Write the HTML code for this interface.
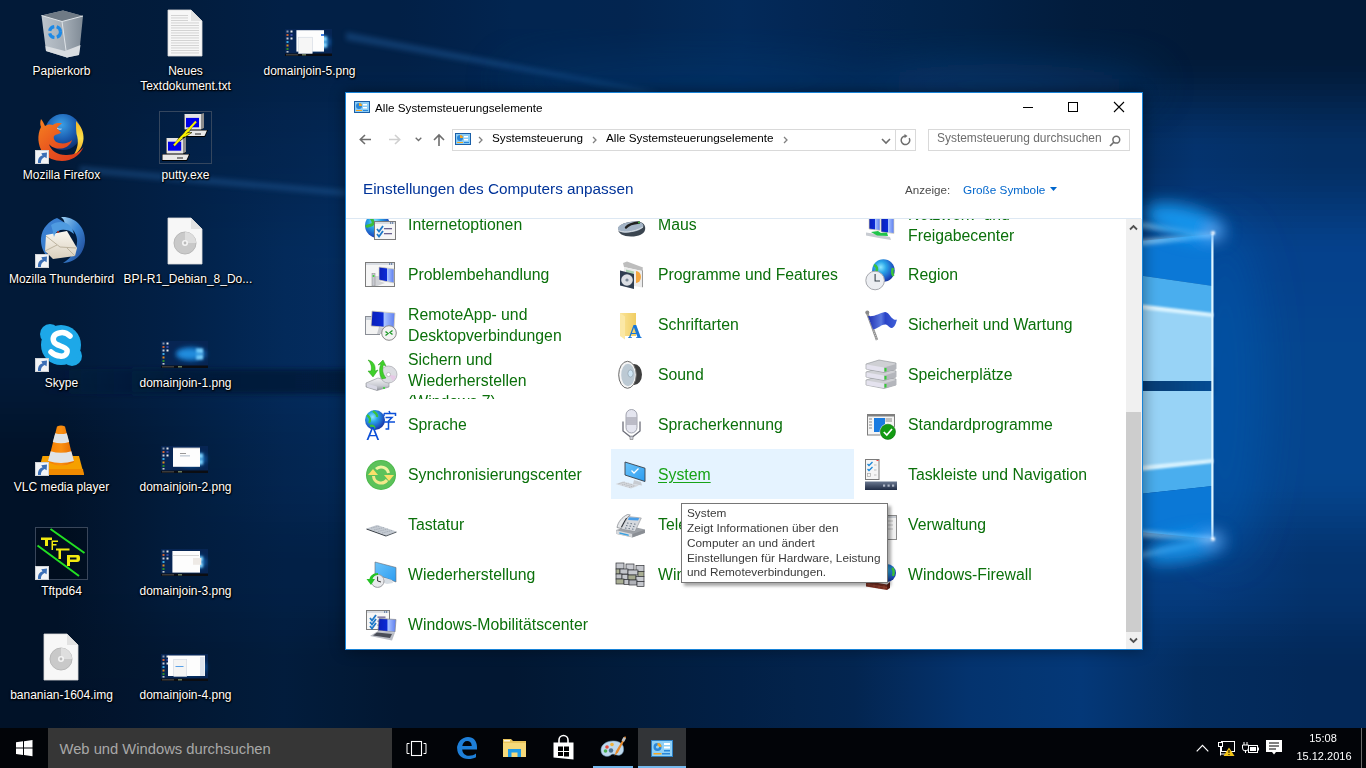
<!DOCTYPE html><html><head><meta charset="utf-8"><style>
*{margin:0;padding:0;box-sizing:border-box}
html,body{width:1366px;height:768px;overflow:hidden}
body{position:relative;font-family:"Liberation Sans",sans-serif;background:#021c3e}
.a{position:absolute}
svg.i{position:absolute;overflow:visible}
.t{position:absolute;white-space:nowrap;line-height:21px}
.dl{position:absolute;width:124px;text-align:center;color:#fff;font-size:12px;line-height:15px;white-space:nowrap;
 text-shadow:0 0 2px #000,0 1px 2px #000,1px 1px 1px rgba(0,0,0,.8)}
.it{position:absolute;white-space:nowrap;color:#0b700b;font-size:15.8px;line-height:21px}

#wall{position:absolute;left:0;top:0;width:1366px;height:728px;overflow:hidden;background:#03224a}
</style></head><body>
<svg width="0" height="0" style="position:absolute">
<defs>
 <radialGradient id="globe" cx=".38" cy=".35" r=".7"><stop offset="0" stop-color="#8ee8ff"/><stop offset=".35" stop-color="#2aa6e8"/><stop offset=".8" stop-color="#1d4fc0"/><stop offset="1" stop-color="#16309a"/></radialGradient>
 <linearGradient id="scr" x1="0" y1="0" x2="1" y2="0"><stop offset="0" stop-color="#0a1fb8"/><stop offset=".5" stop-color="#0b2ad6"/><stop offset=".55" stop-color="#aac4ff"/><stop offset="1" stop-color="#5b7cf0"/></linearGradient>
 <linearGradient id="metal" x1="0" y1="0" x2="0" y2="1"><stop offset="0" stop-color="#f4f4f6"/><stop offset=".6" stop-color="#c9cbd2"/><stop offset="1" stop-color="#8d9099"/></linearGradient>
 <linearGradient id="lblue" x1="0" y1="0" x2="1" y2="1"><stop offset="0" stop-color="#6cc4fa"/><stop offset="1" stop-color="#2c9cf0"/></linearGradient>
 <linearGradient id="fold" x1="0" y1="0" x2="1" y2="0"><stop offset="0" stop-color="#fbe59a"/><stop offset="1" stop-color="#f0cd62"/></linearGradient>
 <linearGradient id="flag" x1="0" y1="0" x2="1" y2="0"><stop offset="0" stop-color="#1f2fb0"/><stop offset=".45" stop-color="#5a78e0"/><stop offset=".6" stop-color="#2a44c8"/><stop offset="1" stop-color="#4060d8"/></linearGradient>
 <linearGradient id="tbar" x1="0" y1="0" x2="0" y2="1"><stop offset="0" stop-color="#6a7890"/><stop offset="1" stop-color="#1f2b44"/></linearGradient>
</defs></svg>

<div id="wall">
<div style="position:absolute;left:0;top:0px;width:1366px;height:6px;background:linear-gradient(90deg,rgb(2,26,56) 0.0px,rgb(2,26,56) 56.9px,rgb(2,27,58) 113.8px,rgb(2,28,60) 170.8px,rgb(2,30,65) 227.7px,rgb(2,32,70) 284.6px,rgb(2,32,70) 341.5px,rgb(2,32,70) 398.4px,rgb(2,34,75) 455.3px,rgb(2,37,80) 512.2px,rgb(2,37,80) 569.2px,rgb(3,37,80) 626.1px,rgb(3,40,85) 683.0px,rgb(3,42,90) 739.9px,rgb(3,39,85) 796.8px,rgb(3,37,80) 853.8px,rgb(2,36,76) 910.7px,rgb(2,34,72) 967.6px,rgb(2,31,66) 1024.5px,rgb(2,28,60) 1081.4px,rgb(2,27,58) 1138.3px,rgb(2,26,56) 1195.2px,rgb(2,26,56) 1252.2px,rgb(2,26,56) 1309.1px,rgb(2,26,56) 1366.0px)"></div>
<div style="position:absolute;left:0;top:6px;width:1366px;height:6px;background:linear-gradient(90deg,rgb(2,26,56) 0.0px,rgb(2,26,56) 56.9px,rgb(2,27,58) 113.8px,rgb(2,28,60) 170.8px,rgb(2,30,65) 227.7px,rgb(2,32,70) 284.6px,rgb(2,32,70) 341.5px,rgb(2,32,70) 398.4px,rgb(2,34,75) 455.3px,rgb(2,37,80) 512.2px,rgb(2,37,80) 569.2px,rgb(3,37,80) 626.1px,rgb(3,40,85) 683.0px,rgb(3,42,90) 739.9px,rgb(3,39,85) 796.8px,rgb(3,37,80) 853.8px,rgb(2,36,76) 910.7px,rgb(2,34,72) 967.6px,rgb(2,31,66) 1024.5px,rgb(2,28,60) 1081.4px,rgb(2,27,58) 1138.3px,rgb(2,26,56) 1195.2px,rgb(2,26,56) 1252.2px,rgb(2,26,56) 1309.1px,rgb(2,26,56) 1366.0px)"></div>
<div style="position:absolute;left:0;top:12px;width:1366px;height:6px;background:linear-gradient(90deg,rgb(2,26,56) 0.0px,rgb(2,26,56) 56.9px,rgb(2,27,58) 113.8px,rgb(2,28,60) 170.8px,rgb(2,30,65) 227.7px,rgb(2,32,70) 284.6px,rgb(2,32,70) 341.5px,rgb(2,32,70) 398.4px,rgb(2,34,75) 455.3px,rgb(2,37,80) 512.2px,rgb(2,37,80) 569.2px,rgb(3,37,80) 626.1px,rgb(3,40,85) 683.0px,rgb(3,42,90) 739.9px,rgb(3,39,85) 796.8px,rgb(3,37,80) 853.8px,rgb(2,36,76) 910.7px,rgb(2,34,72) 967.6px,rgb(2,31,66) 1024.5px,rgb(2,28,60) 1081.4px,rgb(2,27,58) 1138.3px,rgb(2,26,56) 1195.2px,rgb(2,26,56) 1252.2px,rgb(2,26,56) 1309.1px,rgb(2,26,56) 1366.0px)"></div>
<div style="position:absolute;left:0;top:18px;width:1366px;height:6px;background:linear-gradient(90deg,rgb(2,26,56) 0.0px,rgb(2,26,56) 56.9px,rgb(2,27,58) 113.8px,rgb(2,28,60) 170.8px,rgb(2,30,65) 227.7px,rgb(2,32,70) 284.6px,rgb(2,32,70) 341.5px,rgb(2,32,70) 398.4px,rgb(2,34,75) 455.3px,rgb(2,37,80) 512.2px,rgb(2,37,80) 569.2px,rgb(3,37,80) 626.1px,rgb(3,40,85) 683.0px,rgb(3,42,90) 739.9px,rgb(3,39,85) 796.8px,rgb(3,37,80) 853.8px,rgb(2,36,76) 910.7px,rgb(2,34,72) 967.6px,rgb(2,31,66) 1024.5px,rgb(2,28,60) 1081.4px,rgb(2,27,58) 1138.3px,rgb(2,26,56) 1195.2px,rgb(2,26,56) 1252.2px,rgb(2,26,56) 1309.1px,rgb(2,26,56) 1366.0px)"></div>
<div style="position:absolute;left:0;top:24px;width:1366px;height:6px;background:linear-gradient(90deg,rgb(2,26,56) 0.0px,rgb(2,26,56) 56.9px,rgb(2,27,58) 113.8px,rgb(2,28,60) 170.8px,rgb(2,30,65) 227.7px,rgb(2,32,70) 284.6px,rgb(2,32,70) 341.5px,rgb(2,32,70) 398.4px,rgb(2,34,75) 455.3px,rgb(2,37,80) 512.2px,rgb(2,37,80) 569.2px,rgb(3,37,80) 626.1px,rgb(3,40,85) 683.0px,rgb(3,42,90) 739.9px,rgb(3,39,85) 796.8px,rgb(3,37,80) 853.8px,rgb(2,36,76) 910.7px,rgb(2,34,72) 967.6px,rgb(2,31,66) 1024.5px,rgb(2,28,60) 1081.4px,rgb(2,27,58) 1138.3px,rgb(2,26,56) 1195.2px,rgb(2,26,56) 1252.2px,rgb(2,26,56) 1309.1px,rgb(2,26,56) 1366.0px)"></div>
<div style="position:absolute;left:0;top:30px;width:1366px;height:6px;background:linear-gradient(90deg,rgb(2,26,56) 0.0px,rgb(2,26,56) 56.9px,rgb(2,27,58) 113.8px,rgb(2,28,60) 170.8px,rgb(2,30,65) 227.7px,rgb(2,32,70) 284.6px,rgb(2,32,70) 341.5px,rgb(2,32,70) 398.4px,rgb(2,34,75) 455.3px,rgb(2,37,80) 512.2px,rgb(2,37,80) 569.2px,rgb(3,37,80) 626.1px,rgb(3,40,85) 683.0px,rgb(3,42,90) 739.9px,rgb(3,39,85) 796.8px,rgb(3,37,80) 853.8px,rgb(2,36,76) 910.7px,rgb(2,34,72) 967.6px,rgb(2,31,66) 1024.5px,rgb(2,28,60) 1081.4px,rgb(2,27,58) 1138.3px,rgb(2,26,56) 1195.2px,rgb(2,26,56) 1252.2px,rgb(2,26,56) 1309.1px,rgb(2,26,56) 1366.0px)"></div>
<div style="position:absolute;left:0;top:36px;width:1366px;height:6px;background:linear-gradient(90deg,rgb(2,26,56) 0.0px,rgb(2,26,56) 56.9px,rgb(2,27,58) 113.8px,rgb(2,28,60) 170.8px,rgb(2,30,65) 227.7px,rgb(2,32,70) 284.6px,rgb(2,32,70) 341.5px,rgb(2,32,70) 398.4px,rgb(2,34,75) 455.3px,rgb(2,37,80) 512.2px,rgb(2,37,80) 569.2px,rgb(3,37,80) 626.1px,rgb(3,40,85) 683.0px,rgb(3,42,90) 739.9px,rgb(3,39,85) 796.8px,rgb(3,37,80) 853.8px,rgb(2,36,76) 910.7px,rgb(2,34,72) 967.6px,rgb(2,31,66) 1024.5px,rgb(2,28,60) 1081.4px,rgb(2,27,58) 1138.3px,rgb(2,26,56) 1195.2px,rgb(2,26,56) 1252.2px,rgb(2,26,56) 1309.1px,rgb(2,26,56) 1366.0px)"></div>
<div style="position:absolute;left:0;top:42px;width:1366px;height:6px;background:linear-gradient(90deg,rgb(2,26,56) 0.0px,rgb(2,26,56) 56.9px,rgb(2,27,58) 113.8px,rgb(2,28,60) 170.8px,rgb(2,30,65) 227.7px,rgb(2,32,70) 284.6px,rgb(2,32,70) 341.5px,rgb(2,32,70) 398.4px,rgb(2,34,75) 455.3px,rgb(2,37,80) 512.2px,rgb(2,37,80) 569.2px,rgb(3,37,80) 626.1px,rgb(3,40,85) 683.0px,rgb(3,42,90) 739.9px,rgb(3,39,85) 796.8px,rgb(3,37,80) 853.8px,rgb(2,36,76) 910.7px,rgb(2,34,72) 967.6px,rgb(2,31,66) 1024.5px,rgb(2,28,60) 1081.4px,rgb(2,27,58) 1138.3px,rgb(2,26,56) 1195.2px,rgb(2,26,56) 1252.2px,rgb(2,26,56) 1309.1px,rgb(2,26,56) 1366.0px)"></div>
<div style="position:absolute;left:0;top:48px;width:1366px;height:6px;background:linear-gradient(90deg,rgb(2,26,56) 0.0px,rgb(2,26,56) 56.9px,rgb(2,27,58) 113.8px,rgb(2,28,60) 170.8px,rgb(2,30,65) 227.7px,rgb(2,32,70) 284.6px,rgb(2,32,70) 341.5px,rgb(2,32,70) 398.4px,rgb(2,34,75) 455.3px,rgb(2,37,80) 512.2px,rgb(2,37,80) 569.2px,rgb(3,37,80) 626.1px,rgb(3,40,85) 683.0px,rgb(3,42,90) 739.9px,rgb(3,39,85) 796.8px,rgb(3,37,80) 853.8px,rgb(2,36,76) 910.7px,rgb(2,34,72) 967.6px,rgb(2,31,66) 1024.5px,rgb(2,28,60) 1081.4px,rgb(2,27,58) 1138.3px,rgb(2,26,56) 1195.2px,rgb(2,26,56) 1252.2px,rgb(2,26,56) 1309.1px,rgb(2,26,56) 1366.0px)"></div>
<div style="position:absolute;left:0;top:54px;width:1366px;height:6px;background:linear-gradient(90deg,rgb(2,26,56) 0.0px,rgb(2,26,56) 56.9px,rgb(2,27,58) 113.8px,rgb(2,28,60) 170.8px,rgb(2,30,65) 227.7px,rgb(2,32,70) 284.6px,rgb(2,32,70) 341.5px,rgb(2,32,70) 398.4px,rgb(2,35,75) 455.3px,rgb(2,37,80) 512.2px,rgb(3,37,80) 569.2px,rgb(3,37,80) 626.1px,rgb(3,40,85) 683.0px,rgb(3,42,90) 739.9px,rgb(3,40,85) 796.8px,rgb(3,37,80) 853.8px,rgb(3,36,76) 910.7px,rgb(2,34,72) 967.6px,rgb(2,31,66) 1024.5px,rgb(2,28,60) 1081.4px,rgb(2,27,58) 1138.3px,rgb(2,26,56) 1195.2px,rgb(2,26,56) 1252.2px,rgb(2,26,56) 1309.1px,rgb(2,26,56) 1366.0px)"></div>
<div style="position:absolute;left:0;top:60px;width:1366px;height:6px;background:linear-gradient(90deg,rgb(2,26,56) 0.0px,rgb(2,26,56) 56.9px,rgb(2,27,58) 113.8px,rgb(2,28,60) 170.8px,rgb(2,30,65) 227.7px,rgb(2,32,70) 284.6px,rgb(2,32,70) 341.5px,rgb(2,32,71) 398.4px,rgb(2,35,75) 455.3px,rgb(2,37,80) 512.2px,rgb(3,37,80) 569.2px,rgb(3,37,81) 626.1px,rgb(3,40,85) 683.0px,rgb(3,42,90) 739.9px,rgb(3,40,85) 796.8px,rgb(3,37,81) 853.8px,rgb(3,36,77) 910.7px,rgb(2,34,73) 967.6px,rgb(2,31,67) 1024.5px,rgb(2,28,61) 1081.4px,rgb(2,28,59) 1138.3px,rgb(2,27,58) 1195.2px,rgb(2,27,58) 1252.2px,rgb(2,27,57) 1309.1px,rgb(2,27,57) 1366.0px)"></div>
<div style="position:absolute;left:0;top:66px;width:1366px;height:6px;background:linear-gradient(90deg,rgb(2,26,56) 0.0px,rgb(2,26,56) 56.9px,rgb(2,27,58) 113.8px,rgb(2,28,61) 170.8px,rgb(2,30,66) 227.7px,rgb(2,32,71) 284.6px,rgb(2,33,71) 341.5px,rgb(2,33,71) 398.4px,rgb(2,35,76) 455.3px,rgb(2,37,81) 512.2px,rgb(3,38,81) 569.2px,rgb(3,38,81) 626.1px,rgb(3,40,86) 683.0px,rgb(3,42,91) 739.9px,rgb(3,40,86) 796.8px,rgb(3,38,81) 853.8px,rgb(3,36,77) 910.7px,rgb(2,35,73) 967.6px,rgb(2,32,67) 1024.5px,rgb(2,29,61) 1081.4px,rgb(2,28,61) 1138.3px,rgb(2,28,60) 1195.2px,rgb(2,28,59) 1252.2px,rgb(2,27,59) 1309.1px,rgb(2,27,59) 1366.0px)"></div>
<div style="position:absolute;left:0;top:72px;width:1366px;height:6px;background:linear-gradient(90deg,rgb(2,26,56) 0.0px,rgb(2,26,56) 56.9px,rgb(2,27,59) 113.8px,rgb(2,29,61) 170.8px,rgb(2,31,66) 227.7px,rgb(2,33,71) 284.6px,rgb(2,33,72) 341.5px,rgb(2,33,73) 398.4px,rgb(2,35,77) 455.3px,rgb(2,38,81) 512.2px,rgb(3,38,82) 569.2px,rgb(3,38,83) 626.1px,rgb(3,40,87) 683.0px,rgb(3,43,91) 739.9px,rgb(3,40,87) 796.8px,rgb(3,38,83) 853.8px,rgb(3,37,78) 910.7px,rgb(2,35,74) 967.6px,rgb(2,32,68) 1024.5px,rgb(2,29,63) 1081.4px,rgb(2,29,63) 1138.3px,rgb(2,29,63) 1195.2px,rgb(2,29,62) 1252.2px,rgb(2,29,62) 1309.1px,rgb(2,29,62) 1366.0px)"></div>
<div style="position:absolute;left:0;top:78px;width:1366px;height:6px;background:linear-gradient(90deg,rgb(2,26,56) 0.0px,rgb(2,26,56) 56.9px,rgb(2,27,59) 113.8px,rgb(2,29,62) 170.8px,rgb(2,31,67) 227.7px,rgb(2,33,72) 284.6px,rgb(2,33,73) 341.5px,rgb(2,34,74) 398.4px,rgb(2,36,78) 455.3px,rgb(2,38,82) 512.2px,rgb(3,38,83) 569.2px,rgb(3,39,84) 626.1px,rgb(3,41,88) 683.0px,rgb(3,43,92) 739.9px,rgb(3,41,88) 796.8px,rgb(3,39,84) 853.8px,rgb(3,37,80) 910.7px,rgb(2,36,75) 967.6px,rgb(2,33,70) 1024.5px,rgb(2,30,64) 1081.4px,rgb(2,30,65) 1138.3px,rgb(2,31,66) 1195.2px,rgb(2,30,65) 1252.2px,rgb(2,30,64) 1309.1px,rgb(2,30,64) 1366.0px)"></div>
<div style="position:absolute;left:0;top:84px;width:1366px;height:6px;background:linear-gradient(90deg,rgb(2,26,56) 0.0px,rgb(2,26,56) 56.9px,rgb(2,28,59) 113.8px,rgb(2,29,63) 170.8px,rgb(2,31,68) 227.7px,rgb(2,33,73) 284.6px,rgb(2,34,74) 341.5px,rgb(2,35,75) 398.4px,rgb(2,36,79) 455.3px,rgb(2,38,83) 512.2px,rgb(3,39,84) 569.2px,rgb(3,40,85) 626.1px,rgb(3,41,89) 683.0px,rgb(3,43,93) 739.9px,rgb(3,41,89) 796.8px,rgb(3,40,85) 853.8px,rgb(3,38,81) 910.7px,rgb(2,36,77) 967.6px,rgb(2,33,71) 1024.5px,rgb(2,30,65) 1081.4px,rgb(2,31,68) 1138.3px,rgb(3,33,70) 1195.2px,rgb(3,32,69) 1252.2px,rgb(3,32,68) 1309.1px,rgb(3,32,68) 1366.0px)"></div>
<div style="position:absolute;left:0;top:90px;width:1366px;height:6px;background:linear-gradient(90deg,rgb(2,26,56) 0.0px,rgb(2,26,56) 56.9px,rgb(2,28,60) 113.8px,rgb(2,29,63) 170.8px,rgb(2,32,68) 227.7px,rgb(2,34,73) 284.6px,rgb(2,35,75) 341.5px,rgb(2,35,77) 398.4px,rgb(2,37,80) 455.3px,rgb(2,39,83) 512.2px,rgb(3,40,85) 569.2px,rgb(3,40,87) 626.1px,rgb(3,42,90) 683.0px,rgb(3,44,93) 739.9px,rgb(3,42,90) 796.8px,rgb(3,40,87) 853.8px,rgb(3,39,83) 910.7px,rgb(2,37,78) 967.6px,rgb(2,34,73) 1024.5px,rgb(2,31,67) 1081.4px,rgb(3,33,71) 1138.3px,rgb(3,35,75) 1195.2px,rgb(3,34,73) 1252.2px,rgb(3,33,71) 1309.1px,rgb(3,33,71) 1366.0px)"></div>
<div style="position:absolute;left:0;top:96px;width:1366px;height:6px;background:linear-gradient(90deg,rgb(2,26,56) 0.0px,rgb(2,26,56) 56.9px,rgb(2,28,60) 113.8px,rgb(2,30,64) 170.8px,rgb(2,32,69) 227.7px,rgb(2,34,74) 284.6px,rgb(2,35,76) 341.5px,rgb(2,36,79) 398.4px,rgb(2,38,81) 455.3px,rgb(2,39,84) 512.2px,rgb(3,40,86) 569.2px,rgb(3,41,89) 626.1px,rgb(3,43,91) 683.0px,rgb(3,44,94) 739.9px,rgb(3,43,91) 796.8px,rgb(3,41,89) 853.8px,rgb(3,39,84) 910.7px,rgb(2,37,80) 967.6px,rgb(2,35,74) 1024.5px,rgb(2,32,69) 1081.4px,rgb(3,34,74) 1138.3px,rgb(3,37,79) 1195.2px,rgb(3,36,77) 1252.2px,rgb(3,35,75) 1309.1px,rgb(3,35,75) 1366.0px)"></div>
<div style="position:absolute;left:0;top:102px;width:1366px;height:6px;background:linear-gradient(90deg,rgb(2,26,56) 0.0px,rgb(2,26,56) 56.9px,rgb(2,28,61) 113.8px,rgb(2,30,65) 170.8px,rgb(2,32,70) 227.7px,rgb(3,35,75) 284.6px,rgb(3,36,78) 341.5px,rgb(3,37,80) 398.4px,rgb(3,38,83) 455.3px,rgb(3,40,85) 512.2px,rgb(3,41,88) 569.2px,rgb(4,42,90) 626.1px,rgb(4,43,93) 683.0px,rgb(4,45,95) 739.9px,rgb(4,43,93) 796.8px,rgb(4,42,90) 853.8px,rgb(3,40,86) 910.7px,rgb(3,38,81) 967.6px,rgb(3,35,76) 1024.5px,rgb(3,33,70) 1081.4px,rgb(3,36,77) 1138.3px,rgb(3,39,84) 1195.2px,rgb(3,38,81) 1252.2px,rgb(3,37,79) 1309.1px,rgb(3,37,79) 1366.0px)"></div>
<div style="position:absolute;left:0;top:108px;width:1366px;height:6px;background:linear-gradient(90deg,rgb(2,26,56) 0.0px,rgb(2,26,56) 56.9px,rgb(2,28,61) 113.8px,rgb(2,30,66) 170.8px,rgb(2,33,71) 227.7px,rgb(3,35,76) 284.6px,rgb(3,37,79) 341.5px,rgb(3,38,82) 398.4px,rgb(3,39,84) 455.3px,rgb(3,40,86) 512.2px,rgb(3,42,89) 569.2px,rgb(4,43,92) 626.1px,rgb(4,44,94) 683.0px,rgb(4,45,96) 739.9px,rgb(4,44,94) 796.8px,rgb(4,43,92) 853.8px,rgb(3,41,87) 910.7px,rgb(3,39,83) 967.6px,rgb(3,36,77) 1024.5px,rgb(3,33,72) 1081.4px,rgb(3,37,80) 1138.3px,rgb(3,41,88) 1195.2px,rgb(3,40,85) 1252.2px,rgb(3,39,82) 1309.1px,rgb(3,39,82) 1366.0px)"></div>
<div style="position:absolute;left:0;top:114px;width:1366px;height:6px;background:linear-gradient(90deg,rgb(2,26,56) 0.0px,rgb(2,26,56) 56.9px,rgb(2,28,61) 113.8px,rgb(2,31,67) 170.8px,rgb(2,33,72) 227.7px,rgb(3,35,77) 284.6px,rgb(3,37,80) 341.5px,rgb(3,39,84) 398.4px,rgb(3,40,85) 455.3px,rgb(3,40,87) 512.2px,rgb(3,42,90) 569.2px,rgb(4,44,94) 626.1px,rgb(4,45,95) 683.0px,rgb(4,45,97) 739.9px,rgb(4,45,95) 796.8px,rgb(4,44,94) 853.8px,rgb(3,42,89) 910.7px,rgb(3,39,84) 967.6px,rgb(3,37,79) 1024.5px,rgb(3,34,74) 1081.4px,rgb(3,39,83) 1138.3px,rgb(3,43,93) 1195.2px,rgb(3,42,89) 1252.2px,rgb(3,40,86) 1309.1px,rgb(3,40,86) 1366.0px)"></div>
<div style="position:absolute;left:0;top:120px;width:1366px;height:6px;background:linear-gradient(90deg,rgb(2,26,56) 0.0px,rgb(2,26,56) 56.9px,rgb(2,29,62) 113.8px,rgb(2,31,68) 170.8px,rgb(2,33,73) 227.7px,rgb(3,36,78) 284.6px,rgb(3,38,81) 341.5px,rgb(3,40,85) 398.4px,rgb(3,40,86) 455.3px,rgb(3,41,88) 512.2px,rgb(3,43,91) 569.2px,rgb(4,45,95) 626.1px,rgb(4,45,96) 683.0px,rgb(4,46,98) 739.9px,rgb(4,45,96) 796.8px,rgb(4,45,95) 853.8px,rgb(3,42,90) 910.7px,rgb(3,40,86) 967.6px,rgb(3,37,80) 1024.5px,rgb(3,35,75) 1081.4px,rgb(3,40,86) 1138.3px,rgb(4,45,97) 1195.2px,rgb(4,44,93) 1252.2px,rgb(4,42,90) 1309.1px,rgb(4,42,90) 1366.0px)"></div>
<div style="position:absolute;left:0;top:126px;width:1366px;height:6px;background:linear-gradient(90deg,rgb(2,26,56) 0.0px,rgb(2,26,56) 56.9px,rgb(2,29,62) 113.8px,rgb(2,31,68) 170.8px,rgb(2,34,73) 227.7px,rgb(3,36,78) 284.6px,rgb(3,38,82) 341.5px,rgb(3,40,87) 398.4px,rgb(3,41,87) 455.3px,rgb(3,41,88) 512.2px,rgb(3,43,92) 569.2px,rgb(4,45,97) 626.1px,rgb(4,46,97) 683.0px,rgb(4,46,98) 739.9px,rgb(4,46,97) 796.8px,rgb(4,45,97) 853.8px,rgb(3,43,92) 910.7px,rgb(3,41,87) 967.6px,rgb(3,38,82) 1024.5px,rgb(3,35,77) 1081.4px,rgb(3,41,89) 1138.3px,rgb(4,47,101) 1195.2px,rgb(4,45,97) 1252.2px,rgb(4,43,93) 1309.1px,rgb(4,43,93) 1366.0px)"></div>
<div style="position:absolute;left:0;top:132px;width:1366px;height:6px;background:linear-gradient(90deg,rgb(2,26,56) 0.0px,rgb(2,26,56) 56.9px,rgb(2,29,62) 113.8px,rgb(2,32,69) 170.8px,rgb(2,34,74) 227.7px,rgb(3,36,79) 284.6px,rgb(3,39,83) 341.5px,rgb(3,41,88) 398.4px,rgb(3,41,88) 455.3px,rgb(3,41,89) 512.2px,rgb(3,44,93) 569.2px,rgb(4,46,98) 626.1px,rgb(4,46,98) 683.0px,rgb(4,46,99) 739.9px,rgb(4,46,98) 796.8px,rgb(4,46,98) 853.8px,rgb(3,44,93) 910.7px,rgb(3,41,88) 967.6px,rgb(3,39,83) 1024.5px,rgb(3,36,78) 1081.4px,rgb(3,42,91) 1138.3px,rgb(4,48,104) 1195.2px,rgb(4,47,100) 1252.2px,rgb(4,45,95) 1309.1px,rgb(4,45,95) 1366.0px)"></div>
<div style="position:absolute;left:0;top:138px;width:1366px;height:6px;background:linear-gradient(90deg,rgb(2,26,56) 0.0px,rgb(2,26,56) 56.9px,rgb(2,29,63) 113.8px,rgb(2,32,69) 170.8px,rgb(2,34,74) 227.7px,rgb(3,37,79) 284.6px,rgb(3,39,84) 341.5px,rgb(3,41,89) 398.4px,rgb(3,42,89) 455.3px,rgb(3,42,89) 512.2px,rgb(3,44,94) 569.2px,rgb(4,46,99) 626.1px,rgb(4,47,99) 683.0px,rgb(4,47,99) 739.9px,rgb(4,47,99) 796.8px,rgb(4,46,99) 853.8px,rgb(3,44,94) 910.7px,rgb(3,42,89) 967.6px,rgb(3,39,84) 1024.5px,rgb(3,36,79) 1081.4px,rgb(3,43,93) 1138.3px,rgb(4,50,107) 1195.2px,rgb(4,48,102) 1252.2px,rgb(4,46,98) 1309.1px,rgb(4,46,98) 1366.0px)"></div>
<div style="position:absolute;left:0;top:144px;width:1366px;height:6px;background:linear-gradient(90deg,rgb(2,26,56) 0.0px,rgb(2,26,56) 56.9px,rgb(2,29,63) 113.8px,rgb(2,32,70) 170.8px,rgb(2,34,75) 227.7px,rgb(3,37,80) 284.6px,rgb(3,39,85) 341.5px,rgb(3,42,90) 398.4px,rgb(3,42,90) 455.3px,rgb(3,42,90) 512.2px,rgb(3,44,95) 569.2px,rgb(4,47,100) 626.1px,rgb(4,47,100) 683.0px,rgb(4,47,100) 739.9px,rgb(4,47,100) 796.8px,rgb(4,47,100) 853.8px,rgb(3,44,95) 910.7px,rgb(3,42,90) 967.6px,rgb(3,39,85) 1024.5px,rgb(3,37,80) 1081.4px,rgb(3,44,94) 1138.3px,rgb(4,50,109) 1195.2px,rgb(4,49,104) 1252.2px,rgb(4,47,99) 1309.1px,rgb(4,47,99) 1366.0px)"></div>
<div style="position:absolute;left:0;top:150px;width:1366px;height:6px;background:linear-gradient(90deg,rgb(2,26,56) 0.0px,rgb(2,26,56) 56.9px,rgb(2,29,63) 113.8px,rgb(2,32,70) 170.8px,rgb(2,34,75) 227.7px,rgb(3,37,80) 284.6px,rgb(3,39,85) 341.5px,rgb(3,42,90) 398.4px,rgb(3,42,90) 455.3px,rgb(3,42,90) 512.2px,rgb(3,44,95) 569.2px,rgb(4,47,100) 626.1px,rgb(4,47,100) 683.0px,rgb(4,47,100) 739.9px,rgb(4,47,100) 796.8px,rgb(4,47,100) 853.8px,rgb(3,44,95) 910.7px,rgb(3,42,90) 967.6px,rgb(3,39,85) 1024.5px,rgb(3,37,80) 1081.4px,rgb(3,44,95) 1138.3px,rgb(4,51,110) 1195.2px,rgb(4,49,105) 1252.2px,rgb(4,47,100) 1309.1px,rgb(4,47,100) 1366.0px)"></div>
<div style="position:absolute;left:0;top:156px;width:1366px;height:6px;background:linear-gradient(90deg,rgb(2,26,56) 0.0px,rgb(2,26,56) 56.9px,rgb(2,29,63) 113.8px,rgb(2,32,70) 170.8px,rgb(3,35,75) 227.7px,rgb(3,37,80) 284.6px,rgb(3,40,85) 341.5px,rgb(3,42,90) 398.4px,rgb(3,42,90) 455.3px,rgb(3,42,90) 512.2px,rgb(4,45,95) 569.2px,rgb(4,47,100) 626.1px,rgb(4,47,100) 683.0px,rgb(4,47,100) 739.9px,rgb(4,47,100) 796.8px,rgb(4,47,100) 853.8px,rgb(4,45,95) 910.7px,rgb(3,42,90) 967.6px,rgb(3,40,85) 1024.5px,rgb(3,37,80) 1081.4px,rgb(4,44,95) 1138.3px,rgb(4,51,110) 1195.2px,rgb(4,49,105) 1252.2px,rgb(4,47,100) 1309.1px,rgb(4,47,100) 1366.0px)"></div>
<div style="position:absolute;left:0;top:162px;width:1366px;height:6px;background:linear-gradient(90deg,rgb(2,26,56) 0.0px,rgb(2,26,56) 56.9px,rgb(2,29,63) 113.8px,rgb(2,32,70) 170.8px,rgb(2,35,75) 227.7px,rgb(3,37,80) 284.6px,rgb(3,40,85) 341.5px,rgb(3,42,90) 398.4px,rgb(3,42,90) 455.3px,rgb(3,42,90) 512.2px,rgb(4,45,95) 569.2px,rgb(4,47,100) 626.1px,rgb(4,47,100) 683.0px,rgb(4,47,100) 739.9px,rgb(4,47,100) 796.8px,rgb(4,47,100) 853.8px,rgb(4,45,96) 910.7px,rgb(3,42,91) 967.6px,rgb(3,40,86) 1024.5px,rgb(3,38,81) 1081.4px,rgb(4,44,96) 1138.3px,rgb(4,51,111) 1195.2px,rgb(4,49,106) 1252.2px,rgb(4,47,101) 1309.1px,rgb(4,47,101) 1366.0px)"></div>
<div style="position:absolute;left:0;top:168px;width:1366px;height:6px;background:linear-gradient(90deg,rgb(2,26,56) 0.0px,rgb(2,26,56) 56.9px,rgb(2,29,63) 113.8px,rgb(2,32,70) 170.8px,rgb(2,35,75) 227.7px,rgb(3,37,81) 284.6px,rgb(3,40,86) 341.5px,rgb(3,42,91) 398.4px,rgb(3,42,91) 455.3px,rgb(3,43,91) 512.2px,rgb(4,45,96) 569.2px,rgb(4,47,101) 626.1px,rgb(4,47,101) 683.0px,rgb(4,48,101) 739.9px,rgb(4,48,101) 796.8px,rgb(4,48,101) 853.8px,rgb(4,45,97) 910.7px,rgb(3,43,92) 967.6px,rgb(3,41,88) 1024.5px,rgb(3,38,83) 1081.4px,rgb(4,45,97) 1138.3px,rgb(4,52,112) 1195.2px,rgb(4,50,107) 1252.2px,rgb(4,48,102) 1309.1px,rgb(4,48,102) 1366.0px)"></div>
<div style="position:absolute;left:0;top:174px;width:1366px;height:6px;background:linear-gradient(90deg,rgb(2,26,56) 0.0px,rgb(2,26,56) 56.9px,rgb(2,29,63) 113.8px,rgb(2,32,70) 170.8px,rgb(2,35,76) 227.7px,rgb(3,38,81) 284.6px,rgb(3,40,86) 341.5px,rgb(3,43,91) 398.4px,rgb(3,43,92) 455.3px,rgb(3,43,92) 512.2px,rgb(4,45,97) 569.2px,rgb(4,47,101) 626.1px,rgb(4,48,102) 683.0px,rgb(4,48,102) 739.9px,rgb(4,48,102) 796.8px,rgb(4,48,102) 853.8px,rgb(4,46,98) 910.7px,rgb(3,44,94) 967.6px,rgb(3,42,90) 1024.5px,rgb(3,40,85) 1081.4px,rgb(4,46,99) 1138.3px,rgb(4,52,113) 1195.2px,rgb(4,51,109) 1252.2px,rgb(4,49,104) 1309.1px,rgb(4,49,104) 1366.0px)"></div>
<div style="position:absolute;left:0;top:180px;width:1366px;height:6px;background:linear-gradient(90deg,rgb(2,26,56) 0.0px,rgb(2,26,56) 56.9px,rgb(2,29,63) 113.8px,rgb(2,32,70) 170.8px,rgb(2,35,76) 227.7px,rgb(3,38,82) 284.6px,rgb(3,40,87) 341.5px,rgb(3,43,92) 398.4px,rgb(3,43,93) 455.3px,rgb(3,44,93) 512.2px,rgb(4,46,98) 569.2px,rgb(4,48,102) 626.1px,rgb(4,48,103) 683.0px,rgb(4,49,103) 739.9px,rgb(4,49,103) 796.8px,rgb(4,49,103) 853.8px,rgb(4,47,100) 910.7px,rgb(3,45,97) 967.6px,rgb(3,43,93) 1024.5px,rgb(3,41,88) 1081.4px,rgb(4,47,102) 1138.3px,rgb(4,53,115) 1195.2px,rgb(4,52,111) 1252.2px,rgb(4,50,107) 1309.1px,rgb(4,50,107) 1366.0px)"></div>
<div style="position:absolute;left:0;top:186px;width:1366px;height:6px;background:linear-gradient(90deg,rgb(2,26,56) 0.0px,rgb(2,26,56) 56.9px,rgb(2,29,63) 113.8px,rgb(2,32,70) 170.8px,rgb(2,35,76) 227.7px,rgb(3,38,82) 284.6px,rgb(3,41,87) 341.5px,rgb(3,43,92) 398.4px,rgb(3,44,94) 455.3px,rgb(3,44,95) 512.2px,rgb(4,46,99) 569.2px,rgb(4,48,102) 626.1px,rgb(4,49,104) 683.0px,rgb(4,49,105) 739.9px,rgb(4,49,105) 796.8px,rgb(4,49,105) 853.8px,rgb(4,48,102) 910.7px,rgb(3,47,100) 967.6px,rgb(3,45,96) 1024.5px,rgb(3,43,92) 1081.4px,rgb(4,49,105) 1138.3px,rgb(4,54,117) 1195.2px,rgb(4,53,113) 1252.2px,rgb(4,51,110) 1309.1px,rgb(4,51,110) 1366.0px)"></div>
<div style="position:absolute;left:0;top:192px;width:1366px;height:6px;background:linear-gradient(90deg,rgb(2,26,56) 0.0px,rgb(2,26,56) 56.9px,rgb(2,29,63) 113.8px,rgb(2,32,70) 170.8px,rgb(2,35,77) 227.7px,rgb(3,39,83) 284.6px,rgb(3,41,88) 341.5px,rgb(3,44,93) 398.4px,rgb(3,44,95) 455.3px,rgb(3,45,96) 512.2px,rgb(4,47,100) 569.2px,rgb(4,48,103) 626.1px,rgb(4,49,105) 683.0px,rgb(4,50,106) 739.9px,rgb(4,50,106) 796.8px,rgb(4,50,106) 853.8px,rgb(4,49,104) 910.7px,rgb(4,48,103) 967.6px,rgb(4,46,99) 1024.5px,rgb(4,45,96) 1081.4px,rgb(4,50,108) 1138.3px,rgb(4,55,119) 1195.2px,rgb(4,54,116) 1252.2px,rgb(4,53,113) 1309.1px,rgb(4,53,113) 1366.0px)"></div>
<div style="position:absolute;left:0;top:198px;width:1366px;height:6px;background:linear-gradient(90deg,rgb(2,26,56) 0.0px,rgb(2,26,56) 56.9px,rgb(2,29,63) 113.8px,rgb(2,32,70) 170.8px,rgb(2,35,77) 227.7px,rgb(3,39,84) 284.6px,rgb(3,41,89) 341.5px,rgb(3,44,94) 398.4px,rgb(3,45,96) 455.3px,rgb(3,46,98) 512.2px,rgb(4,47,101) 569.2px,rgb(4,49,104) 626.1px,rgb(4,50,106) 683.0px,rgb(4,51,108) 739.9px,rgb(4,51,108) 796.8px,rgb(4,51,108) 853.8px,rgb(4,50,107) 910.7px,rgb(4,50,106) 967.6px,rgb(4,48,103) 1024.5px,rgb(4,47,100) 1081.4px,rgb(4,52,111) 1138.3px,rgb(4,57,122) 1195.2px,rgb(4,55,119) 1252.2px,rgb(4,54,116) 1309.1px,rgb(4,54,116) 1366.0px)"></div>
<div style="position:absolute;left:0;top:204px;width:1366px;height:6px;background:linear-gradient(90deg,rgb(2,26,56) 0.0px,rgb(2,26,56) 56.9px,rgb(2,29,63) 113.8px,rgb(2,32,70) 170.8px,rgb(2,36,77) 227.7px,rgb(3,39,85) 284.6px,rgb(3,42,90) 341.5px,rgb(3,44,95) 398.4px,rgb(3,45,97) 455.3px,rgb(3,46,100) 512.2px,rgb(4,48,102) 569.2px,rgb(4,49,105) 626.1px,rgb(4,50,107) 683.0px,rgb(4,51,110) 739.9px,rgb(4,51,110) 796.8px,rgb(4,51,110) 853.8px,rgb(4,51,110) 910.7px,rgb(4,51,109) 967.6px,rgb(4,50,107) 1024.5px,rgb(4,49,104) 1081.4px,rgb(4,53,114) 1138.3px,rgb(4,58,125) 1195.2px,rgb(4,57,122) 1252.2px,rgb(4,56,119) 1309.1px,rgb(4,56,119) 1366.0px)"></div>
<div style="position:absolute;left:0;top:210px;width:1366px;height:6px;background:linear-gradient(90deg,rgb(2,26,56) 0.0px,rgb(2,26,56) 56.9px,rgb(2,29,63) 113.8px,rgb(2,32,70) 170.8px,rgb(2,36,78) 227.7px,rgb(3,40,86) 284.6px,rgb(3,42,91) 341.5px,rgb(4,45,96) 398.4px,rgb(4,46,99) 455.3px,rgb(4,47,101) 512.2px,rgb(4,48,104) 569.2px,rgb(4,49,106) 626.1px,rgb(4,51,109) 683.0px,rgb(4,52,111) 739.9px,rgb(4,52,111) 796.8px,rgb(4,52,111) 853.8px,rgb(4,53,112) 910.7px,rgb(4,53,113) 967.6px,rgb(4,52,111) 1024.5px,rgb(4,51,109) 1081.4px,rgb(4,55,118) 1138.3px,rgb(5,59,127) 1195.2px,rgb(5,58,125) 1252.2px,rgb(5,57,123) 1309.1px,rgb(5,57,123) 1366.0px)"></div>
<div style="position:absolute;left:0;top:216px;width:1366px;height:6px;background:linear-gradient(90deg,rgb(2,26,56) 0.0px,rgb(2,26,56) 56.9px,rgb(2,29,63) 113.8px,rgb(2,32,70) 170.8px,rgb(2,36,78) 227.7px,rgb(3,40,87) 284.6px,rgb(3,43,92) 341.5px,rgb(4,45,97) 398.4px,rgb(4,47,100) 455.3px,rgb(4,48,103) 512.2px,rgb(4,49,105) 569.2px,rgb(4,50,107) 626.1px,rgb(4,51,110) 683.0px,rgb(4,53,113) 739.9px,rgb(4,53,113) 796.8px,rgb(4,53,113) 853.8px,rgb(4,54,115) 910.7px,rgb(4,54,116) 967.6px,rgb(4,54,115) 1024.5px,rgb(4,53,113) 1081.4px,rgb(4,56,121) 1138.3px,rgb(5,60,130) 1195.2px,rgb(5,60,128) 1252.2px,rgb(5,59,126) 1309.1px,rgb(5,59,126) 1366.0px)"></div>
<div style="position:absolute;left:0;top:222px;width:1366px;height:6px;background:linear-gradient(90deg,rgb(2,26,56) 0.0px,rgb(2,26,56) 56.9px,rgb(2,29,63) 113.8px,rgb(2,32,70) 170.8px,rgb(2,36,79) 227.7px,rgb(3,41,87) 284.6px,rgb(3,43,92) 341.5px,rgb(4,46,97) 398.4px,rgb(4,47,101) 455.3px,rgb(4,49,105) 512.2px,rgb(4,49,106) 569.2px,rgb(4,50,107) 626.1px,rgb(4,52,111) 683.0px,rgb(4,54,115) 739.9px,rgb(4,54,115) 796.8px,rgb(4,54,115) 853.8px,rgb(4,55,117) 910.7px,rgb(4,56,119) 967.6px,rgb(4,55,118) 1024.5px,rgb(4,55,117) 1081.4px,rgb(5,58,124) 1138.3px,rgb(5,61,132) 1195.2px,rgb(5,61,131) 1252.2px,rgb(5,60,129) 1309.1px,rgb(5,60,129) 1366.0px)"></div>
<div style="position:absolute;left:0;top:228px;width:1366px;height:6px;background:linear-gradient(90deg,rgb(2,26,56) 0.0px,rgb(2,26,56) 56.9px,rgb(2,29,63) 113.8px,rgb(2,32,70) 170.8px,rgb(2,37,79) 227.7px,rgb(3,41,88) 284.6px,rgb(3,44,93) 341.5px,rgb(4,46,98) 398.4px,rgb(4,48,102) 455.3px,rgb(4,49,106) 512.2px,rgb(4,50,107) 569.2px,rgb(4,50,108) 626.1px,rgb(4,52,112) 683.0px,rgb(4,54,116) 739.9px,rgb(4,54,116) 796.8px,rgb(4,54,116) 853.8px,rgb(4,56,119) 910.7px,rgb(5,57,122) 967.6px,rgb(5,57,121) 1024.5px,rgb(5,56,121) 1081.4px,rgb(5,59,127) 1138.3px,rgb(5,62,134) 1195.2px,rgb(5,62,133) 1252.2px,rgb(5,62,132) 1309.1px,rgb(5,62,132) 1366.0px)"></div>
<div style="position:absolute;left:0;top:234px;width:1366px;height:6px;background:linear-gradient(90deg,rgb(2,26,56) 0.0px,rgb(2,26,56) 56.9px,rgb(2,29,63) 113.8px,rgb(2,32,70) 170.8px,rgb(2,37,79) 227.7px,rgb(3,41,89) 284.6px,rgb(3,44,94) 341.5px,rgb(4,46,99) 398.4px,rgb(4,48,103) 455.3px,rgb(4,50,107) 512.2px,rgb(4,50,108) 569.2px,rgb(4,50,109) 626.1px,rgb(4,53,113) 683.0px,rgb(4,55,117) 739.9px,rgb(4,55,117) 796.8px,rgb(4,55,117) 853.8px,rgb(4,57,121) 910.7px,rgb(5,59,125) 967.6px,rgb(5,58,124) 1024.5px,rgb(5,58,124) 1081.4px,rgb(5,61,130) 1138.3px,rgb(5,63,136) 1195.2px,rgb(5,63,136) 1252.2px,rgb(5,63,135) 1309.1px,rgb(5,63,135) 1366.0px)"></div>
<div style="position:absolute;left:0;top:240px;width:1366px;height:6px;background:linear-gradient(90deg,rgb(2,26,56) 0.0px,rgb(2,26,56) 56.9px,rgb(2,29,63) 113.8px,rgb(2,32,70) 170.8px,rgb(2,37,80) 227.7px,rgb(3,42,89) 284.6px,rgb(3,44,94) 341.5px,rgb(4,47,99) 398.4px,rgb(4,49,104) 455.3px,rgb(4,50,109) 512.2px,rgb(4,51,109) 569.2px,rgb(4,51,109) 626.1px,rgb(4,53,114) 683.0px,rgb(4,55,119) 739.9px,rgb(4,55,119) 796.8px,rgb(4,55,119) 853.8px,rgb(4,58,123) 910.7px,rgb(5,60,127) 967.6px,rgb(5,59,127) 1024.5px,rgb(5,59,126) 1081.4px,rgb(5,62,132) 1138.3px,rgb(5,64,138) 1195.2px,rgb(5,64,138) 1252.2px,rgb(5,64,137) 1309.1px,rgb(5,64,137) 1366.0px)"></div>
<div style="position:absolute;left:0;top:246px;width:1366px;height:6px;background:linear-gradient(90deg,rgb(2,26,56) 0.0px,rgb(2,26,56) 56.9px,rgb(2,29,63) 113.8px,rgb(2,32,70) 170.8px,rgb(2,37,80) 227.7px,rgb(3,42,90) 284.6px,rgb(3,44,95) 341.5px,rgb(4,47,100) 398.4px,rgb(4,49,105) 455.3px,rgb(4,51,109) 512.2px,rgb(4,51,110) 569.2px,rgb(4,51,110) 626.1px,rgb(4,53,115) 683.0px,rgb(4,56,119) 739.9px,rgb(4,56,119) 796.8px,rgb(4,56,119) 853.8px,rgb(4,58,124) 910.7px,rgb(5,60,129) 967.6px,rgb(5,60,129) 1024.5px,rgb(5,60,128) 1081.4px,rgb(5,62,134) 1138.3px,rgb(5,65,139) 1195.2px,rgb(5,65,139) 1252.2px,rgb(5,64,139) 1309.1px,rgb(5,64,139) 1366.0px)"></div>
<div style="position:absolute;left:0;top:252px;width:1366px;height:6px;background:linear-gradient(90deg,rgb(2,26,56) 0.0px,rgb(2,26,56) 56.9px,rgb(2,29,63) 113.8px,rgb(2,32,70) 170.8px,rgb(2,37,80) 227.7px,rgb(3,42,90) 284.6px,rgb(3,44,95) 341.5px,rgb(4,47,100) 398.4px,rgb(4,49,105) 455.3px,rgb(4,51,110) 512.2px,rgb(4,51,110) 569.2px,rgb(4,51,110) 626.1px,rgb(4,53,115) 683.0px,rgb(4,56,120) 739.9px,rgb(4,56,120) 796.8px,rgb(4,56,120) 853.8px,rgb(4,58,125) 910.7px,rgb(5,61,130) 967.6px,rgb(5,61,130) 1024.5px,rgb(5,61,130) 1081.4px,rgb(5,63,135) 1138.3px,rgb(5,65,140) 1195.2px,rgb(5,65,140) 1252.2px,rgb(5,65,140) 1309.1px,rgb(5,65,140) 1366.0px)"></div>
<div style="position:absolute;left:0;top:258px;width:1366px;height:6px;background:linear-gradient(90deg,rgb(2,26,56) 0.0px,rgb(2,26,56) 56.9px,rgb(2,29,63) 113.8px,rgb(2,32,70) 170.8px,rgb(2,37,80) 227.7px,rgb(3,42,90) 284.6px,rgb(4,45,95) 341.5px,rgb(4,47,100) 398.4px,rgb(4,49,105) 455.3px,rgb(4,51,110) 512.2px,rgb(4,51,110) 569.2px,rgb(4,51,110) 626.1px,rgb(4,54,115) 683.0px,rgb(4,56,120) 739.9px,rgb(4,56,120) 796.8px,rgb(4,56,120) 853.8px,rgb(4,58,125) 910.7px,rgb(5,61,130) 967.6px,rgb(5,61,130) 1024.5px,rgb(5,61,130) 1081.4px,rgb(5,63,135) 1138.3px,rgb(5,65,140) 1195.2px,rgb(5,65,140) 1252.2px,rgb(5,65,140) 1309.1px,rgb(5,65,140) 1366.0px)"></div>
<div style="position:absolute;left:0;top:264px;width:1366px;height:6px;background:linear-gradient(90deg,rgb(2,26,56) 0.0px,rgb(2,26,56) 56.9px,rgb(2,29,63) 113.8px,rgb(2,32,70) 170.8px,rgb(2,37,80) 227.7px,rgb(3,42,90) 284.6px,rgb(4,44,95) 341.5px,rgb(4,47,100) 398.4px,rgb(4,49,105) 455.3px,rgb(4,51,110) 512.2px,rgb(4,51,110) 569.2px,rgb(4,51,110) 626.1px,rgb(4,54,115) 683.0px,rgb(4,56,120) 739.9px,rgb(4,56,120) 796.8px,rgb(4,56,120) 853.8px,rgb(4,58,125) 910.7px,rgb(5,61,130) 967.6px,rgb(5,61,130) 1024.5px,rgb(5,61,130) 1081.4px,rgb(5,63,135) 1138.3px,rgb(5,65,140) 1195.2px,rgb(5,65,140) 1252.2px,rgb(5,65,140) 1309.1px,rgb(5,65,140) 1366.0px)"></div>
<div style="position:absolute;left:0;top:270px;width:1366px;height:6px;background:linear-gradient(90deg,rgb(2,26,56) 0.0px,rgb(2,26,56) 56.9px,rgb(2,29,63) 113.8px,rgb(2,32,70) 170.8px,rgb(2,37,80) 227.7px,rgb(3,42,90) 284.6px,rgb(4,44,95) 341.5px,rgb(4,47,100) 398.4px,rgb(4,49,105) 455.3px,rgb(4,51,110) 512.2px,rgb(4,51,110) 569.2px,rgb(4,51,110) 626.1px,rgb(4,54,115) 683.0px,rgb(4,56,120) 739.9px,rgb(4,56,120) 796.8px,rgb(4,56,120) 853.8px,rgb(4,58,125) 910.7px,rgb(5,61,130) 967.6px,rgb(5,61,130) 1024.5px,rgb(5,61,130) 1081.4px,rgb(5,63,135) 1138.3px,rgb(5,65,140) 1195.2px,rgb(5,65,140) 1252.2px,rgb(5,65,140) 1309.1px,rgb(5,65,140) 1366.0px)"></div>
<div style="position:absolute;left:0;top:276px;width:1366px;height:6px;background:linear-gradient(90deg,rgb(2,26,56) 0.0px,rgb(2,26,56) 56.9px,rgb(2,29,63) 113.8px,rgb(2,32,70) 170.8px,rgb(2,37,80) 227.7px,rgb(3,42,90) 284.6px,rgb(4,44,95) 341.5px,rgb(4,47,100) 398.4px,rgb(4,49,105) 455.3px,rgb(4,51,110) 512.2px,rgb(4,51,110) 569.2px,rgb(4,51,110) 626.1px,rgb(4,54,115) 683.0px,rgb(4,56,120) 739.9px,rgb(4,56,120) 796.8px,rgb(4,56,120) 853.8px,rgb(4,58,125) 910.7px,rgb(5,61,130) 967.6px,rgb(5,61,130) 1024.5px,rgb(5,61,131) 1081.4px,rgb(5,63,136) 1138.3px,rgb(5,65,140) 1195.2px,rgb(5,65,140) 1252.2px,rgb(5,65,140) 1309.1px,rgb(5,65,140) 1366.0px)"></div>
<div style="position:absolute;left:0;top:282px;width:1366px;height:6px;background:linear-gradient(90deg,rgb(2,26,56) 0.0px,rgb(2,26,56) 56.9px,rgb(2,29,63) 113.8px,rgb(2,32,70) 170.8px,rgb(2,37,80) 227.7px,rgb(3,42,90) 284.6px,rgb(4,44,95) 341.5px,rgb(4,47,100) 398.4px,rgb(4,49,105) 455.3px,rgb(4,51,110) 512.2px,rgb(4,51,110) 569.2px,rgb(4,51,110) 626.1px,rgb(4,54,115) 683.0px,rgb(4,56,120) 739.9px,rgb(4,56,120) 796.8px,rgb(4,56,120) 853.8px,rgb(4,58,125) 910.7px,rgb(5,61,130) 967.6px,rgb(5,61,131) 1024.5px,rgb(5,62,131) 1081.4px,rgb(5,64,136) 1138.3px,rgb(5,66,140) 1195.2px,rgb(5,66,140) 1252.2px,rgb(5,66,140) 1309.1px,rgb(5,66,140) 1366.0px)"></div>
<div style="position:absolute;left:0;top:288px;width:1366px;height:6px;background:linear-gradient(90deg,rgb(2,26,56) 0.0px,rgb(2,26,56) 56.9px,rgb(2,29,63) 113.8px,rgb(2,32,70) 170.8px,rgb(2,37,80) 227.7px,rgb(3,42,90) 284.6px,rgb(4,44,95) 341.5px,rgb(4,47,100) 398.4px,rgb(4,49,105) 455.3px,rgb(4,51,110) 512.2px,rgb(4,51,110) 569.2px,rgb(4,51,110) 626.1px,rgb(4,54,115) 683.0px,rgb(4,56,120) 739.9px,rgb(4,56,120) 796.8px,rgb(4,56,120) 853.8px,rgb(4,58,125) 910.7px,rgb(5,61,130) 967.6px,rgb(5,61,131) 1024.5px,rgb(5,62,132) 1081.4px,rgb(5,64,136) 1138.3px,rgb(5,66,140) 1195.2px,rgb(5,66,140) 1252.2px,rgb(5,66,140) 1309.1px,rgb(5,66,140) 1366.0px)"></div>
<div style="position:absolute;left:0;top:294px;width:1366px;height:6px;background:linear-gradient(90deg,rgb(2,26,56) 0.0px,rgb(2,26,56) 56.9px,rgb(2,29,63) 113.8px,rgb(2,32,70) 170.8px,rgb(2,37,80) 227.7px,rgb(3,42,90) 284.6px,rgb(4,44,95) 341.5px,rgb(4,47,100) 398.4px,rgb(4,49,105) 455.3px,rgb(4,51,110) 512.2px,rgb(4,51,110) 569.2px,rgb(4,51,110) 626.1px,rgb(4,54,115) 683.0px,rgb(4,56,120) 739.9px,rgb(4,56,120) 796.8px,rgb(4,56,120) 853.8px,rgb(4,59,125) 910.7px,rgb(5,61,130) 967.6px,rgb(5,62,131) 1024.5px,rgb(5,62,133) 1081.4px,rgb(5,64,137) 1138.3px,rgb(5,66,141) 1195.2px,rgb(5,66,141) 1252.2px,rgb(5,66,141) 1309.1px,rgb(5,66,141) 1366.0px)"></div>
<div style="position:absolute;left:0;top:300px;width:1366px;height:6px;background:linear-gradient(90deg,rgb(2,26,56) 0.0px,rgb(2,26,56) 56.9px,rgb(2,29,63) 113.8px,rgb(2,32,70) 170.8px,rgb(2,37,80) 227.7px,rgb(3,42,90) 284.6px,rgb(4,44,95) 341.5px,rgb(4,47,100) 398.4px,rgb(4,49,105) 455.3px,rgb(4,51,110) 512.2px,rgb(4,51,110) 569.2px,rgb(4,51,110) 626.1px,rgb(4,54,115) 683.0px,rgb(4,56,120) 739.9px,rgb(4,56,120) 796.8px,rgb(4,56,120) 853.8px,rgb(4,58,125) 910.7px,rgb(5,61,130) 967.6px,rgb(5,62,132) 1024.5px,rgb(5,62,134) 1081.4px,rgb(5,64,137) 1138.3px,rgb(5,66,141) 1195.2px,rgb(5,66,141) 1252.2px,rgb(5,66,141) 1309.1px,rgb(5,66,141) 1366.0px)"></div>
<div style="position:absolute;left:0;top:306px;width:1366px;height:6px;background:linear-gradient(90deg,rgb(2,26,56) 0.0px,rgb(2,26,56) 56.9px,rgb(2,29,63) 113.8px,rgb(2,32,70) 170.8px,rgb(2,37,80) 227.7px,rgb(3,42,90) 284.6px,rgb(4,44,95) 341.5px,rgb(4,47,100) 398.4px,rgb(4,49,105) 455.3px,rgb(4,51,110) 512.2px,rgb(4,51,110) 569.2px,rgb(4,51,110) 626.1px,rgb(4,54,115) 683.0px,rgb(4,56,120) 739.9px,rgb(4,56,120) 796.8px,rgb(4,56,120) 853.8px,rgb(4,58,125) 910.7px,rgb(5,61,130) 967.6px,rgb(5,62,132) 1024.5px,rgb(5,63,135) 1081.4px,rgb(5,65,138) 1138.3px,rgb(5,67,141) 1195.2px,rgb(5,67,141) 1252.2px,rgb(5,67,141) 1309.1px,rgb(5,67,141) 1366.0px)"></div>
<div style="position:absolute;left:0;top:312px;width:1366px;height:6px;background:linear-gradient(90deg,rgb(2,26,56) 0.0px,rgb(2,26,56) 56.9px,rgb(2,29,63) 113.8px,rgb(2,32,70) 170.8px,rgb(2,37,80) 227.7px,rgb(3,42,90) 284.6px,rgb(4,44,95) 341.5px,rgb(4,47,100) 398.4px,rgb(4,49,105) 455.3px,rgb(4,51,110) 512.2px,rgb(4,51,110) 569.2px,rgb(4,51,110) 626.1px,rgb(4,54,115) 683.0px,rgb(4,56,120) 739.9px,rgb(4,56,120) 796.8px,rgb(4,56,120) 853.8px,rgb(4,58,125) 910.7px,rgb(5,61,130) 967.6px,rgb(5,62,133) 1024.5px,rgb(5,63,135) 1081.4px,rgb(5,65,138) 1138.3px,rgb(5,67,141) 1195.2px,rgb(5,67,141) 1252.2px,rgb(5,67,141) 1309.1px,rgb(5,67,141) 1366.0px)"></div>
<div style="position:absolute;left:0;top:318px;width:1366px;height:6px;background:linear-gradient(90deg,rgb(2,26,56) 0.0px,rgb(2,26,56) 56.9px,rgb(2,29,63) 113.8px,rgb(2,32,70) 170.8px,rgb(2,37,80) 227.7px,rgb(3,42,90) 284.6px,rgb(4,44,95) 341.5px,rgb(4,47,100) 398.4px,rgb(4,49,105) 455.3px,rgb(4,51,110) 512.2px,rgb(4,51,110) 569.2px,rgb(4,51,110) 626.1px,rgb(4,54,115) 683.0px,rgb(4,56,120) 739.9px,rgb(4,56,120) 796.8px,rgb(4,56,120) 853.8px,rgb(4,58,125) 910.7px,rgb(5,61,130) 967.6px,rgb(5,62,133) 1024.5px,rgb(5,64,136) 1081.4px,rgb(5,66,139) 1138.3px,rgb(5,68,141) 1195.2px,rgb(5,68,141) 1252.2px,rgb(5,68,141) 1309.1px,rgb(5,68,141) 1366.0px)"></div>
<div style="position:absolute;left:0;top:324px;width:1366px;height:6px;background:linear-gradient(90deg,rgb(2,26,56) 0.0px,rgb(2,26,56) 56.9px,rgb(2,29,63) 113.8px,rgb(2,32,70) 170.8px,rgb(2,37,80) 227.7px,rgb(3,42,90) 284.6px,rgb(4,44,95) 341.5px,rgb(4,47,100) 398.4px,rgb(4,49,105) 455.3px,rgb(4,51,110) 512.2px,rgb(4,51,110) 569.2px,rgb(4,51,110) 626.1px,rgb(4,54,115) 683.0px,rgb(4,56,120) 739.9px,rgb(4,56,120) 796.8px,rgb(4,56,120) 853.8px,rgb(4,58,125) 910.7px,rgb(5,61,130) 967.6px,rgb(5,62,134) 1024.5px,rgb(5,64,137) 1081.4px,rgb(5,66,139) 1138.3px,rgb(5,68,141) 1195.2px,rgb(5,68,141) 1252.2px,rgb(5,68,141) 1309.1px,rgb(5,68,141) 1366.0px)"></div>
<div style="position:absolute;left:0;top:330px;width:1366px;height:6px;background:linear-gradient(90deg,rgb(2,26,56) 0.0px,rgb(2,26,56) 56.9px,rgb(2,29,63) 113.8px,rgb(2,32,70) 170.8px,rgb(2,37,80) 227.7px,rgb(3,42,90) 284.6px,rgb(4,44,95) 341.5px,rgb(4,47,100) 398.4px,rgb(4,49,105) 455.3px,rgb(4,51,110) 512.2px,rgb(4,51,110) 569.2px,rgb(4,51,110) 626.1px,rgb(4,54,115) 683.0px,rgb(4,56,120) 739.9px,rgb(4,56,120) 796.8px,rgb(4,56,120) 853.8px,rgb(4,58,125) 910.7px,rgb(5,61,130) 967.6px,rgb(5,63,134) 1024.5px,rgb(5,64,138) 1081.4px,rgb(5,66,140) 1138.3px,rgb(5,68,142) 1195.2px,rgb(5,68,142) 1252.2px,rgb(5,68,142) 1309.1px,rgb(5,68,142) 1366.0px)"></div>
<div style="position:absolute;left:0;top:336px;width:1366px;height:6px;background:linear-gradient(90deg,rgb(2,26,56) 0.0px,rgb(2,26,56) 56.9px,rgb(2,29,63) 113.8px,rgb(2,32,70) 170.8px,rgb(2,37,80) 227.7px,rgb(3,42,90) 284.6px,rgb(4,44,95) 341.5px,rgb(4,47,100) 398.4px,rgb(4,49,105) 455.3px,rgb(4,51,110) 512.2px,rgb(4,51,110) 569.2px,rgb(4,51,110) 626.1px,rgb(4,54,115) 683.0px,rgb(4,56,120) 739.9px,rgb(4,56,120) 796.8px,rgb(4,56,120) 853.8px,rgb(4,58,125) 910.7px,rgb(5,61,130) 967.6px,rgb(5,63,134) 1024.5px,rgb(5,64,139) 1081.4px,rgb(5,66,140) 1138.3px,rgb(5,68,142) 1195.2px,rgb(5,68,142) 1252.2px,rgb(5,68,142) 1309.1px,rgb(5,68,142) 1366.0px)"></div>
<div style="position:absolute;left:0;top:342px;width:1366px;height:6px;background:linear-gradient(90deg,rgb(2,26,56) 0.0px,rgb(2,26,56) 56.9px,rgb(2,29,63) 113.8px,rgb(2,32,70) 170.8px,rgb(2,37,80) 227.7px,rgb(3,42,90) 284.6px,rgb(4,44,95) 341.5px,rgb(4,47,100) 398.4px,rgb(4,49,105) 455.3px,rgb(4,51,110) 512.2px,rgb(4,51,110) 569.2px,rgb(4,51,110) 626.1px,rgb(4,54,115) 683.0px,rgb(4,56,120) 739.9px,rgb(4,56,120) 796.8px,rgb(4,56,120) 853.8px,rgb(4,58,125) 910.7px,rgb(5,61,130) 967.6px,rgb(5,63,135) 1024.5px,rgb(5,65,139) 1081.4px,rgb(5,67,140) 1138.3px,rgb(5,69,142) 1195.2px,rgb(5,69,142) 1252.2px,rgb(5,69,142) 1309.1px,rgb(5,69,142) 1366.0px)"></div>
<div style="position:absolute;left:0;top:348px;width:1366px;height:6px;background:linear-gradient(90deg,rgb(2,26,56) 0.0px,rgb(2,26,56) 56.9px,rgb(2,29,63) 113.8px,rgb(2,32,70) 170.8px,rgb(2,37,80) 227.7px,rgb(3,42,90) 284.6px,rgb(4,44,95) 341.5px,rgb(4,47,100) 398.4px,rgb(4,49,105) 455.3px,rgb(4,51,110) 512.2px,rgb(4,51,110) 569.2px,rgb(4,51,110) 626.1px,rgb(4,54,115) 683.0px,rgb(4,56,120) 739.9px,rgb(4,56,120) 796.8px,rgb(4,56,120) 853.8px,rgb(4,58,125) 910.7px,rgb(5,61,130) 967.6px,rgb(5,63,135) 1024.5px,rgb(5,65,140) 1081.4px,rgb(5,67,141) 1138.3px,rgb(5,69,142) 1195.2px,rgb(5,69,142) 1252.2px,rgb(5,69,142) 1309.1px,rgb(5,69,142) 1366.0px)"></div>
<div style="position:absolute;left:0;top:354px;width:1366px;height:6px;background:linear-gradient(90deg,rgb(2,26,56) 0.0px,rgb(2,26,56) 56.9px,rgb(2,29,63) 113.8px,rgb(2,32,70) 170.8px,rgb(2,37,80) 227.7px,rgb(3,42,90) 284.6px,rgb(4,44,95) 341.5px,rgb(4,47,100) 398.4px,rgb(4,49,105) 455.3px,rgb(4,51,110) 512.2px,rgb(4,51,110) 569.2px,rgb(4,51,110) 626.1px,rgb(4,54,115) 683.0px,rgb(4,56,120) 739.9px,rgb(4,56,120) 796.8px,rgb(4,56,120) 853.8px,rgb(4,58,125) 910.7px,rgb(5,61,130) 967.6px,rgb(5,63,135) 1024.5px,rgb(5,65,140) 1081.4px,rgb(5,67,141) 1138.3px,rgb(5,69,142) 1195.2px,rgb(5,69,142) 1252.2px,rgb(5,69,142) 1309.1px,rgb(5,69,142) 1366.0px)"></div>
<div style="position:absolute;left:0;top:360px;width:1366px;height:6px;background:linear-gradient(90deg,rgb(2,26,56) 0.0px,rgb(2,26,56) 56.9px,rgb(2,29,63) 113.8px,rgb(2,32,70) 170.8px,rgb(2,37,80) 227.7px,rgb(3,42,90) 284.6px,rgb(4,44,95) 341.5px,rgb(4,47,100) 398.4px,rgb(4,49,105) 455.3px,rgb(4,51,110) 512.2px,rgb(4,51,110) 569.2px,rgb(4,51,110) 626.1px,rgb(4,54,115) 683.0px,rgb(4,56,120) 739.9px,rgb(4,56,120) 796.8px,rgb(4,56,120) 853.8px,rgb(4,58,125) 910.7px,rgb(5,61,130) 967.6px,rgb(5,63,135) 1024.5px,rgb(5,65,140) 1081.4px,rgb(5,67,141) 1138.3px,rgb(5,69,142) 1195.2px,rgb(5,69,142) 1252.2px,rgb(5,69,142) 1309.1px,rgb(5,69,142) 1366.0px)"></div>
<div style="position:absolute;left:0;top:366px;width:1366px;height:6px;background:linear-gradient(90deg,rgb(2,26,56) 0.0px,rgb(2,26,56) 56.9px,rgb(2,29,63) 113.8px,rgb(2,32,70) 170.8px,rgb(2,37,80) 227.7px,rgb(3,42,90) 284.6px,rgb(3,44,95) 341.5px,rgb(4,47,100) 398.4px,rgb(4,49,105) 455.3px,rgb(4,51,110) 512.2px,rgb(4,51,110) 569.2px,rgb(4,51,110) 626.1px,rgb(4,54,115) 683.0px,rgb(4,56,120) 739.9px,rgb(4,56,120) 796.8px,rgb(4,56,120) 853.8px,rgb(4,58,125) 910.7px,rgb(5,61,130) 967.6px,rgb(5,63,135) 1024.5px,rgb(5,65,140) 1081.4px,rgb(5,67,141) 1138.3px,rgb(5,69,142) 1195.2px,rgb(5,69,142) 1252.2px,rgb(5,69,142) 1309.1px,rgb(5,69,142) 1366.0px)"></div>
<div style="position:absolute;left:0;top:372px;width:1366px;height:6px;background:linear-gradient(90deg,rgb(2,26,56) 0.0px,rgb(2,26,56) 56.9px,rgb(2,29,63) 113.8px,rgb(2,32,70) 170.8px,rgb(3,37,80) 227.7px,rgb(3,42,90) 284.6px,rgb(3,44,95) 341.5px,rgb(4,47,100) 398.4px,rgb(4,49,105) 455.3px,rgb(4,51,110) 512.2px,rgb(4,51,110) 569.2px,rgb(4,51,110) 626.1px,rgb(4,54,115) 683.0px,rgb(4,56,120) 739.9px,rgb(4,56,120) 796.8px,rgb(4,56,120) 853.8px,rgb(4,58,125) 910.7px,rgb(5,61,130) 967.6px,rgb(5,63,135) 1024.5px,rgb(5,65,140) 1081.4px,rgb(5,67,141) 1138.3px,rgb(5,69,142) 1195.2px,rgb(5,69,142) 1252.2px,rgb(5,69,142) 1309.1px,rgb(5,69,142) 1366.0px)"></div>
<div style="position:absolute;left:0;top:378px;width:1366px;height:6px;background:linear-gradient(90deg,rgb(2,25,55) 0.0px,rgb(2,25,55) 56.9px,rgb(2,29,62) 113.8px,rgb(2,32,69) 170.8px,rgb(2,37,79) 227.7px,rgb(3,42,89) 284.6px,rgb(3,44,94) 341.5px,rgb(4,47,99) 398.4px,rgb(4,49,104) 455.3px,rgb(4,51,109) 512.2px,rgb(4,51,110) 569.2px,rgb(4,51,110) 626.1px,rgb(4,54,115) 683.0px,rgb(4,56,120) 739.9px,rgb(4,56,120) 796.8px,rgb(4,56,120) 853.8px,rgb(4,58,125) 910.7px,rgb(5,61,130) 967.6px,rgb(5,63,135) 1024.5px,rgb(5,65,140) 1081.4px,rgb(5,67,141) 1138.3px,rgb(5,69,142) 1195.2px,rgb(5,69,142) 1252.2px,rgb(5,69,142) 1309.1px,rgb(5,69,142) 1366.0px)"></div>
<div style="position:absolute;left:0;top:384px;width:1366px;height:6px;background:linear-gradient(90deg,rgb(2,25,54) 0.0px,rgb(2,25,54) 56.9px,rgb(2,28,61) 113.8px,rgb(2,31,69) 170.8px,rgb(2,36,79) 227.7px,rgb(3,41,89) 284.6px,rgb(3,44,94) 341.5px,rgb(4,46,99) 398.4px,rgb(4,48,104) 455.3px,rgb(4,50,109) 512.2px,rgb(4,51,109) 569.2px,rgb(4,51,110) 626.1px,rgb(4,54,115) 683.0px,rgb(4,56,120) 739.9px,rgb(4,56,120) 796.8px,rgb(4,56,120) 853.8px,rgb(4,58,125) 910.7px,rgb(5,61,130) 967.6px,rgb(5,63,135) 1024.5px,rgb(5,65,140) 1081.4px,rgb(5,67,141) 1138.3px,rgb(5,69,142) 1195.2px,rgb(5,69,142) 1252.2px,rgb(5,69,142) 1309.1px,rgb(5,69,142) 1366.0px)"></div>
<div style="position:absolute;left:0;top:390px;width:1366px;height:6px;background:linear-gradient(90deg,rgb(2,24,53) 0.0px,rgb(2,24,53) 56.9px,rgb(2,28,61) 113.8px,rgb(2,31,68) 170.8px,rgb(2,36,78) 227.7px,rgb(3,41,88) 284.6px,rgb(3,44,93) 341.5px,rgb(4,46,98) 398.4px,rgb(4,48,103) 455.3px,rgb(4,50,108) 512.2px,rgb(4,51,109) 569.2px,rgb(4,51,110) 626.1px,rgb(4,53,115) 683.0px,rgb(4,56,120) 739.9px,rgb(4,56,120) 796.8px,rgb(4,56,120) 853.8px,rgb(4,58,125) 910.7px,rgb(5,61,130) 967.6px,rgb(5,63,135) 1024.5px,rgb(5,65,140) 1081.4px,rgb(5,67,141) 1138.3px,rgb(5,69,142) 1195.2px,rgb(5,69,142) 1252.2px,rgb(5,69,142) 1309.1px,rgb(5,69,142) 1366.0px)"></div>
<div style="position:absolute;left:0;top:396px;width:1366px;height:6px;background:linear-gradient(90deg,rgb(2,24,52) 0.0px,rgb(2,24,52) 56.9px,rgb(2,27,60) 113.8px,rgb(2,31,67) 170.8px,rgb(2,36,77) 227.7px,rgb(3,41,87) 284.6px,rgb(3,43,92) 341.5px,rgb(4,46,97) 398.4px,rgb(4,48,102) 455.3px,rgb(4,50,107) 512.2px,rgb(4,50,109) 569.2px,rgb(4,51,110) 626.1px,rgb(4,54,115) 683.0px,rgb(4,56,120) 739.9px,rgb(4,56,120) 796.8px,rgb(4,56,120) 853.8px,rgb(4,58,125) 910.7px,rgb(5,61,130) 967.6px,rgb(5,63,135) 1024.5px,rgb(5,65,140) 1081.4px,rgb(5,67,141) 1138.3px,rgb(5,69,142) 1195.2px,rgb(5,69,142) 1252.2px,rgb(5,69,142) 1309.1px,rgb(5,69,142) 1366.0px)"></div>
<div style="position:absolute;left:0;top:402px;width:1366px;height:6px;background:linear-gradient(90deg,rgb(2,23,51) 0.0px,rgb(2,23,51) 56.9px,rgb(2,27,59) 113.8px,rgb(2,31,67) 170.8px,rgb(2,35,77) 227.7px,rgb(3,40,87) 284.6px,rgb(3,43,92) 341.5px,rgb(4,45,97) 398.4px,rgb(4,47,102) 455.3px,rgb(4,50,107) 512.2px,rgb(4,50,108) 569.2px,rgb(4,51,110) 626.1px,rgb(4,54,115) 683.0px,rgb(4,56,120) 739.9px,rgb(4,56,120) 796.8px,rgb(4,56,120) 853.8px,rgb(4,58,125) 910.7px,rgb(5,61,130) 967.6px,rgb(5,63,135) 1024.5px,rgb(5,65,140) 1081.4px,rgb(5,67,141) 1138.3px,rgb(5,69,142) 1195.2px,rgb(5,69,142) 1252.2px,rgb(5,69,142) 1309.1px,rgb(5,69,142) 1366.0px)"></div>
<div style="position:absolute;left:0;top:408px;width:1366px;height:6px;background:linear-gradient(90deg,rgb(2,23,49) 0.0px,rgb(2,23,49) 56.9px,rgb(2,26,57) 113.8px,rgb(2,30,66) 170.8px,rgb(2,35,76) 227.7px,rgb(3,40,86) 284.6px,rgb(3,42,91) 341.5px,rgb(4,45,96) 398.4px,rgb(4,47,101) 455.3px,rgb(4,49,106) 512.2px,rgb(4,50,108) 569.2px,rgb(4,51,110) 626.1px,rgb(4,54,115) 683.0px,rgb(4,56,120) 739.9px,rgb(4,56,120) 796.8px,rgb(4,56,120) 853.8px,rgb(4,58,125) 910.7px,rgb(5,61,130) 967.6px,rgb(5,63,135) 1024.5px,rgb(5,65,140) 1081.4px,rgb(5,67,141) 1138.3px,rgb(5,69,142) 1195.2px,rgb(5,69,142) 1252.2px,rgb(5,69,142) 1309.1px,rgb(5,69,142) 1366.0px)"></div>
<div style="position:absolute;left:0;top:414px;width:1366px;height:6px;background:linear-gradient(90deg,rgb(1,22,48) 0.0px,rgb(1,22,48) 56.9px,rgb(2,26,56) 113.8px,rgb(2,30,65) 170.8px,rgb(2,35,75) 227.7px,rgb(3,39,85) 284.6px,rgb(3,42,90) 341.5px,rgb(3,44,95) 398.4px,rgb(4,47,100) 455.3px,rgb(4,49,105) 512.2px,rgb(4,50,107) 569.2px,rgb(4,51,110) 626.1px,rgb(4,54,115) 683.0px,rgb(4,56,120) 739.9px,rgb(4,56,120) 796.8px,rgb(4,56,120) 853.8px,rgb(4,58,125) 910.7px,rgb(5,61,130) 967.6px,rgb(5,63,135) 1024.5px,rgb(5,65,140) 1081.4px,rgb(5,67,141) 1138.3px,rgb(5,69,142) 1195.2px,rgb(5,69,142) 1252.2px,rgb(5,69,142) 1309.1px,rgb(5,69,142) 1366.0px)"></div>
<div style="position:absolute;left:0;top:420px;width:1366px;height:6px;background:linear-gradient(90deg,rgb(1,21,46) 0.0px,rgb(1,21,46) 56.9px,rgb(2,25,55) 113.8px,rgb(2,30,64) 170.8px,rgb(2,34,74) 227.7px,rgb(3,39,84) 284.6px,rgb(3,41,89) 341.5px,rgb(3,44,94) 398.4px,rgb(4,46,99) 455.3px,rgb(4,49,104) 512.2px,rgb(4,50,107) 569.2px,rgb(4,51,110) 626.1px,rgb(4,54,115) 683.0px,rgb(4,56,120) 739.9px,rgb(4,56,120) 796.8px,rgb(4,56,120) 853.8px,rgb(4,58,125) 910.7px,rgb(5,61,130) 967.6px,rgb(5,63,135) 1024.5px,rgb(5,65,140) 1081.4px,rgb(5,67,141) 1138.3px,rgb(5,69,142) 1195.2px,rgb(5,69,142) 1252.2px,rgb(5,69,142) 1309.1px,rgb(5,69,142) 1366.0px)"></div>
<div style="position:absolute;left:0;top:426px;width:1366px;height:6px;background:linear-gradient(90deg,rgb(1,21,45) 0.0px,rgb(1,21,45) 56.9px,rgb(2,25,54) 113.8px,rgb(2,29,63) 170.8px,rgb(2,34,73) 227.7px,rgb(3,39,83) 284.6px,rgb(3,41,88) 341.5px,rgb(3,44,93) 398.4px,rgb(4,46,98) 455.3px,rgb(4,48,103) 512.2px,rgb(4,50,107) 569.2px,rgb(4,51,110) 626.1px,rgb(4,54,115) 683.0px,rgb(4,56,120) 739.9px,rgb(4,56,120) 796.8px,rgb(4,56,120) 853.8px,rgb(4,58,125) 910.7px,rgb(5,61,130) 967.6px,rgb(5,63,135) 1024.5px,rgb(5,65,140) 1081.4px,rgb(5,67,141) 1138.3px,rgb(5,69,142) 1195.2px,rgb(5,69,142) 1252.2px,rgb(5,69,142) 1309.1px,rgb(5,69,142) 1366.0px)"></div>
<div style="position:absolute;left:0;top:432px;width:1366px;height:6px;background:linear-gradient(90deg,rgb(1,20,44) 0.0px,rgb(1,20,44) 56.9px,rgb(2,24,53) 113.8px,rgb(2,29,62) 170.8px,rgb(2,34,72) 227.7px,rgb(3,38,82) 284.6px,rgb(3,41,87) 341.5px,rgb(3,43,92) 398.4px,rgb(4,46,97) 455.3px,rgb(4,48,102) 512.2px,rgb(4,49,106) 569.2px,rgb(4,51,110) 626.1px,rgb(4,54,115) 683.0px,rgb(4,56,120) 739.9px,rgb(4,56,120) 796.8px,rgb(4,56,120) 853.8px,rgb(4,58,125) 910.7px,rgb(5,61,130) 967.6px,rgb(5,63,135) 1024.5px,rgb(5,65,140) 1081.4px,rgb(5,67,141) 1138.3px,rgb(5,69,142) 1195.2px,rgb(5,69,142) 1252.2px,rgb(5,69,142) 1309.1px,rgb(5,69,142) 1366.0px)"></div>
<div style="position:absolute;left:0;top:438px;width:1366px;height:6px;background:linear-gradient(90deg,rgb(1,19,43) 0.0px,rgb(1,19,43) 56.9px,rgb(2,24,52) 113.8px,rgb(2,29,62) 170.8px,rgb(2,33,72) 227.7px,rgb(3,38,82) 284.6px,rgb(3,40,87) 341.5px,rgb(3,43,92) 398.4px,rgb(4,45,97) 455.3px,rgb(4,48,102) 512.2px,rgb(4,49,106) 569.2px,rgb(4,51,110) 626.1px,rgb(4,54,115) 683.0px,rgb(4,56,120) 739.9px,rgb(4,56,120) 796.8px,rgb(4,56,120) 853.8px,rgb(4,58,125) 910.7px,rgb(5,61,130) 967.6px,rgb(5,63,135) 1024.5px,rgb(5,65,140) 1081.4px,rgb(5,67,141) 1138.3px,rgb(5,69,142) 1195.2px,rgb(5,69,142) 1252.2px,rgb(5,69,142) 1309.1px,rgb(5,69,142) 1366.0px)"></div>
<div style="position:absolute;left:0;top:444px;width:1366px;height:6px;background:linear-gradient(90deg,rgb(1,19,42) 0.0px,rgb(1,19,42) 56.9px,rgb(2,24,51) 113.8px,rgb(2,28,61) 170.8px,rgb(2,33,71) 227.7px,rgb(3,38,81) 284.6px,rgb(3,40,86) 341.5px,rgb(3,43,91) 398.4px,rgb(4,45,96) 455.3px,rgb(4,47,101) 512.2px,rgb(4,49,106) 569.2px,rgb(4,51,110) 626.1px,rgb(4,54,115) 683.0px,rgb(4,56,120) 739.9px,rgb(4,56,120) 796.8px,rgb(4,56,120) 853.8px,rgb(4,58,125) 910.7px,rgb(5,61,130) 967.6px,rgb(5,63,135) 1024.5px,rgb(5,65,140) 1081.4px,rgb(5,67,141) 1138.3px,rgb(5,69,142) 1195.2px,rgb(5,69,142) 1252.2px,rgb(5,69,142) 1309.1px,rgb(5,69,142) 1366.0px)"></div>
<div style="position:absolute;left:0;top:450px;width:1366px;height:6px;background:linear-gradient(90deg,rgb(1,18,41) 0.0px,rgb(1,18,41) 56.9px,rgb(2,23,51) 113.8px,rgb(2,28,61) 170.8px,rgb(2,33,71) 227.7px,rgb(3,37,81) 284.6px,rgb(3,40,86) 341.5px,rgb(3,42,91) 398.4px,rgb(4,45,96) 455.3px,rgb(4,47,101) 512.2px,rgb(4,49,105) 569.2px,rgb(4,51,110) 626.1px,rgb(4,54,115) 683.0px,rgb(4,56,120) 739.9px,rgb(4,56,120) 796.8px,rgb(4,56,120) 853.8px,rgb(4,58,125) 910.7px,rgb(5,61,130) 967.6px,rgb(5,63,135) 1024.5px,rgb(5,65,140) 1081.4px,rgb(5,67,141) 1138.3px,rgb(5,69,142) 1195.2px,rgb(5,69,142) 1252.2px,rgb(5,69,142) 1309.1px,rgb(5,69,142) 1366.0px)"></div>
<div style="position:absolute;left:0;top:456px;width:1366px;height:6px;background:linear-gradient(90deg,rgb(1,18,40) 0.0px,rgb(1,18,40) 56.9px,rgb(2,23,50) 113.8px,rgb(2,28,60) 170.8px,rgb(2,33,70) 227.7px,rgb(3,37,80) 284.6px,rgb(3,40,85) 341.5px,rgb(3,42,90) 398.4px,rgb(4,45,95) 455.3px,rgb(4,47,100) 512.2px,rgb(4,49,105) 569.2px,rgb(4,51,110) 626.1px,rgb(4,54,115) 683.0px,rgb(4,56,120) 739.9px,rgb(4,56,120) 796.8px,rgb(4,56,120) 853.8px,rgb(4,58,125) 910.7px,rgb(5,61,130) 967.6px,rgb(5,63,135) 1024.5px,rgb(5,65,140) 1081.4px,rgb(5,67,141) 1138.3px,rgb(5,69,142) 1195.2px,rgb(5,69,142) 1252.2px,rgb(5,69,142) 1309.1px,rgb(5,69,142) 1366.0px)"></div>
<div style="position:absolute;left:0;top:462px;width:1366px;height:6px;background:linear-gradient(90deg,rgb(1,18,40) 0.0px,rgb(1,18,40) 56.9px,rgb(2,23,50) 113.8px,rgb(2,28,60) 170.8px,rgb(2,33,70) 227.7px,rgb(3,37,80) 284.6px,rgb(3,40,85) 341.5px,rgb(3,42,90) 398.4px,rgb(4,45,95) 455.3px,rgb(4,47,100) 512.2px,rgb(4,49,105) 569.2px,rgb(4,51,110) 626.1px,rgb(4,54,115) 683.0px,rgb(4,56,120) 739.9px,rgb(4,56,120) 796.8px,rgb(4,56,120) 853.8px,rgb(4,58,125) 910.7px,rgb(5,61,130) 967.6px,rgb(5,63,135) 1024.5px,rgb(5,65,140) 1081.4px,rgb(5,67,141) 1138.3px,rgb(5,69,142) 1195.2px,rgb(5,69,142) 1252.2px,rgb(5,69,142) 1309.1px,rgb(5,69,142) 1366.0px)"></div>
<div style="position:absolute;left:0;top:468px;width:1366px;height:6px;background:linear-gradient(90deg,rgb(1,18,40) 0.0px,rgb(1,18,40) 56.9px,rgb(2,23,50) 113.8px,rgb(2,28,60) 170.8px,rgb(2,32,70) 227.7px,rgb(3,37,80) 284.6px,rgb(3,39,85) 341.5px,rgb(3,42,90) 398.4px,rgb(3,44,95) 455.3px,rgb(4,47,100) 512.2px,rgb(4,49,105) 569.2px,rgb(4,51,110) 626.1px,rgb(4,53,115) 683.0px,rgb(4,56,120) 739.9px,rgb(4,56,120) 796.8px,rgb(4,56,120) 853.8px,rgb(4,58,125) 910.7px,rgb(5,61,130) 967.6px,rgb(5,63,135) 1024.5px,rgb(5,65,140) 1081.4px,rgb(5,67,141) 1138.3px,rgb(5,69,142) 1195.2px,rgb(5,69,142) 1252.2px,rgb(5,69,142) 1309.1px,rgb(5,69,142) 1366.0px)"></div>
<div style="position:absolute;left:0;top:474px;width:1366px;height:6px;background:linear-gradient(90deg,rgb(1,18,40) 0.0px,rgb(1,18,40) 56.9px,rgb(2,23,50) 113.8px,rgb(2,28,60) 170.8px,rgb(2,32,70) 227.7px,rgb(3,37,80) 284.6px,rgb(3,39,85) 341.5px,rgb(3,42,90) 398.4px,rgb(3,44,95) 455.3px,rgb(4,47,100) 512.2px,rgb(4,49,105) 569.2px,rgb(4,51,110) 626.1px,rgb(4,53,115) 683.0px,rgb(4,56,120) 739.9px,rgb(4,56,120) 796.8px,rgb(4,56,120) 853.8px,rgb(4,58,125) 910.7px,rgb(5,61,130) 967.6px,rgb(5,63,135) 1024.5px,rgb(5,65,140) 1081.4px,rgb(5,67,141) 1138.3px,rgb(5,69,142) 1195.2px,rgb(5,69,142) 1252.2px,rgb(5,69,141) 1309.1px,rgb(5,69,141) 1366.0px)"></div>
<div style="position:absolute;left:0;top:480px;width:1366px;height:6px;background:linear-gradient(90deg,rgb(1,18,40) 0.0px,rgb(1,18,40) 56.9px,rgb(2,23,50) 113.8px,rgb(2,28,60) 170.8px,rgb(2,32,70) 227.7px,rgb(3,37,79) 284.6px,rgb(3,39,84) 341.5px,rgb(3,41,89) 398.4px,rgb(3,44,94) 455.3px,rgb(4,46,99) 512.2px,rgb(4,48,104) 569.2px,rgb(4,50,109) 626.1px,rgb(4,53,114) 683.0px,rgb(4,55,119) 739.9px,rgb(4,56,119) 796.8px,rgb(4,56,119) 853.8px,rgb(4,58,124) 910.7px,rgb(5,61,129) 967.6px,rgb(5,63,134) 1024.5px,rgb(5,65,139) 1081.4px,rgb(5,67,140) 1138.3px,rgb(5,69,141) 1195.2px,rgb(5,68,141) 1252.2px,rgb(5,68,140) 1309.1px,rgb(5,68,140) 1366.0px)"></div>
<div style="position:absolute;left:0;top:486px;width:1366px;height:6px;background:linear-gradient(90deg,rgb(1,18,40) 0.0px,rgb(1,18,40) 56.9px,rgb(2,23,50) 113.8px,rgb(2,28,60) 170.8px,rgb(2,32,69) 227.7px,rgb(3,36,79) 284.6px,rgb(3,39,83) 341.5px,rgb(3,41,88) 398.4px,rgb(3,43,93) 455.3px,rgb(4,46,98) 512.2px,rgb(4,48,103) 569.2px,rgb(4,50,108) 626.1px,rgb(4,53,113) 683.0px,rgb(4,55,118) 739.9px,rgb(4,55,118) 796.8px,rgb(4,55,119) 853.8px,rgb(4,58,124) 910.7px,rgb(5,60,129) 967.6px,rgb(5,63,134) 1024.5px,rgb(5,65,139) 1081.4px,rgb(5,66,140) 1138.3px,rgb(5,68,141) 1195.2px,rgb(5,68,140) 1252.2px,rgb(5,67,139) 1309.1px,rgb(5,67,139) 1366.0px)"></div>
<div style="position:absolute;left:0;top:492px;width:1366px;height:6px;background:linear-gradient(90deg,rgb(1,18,40) 0.0px,rgb(1,18,40) 56.9px,rgb(2,23,50) 113.8px,rgb(2,28,60) 170.8px,rgb(2,32,69) 227.7px,rgb(3,36,78) 284.6px,rgb(3,38,82) 341.5px,rgb(3,40,87) 398.4px,rgb(3,43,92) 455.3px,rgb(4,45,97) 512.2px,rgb(4,47,102) 569.2px,rgb(4,49,107) 626.1px,rgb(4,52,112) 683.0px,rgb(4,54,117) 739.9px,rgb(4,55,117) 796.8px,rgb(4,55,118) 853.8px,rgb(4,58,123) 910.7px,rgb(5,60,128) 967.6px,rgb(5,62,133) 1024.5px,rgb(5,64,138) 1081.4px,rgb(5,66,139) 1138.3px,rgb(5,68,140) 1195.2px,rgb(5,67,138) 1252.2px,rgb(5,66,137) 1309.1px,rgb(5,66,137) 1366.0px)"></div>
<div style="position:absolute;left:0;top:498px;width:1366px;height:6px;background:linear-gradient(90deg,rgb(1,18,40) 0.0px,rgb(1,18,40) 56.9px,rgb(2,23,50) 113.8px,rgb(2,28,60) 170.8px,rgb(2,32,69) 227.7px,rgb(3,36,78) 284.6px,rgb(3,38,81) 341.5px,rgb(3,40,85) 398.4px,rgb(3,42,90) 455.3px,rgb(4,45,95) 512.2px,rgb(4,47,100) 569.2px,rgb(4,49,105) 626.1px,rgb(4,51,110) 683.0px,rgb(4,54,115) 739.9px,rgb(4,54,116) 796.8px,rgb(4,55,118) 853.8px,rgb(4,57,123) 910.7px,rgb(5,60,128) 967.6px,rgb(5,62,133) 1024.5px,rgb(5,64,138) 1081.4px,rgb(5,66,138) 1138.3px,rgb(5,67,139) 1195.2px,rgb(5,66,137) 1252.2px,rgb(5,65,134) 1309.1px,rgb(5,65,134) 1366.0px)"></div>
<div style="position:absolute;left:0;top:504px;width:1366px;height:6px;background:linear-gradient(90deg,rgb(1,18,40) 0.0px,rgb(1,18,40) 56.9px,rgb(2,23,50) 113.8px,rgb(2,28,60) 170.8px,rgb(2,32,68) 227.7px,rgb(3,35,77) 284.6px,rgb(3,37,80) 341.5px,rgb(3,39,84) 398.4px,rgb(3,41,89) 455.3px,rgb(4,44,94) 512.2px,rgb(4,46,99) 569.2px,rgb(4,48,104) 626.1px,rgb(4,51,109) 683.0px,rgb(4,53,114) 739.9px,rgb(4,54,115) 796.8px,rgb(4,54,117) 853.8px,rgb(4,57,122) 910.7px,rgb(5,59,127) 967.6px,rgb(5,62,132) 1024.5px,rgb(5,64,137) 1081.4px,rgb(5,65,138) 1138.3px,rgb(5,66,138) 1195.2px,rgb(5,65,135) 1252.2px,rgb(5,63,132) 1309.1px,rgb(5,63,132) 1366.0px)"></div>
<div style="position:absolute;left:0;top:510px;width:1366px;height:6px;background:linear-gradient(90deg,rgb(1,18,40) 0.0px,rgb(1,18,40) 56.9px,rgb(2,23,50) 113.8px,rgb(2,28,60) 170.8px,rgb(2,32,68) 227.7px,rgb(3,35,76) 284.6px,rgb(3,37,79) 341.5px,rgb(3,38,82) 398.4px,rgb(3,41,87) 455.3px,rgb(4,43,92) 512.2px,rgb(4,45,97) 569.2px,rgb(4,47,102) 626.1px,rgb(4,50,107) 683.0px,rgb(4,52,112) 739.9px,rgb(4,53,114) 796.8px,rgb(4,54,116) 853.8px,rgb(4,57,121) 910.7px,rgb(5,59,126) 967.6px,rgb(5,61,131) 1024.5px,rgb(5,63,136) 1081.4px,rgb(5,65,137) 1138.3px,rgb(5,66,137) 1195.2px,rgb(5,64,133) 1252.2px,rgb(5,62,129) 1309.1px,rgb(5,62,129) 1366.0px)"></div>
<div style="position:absolute;left:0;top:516px;width:1366px;height:6px;background:linear-gradient(90deg,rgb(1,18,40) 0.0px,rgb(1,18,40) 56.9px,rgb(2,23,50) 113.8px,rgb(2,28,60) 170.8px,rgb(2,31,68) 227.7px,rgb(3,35,75) 284.6px,rgb(3,36,78) 341.5px,rgb(3,37,80) 398.4px,rgb(3,40,85) 455.3px,rgb(4,42,90) 512.2px,rgb(4,44,95) 569.2px,rgb(4,47,100) 626.1px,rgb(4,49,105) 683.0px,rgb(4,52,110) 739.9px,rgb(4,53,113) 796.8px,rgb(4,54,115) 853.8px,rgb(4,56,120) 910.7px,rgb(5,59,125) 967.6px,rgb(5,61,130) 1024.5px,rgb(5,63,135) 1081.4px,rgb(5,64,136) 1138.3px,rgb(5,65,136) 1195.2px,rgb(5,63,131) 1252.2px,rgb(5,60,126) 1309.1px,rgb(5,60,126) 1366.0px)"></div>
<div style="position:absolute;left:0;top:522px;width:1366px;height:6px;background:linear-gradient(90deg,rgb(1,18,40) 0.0px,rgb(1,18,40) 56.9px,rgb(2,23,50) 113.8px,rgb(2,28,60) 170.8px,rgb(2,31,67) 227.7px,rgb(2,34,74) 284.6px,rgb(2,35,76) 341.5px,rgb(2,36,79) 398.4px,rgb(3,39,84) 455.3px,rgb(3,41,89) 512.2px,rgb(3,44,94) 569.2px,rgb(3,46,99) 626.1px,rgb(4,48,104) 683.0px,rgb(4,51,109) 739.9px,rgb(4,52,111) 796.8px,rgb(4,53,114) 853.8px,rgb(4,56,119) 910.7px,rgb(4,58,124) 967.6px,rgb(5,60,129) 1024.5px,rgb(5,63,134) 1081.4px,rgb(5,64,135) 1138.3px,rgb(5,64,135) 1195.2px,rgb(5,62,129) 1252.2px,rgb(4,59,124) 1309.1px,rgb(4,59,124) 1366.0px)"></div>
<div style="position:absolute;left:0;top:528px;width:1366px;height:6px;background:linear-gradient(90deg,rgb(1,18,40) 0.0px,rgb(1,18,40) 56.9px,rgb(2,23,50) 113.8px,rgb(2,28,60) 170.8px,rgb(2,31,67) 227.7px,rgb(2,34,73) 284.6px,rgb(2,35,75) 341.5px,rgb(2,35,77) 398.4px,rgb(3,38,82) 455.3px,rgb(3,40,87) 512.2px,rgb(3,43,92) 569.2px,rgb(3,45,97) 626.1px,rgb(4,48,102) 683.0px,rgb(4,50,107) 739.9px,rgb(4,51,110) 796.8px,rgb(4,53,113) 853.8px,rgb(4,55,118) 910.7px,rgb(4,58,123) 967.6px,rgb(5,60,128) 1024.5px,rgb(5,62,133) 1081.4px,rgb(5,63,134) 1138.3px,rgb(5,64,134) 1195.2px,rgb(5,60,128) 1252.2px,rgb(4,57,121) 1309.1px,rgb(4,57,121) 1366.0px)"></div>
<div style="position:absolute;left:0;top:534px;width:1366px;height:6px;background:linear-gradient(90deg,rgb(1,18,40) 0.0px,rgb(1,18,40) 56.9px,rgb(2,23,50) 113.8px,rgb(2,28,60) 170.8px,rgb(2,31,66) 227.7px,rgb(2,33,73) 284.6px,rgb(2,34,74) 341.5px,rgb(2,35,75) 398.4px,rgb(3,37,80) 455.3px,rgb(3,40,85) 512.2px,rgb(3,42,90) 569.2px,rgb(3,44,95) 626.1px,rgb(4,47,100) 683.0px,rgb(4,49,105) 739.9px,rgb(4,51,109) 796.8px,rgb(4,52,113) 853.8px,rgb(4,55,118) 910.7px,rgb(4,57,123) 967.6px,rgb(5,60,128) 1024.5px,rgb(5,62,133) 1081.4px,rgb(5,63,133) 1138.3px,rgb(5,63,133) 1195.2px,rgb(5,59,126) 1252.2px,rgb(4,56,118) 1309.1px,rgb(4,56,118) 1366.0px)"></div>
<div style="position:absolute;left:0;top:540px;width:1366px;height:6px;background:linear-gradient(90deg,rgb(1,18,40) 0.0px,rgb(1,18,40) 56.9px,rgb(2,23,50) 113.8px,rgb(2,28,60) 170.8px,rgb(2,30,66) 227.7px,rgb(2,33,72) 284.6px,rgb(2,33,73) 341.5px,rgb(2,34,74) 398.4px,rgb(3,36,79) 455.3px,rgb(3,39,84) 512.2px,rgb(3,41,89) 569.2px,rgb(3,44,94) 626.1px,rgb(4,46,99) 683.0px,rgb(4,49,104) 739.9px,rgb(4,50,108) 796.8px,rgb(4,52,112) 853.8px,rgb(4,54,117) 910.7px,rgb(4,57,122) 967.6px,rgb(5,59,127) 1024.5px,rgb(5,62,132) 1081.4px,rgb(5,62,132) 1138.3px,rgb(5,63,132) 1195.2px,rgb(5,58,124) 1252.2px,rgb(4,54,116) 1309.1px,rgb(4,54,116) 1366.0px)"></div>
<div style="position:absolute;left:0;top:546px;width:1366px;height:6px;background:linear-gradient(90deg,rgb(1,18,40) 0.0px,rgb(1,18,40) 56.9px,rgb(2,23,50) 113.8px,rgb(2,28,60) 170.8px,rgb(2,30,66) 227.7px,rgb(2,33,71) 284.6px,rgb(2,33,72) 341.5px,rgb(2,33,73) 398.4px,rgb(3,36,78) 455.3px,rgb(3,38,83) 512.2px,rgb(3,41,88) 569.2px,rgb(3,43,93) 626.1px,rgb(4,46,98) 683.0px,rgb(4,48,103) 739.9px,rgb(4,50,107) 796.8px,rgb(4,52,111) 853.8px,rgb(4,54,116) 910.7px,rgb(4,57,121) 967.6px,rgb(5,59,126) 1024.5px,rgb(5,62,131) 1081.4px,rgb(5,62,131) 1138.3px,rgb(5,62,132) 1195.2px,rgb(5,58,123) 1252.2px,rgb(4,53,114) 1309.1px,rgb(4,53,114) 1366.0px)"></div>
<div style="position:absolute;left:0;top:552px;width:1366px;height:6px;background:linear-gradient(90deg,rgb(1,18,40) 0.0px,rgb(1,18,40) 56.9px,rgb(2,23,50) 113.8px,rgb(2,28,60) 170.8px,rgb(2,30,65) 227.7px,rgb(2,32,71) 284.6px,rgb(2,33,71) 341.5px,rgb(2,33,71) 398.4px,rgb(3,35,76) 455.3px,rgb(3,38,81) 512.2px,rgb(3,40,86) 569.2px,rgb(3,43,91) 626.1px,rgb(4,45,96) 683.0px,rgb(4,48,101) 739.9px,rgb(4,49,106) 796.8px,rgb(4,51,111) 853.8px,rgb(4,54,116) 910.7px,rgb(4,56,121) 967.6px,rgb(5,59,126) 1024.5px,rgb(5,61,131) 1081.4px,rgb(5,61,131) 1138.3px,rgb(5,62,131) 1195.2px,rgb(5,57,122) 1252.2px,rgb(4,52,112) 1309.1px,rgb(4,52,112) 1366.0px)"></div>
<div style="position:absolute;left:0;top:558px;width:1366px;height:6px;background:linear-gradient(90deg,rgb(1,18,40) 0.0px,rgb(1,18,40) 56.9px,rgb(2,23,50) 113.8px,rgb(2,28,60) 170.8px,rgb(2,30,65) 227.7px,rgb(2,32,70) 284.6px,rgb(2,32,70) 341.5px,rgb(2,32,71) 398.4px,rgb(3,35,76) 455.3px,rgb(3,37,81) 512.2px,rgb(3,40,86) 569.2px,rgb(3,42,91) 626.1px,rgb(4,45,96) 683.0px,rgb(4,47,101) 739.9px,rgb(4,49,105) 796.8px,rgb(4,51,110) 853.8px,rgb(4,54,115) 910.7px,rgb(4,56,120) 967.6px,rgb(5,59,125) 1024.5px,rgb(5,61,130) 1081.4px,rgb(5,61,130) 1138.3px,rgb(5,61,130) 1195.2px,rgb(5,56,121) 1252.2px,rgb(4,52,111) 1309.1px,rgb(4,52,111) 1366.0px)"></div>
<div style="position:absolute;left:0;top:564px;width:1366px;height:6px;background:linear-gradient(90deg,rgb(1,18,40) 0.0px,rgb(1,18,40) 56.9px,rgb(2,23,50) 113.8px,rgb(2,28,60) 170.8px,rgb(2,30,65) 227.7px,rgb(2,32,70) 284.6px,rgb(2,32,70) 341.5px,rgb(2,32,70) 398.4px,rgb(3,35,75) 455.3px,rgb(3,37,80) 512.2px,rgb(3,40,85) 569.2px,rgb(3,42,90) 626.1px,rgb(4,45,95) 683.0px,rgb(4,47,100) 739.9px,rgb(4,49,105) 796.8px,rgb(4,51,110) 853.8px,rgb(4,54,115) 910.7px,rgb(4,56,120) 967.6px,rgb(5,59,125) 1024.5px,rgb(5,61,130) 1081.4px,rgb(5,61,130) 1138.3px,rgb(5,61,130) 1195.2px,rgb(5,56,120) 1252.2px,rgb(4,51,110) 1309.1px,rgb(4,51,110) 1366.0px)"></div>
<div style="position:absolute;left:0;top:570px;width:1366px;height:6px;background:linear-gradient(90deg,rgb(1,18,40) 0.0px,rgb(1,18,40) 56.9px,rgb(2,23,50) 113.8px,rgb(2,28,60) 170.8px,rgb(2,30,65) 227.7px,rgb(2,32,70) 284.6px,rgb(2,32,70) 341.5px,rgb(2,32,70) 398.4px,rgb(2,34,75) 455.3px,rgb(3,37,80) 512.2px,rgb(3,39,85) 569.2px,rgb(3,42,90) 626.1px,rgb(3,44,95) 683.0px,rgb(4,47,100) 739.9px,rgb(4,49,105) 796.8px,rgb(4,51,110) 853.8px,rgb(4,53,115) 910.7px,rgb(4,56,120) 967.6px,rgb(4,58,125) 1024.5px,rgb(5,61,130) 1081.4px,rgb(5,61,130) 1138.3px,rgb(5,61,130) 1195.2px,rgb(4,56,120) 1252.2px,rgb(4,51,110) 1309.1px,rgb(4,51,110) 1366.0px)"></div>
<div style="position:absolute;left:0;top:576px;width:1366px;height:6px;background:linear-gradient(90deg,rgb(1,18,40) 0.0px,rgb(1,18,40) 56.9px,rgb(2,23,50) 113.8px,rgb(2,28,60) 170.8px,rgb(2,30,65) 227.7px,rgb(2,32,70) 284.6px,rgb(2,32,70) 341.5px,rgb(2,32,70) 398.4px,rgb(2,34,75) 455.3px,rgb(3,37,80) 512.2px,rgb(3,39,85) 569.2px,rgb(3,42,90) 626.1px,rgb(3,44,95) 683.0px,rgb(4,47,100) 739.9px,rgb(4,49,105) 796.8px,rgb(4,51,110) 853.8px,rgb(4,53,115) 910.7px,rgb(4,56,120) 967.6px,rgb(4,58,125) 1024.5px,rgb(5,61,130) 1081.4px,rgb(5,61,130) 1138.3px,rgb(5,61,130) 1195.2px,rgb(4,56,120) 1252.2px,rgb(4,51,110) 1309.1px,rgb(4,51,110) 1366.0px)"></div>
<div style="position:absolute;left:0;top:582px;width:1366px;height:6px;background:linear-gradient(90deg,rgb(1,18,40) 0.0px,rgb(1,18,40) 56.9px,rgb(2,23,50) 113.8px,rgb(2,28,60) 170.8px,rgb(2,30,65) 227.7px,rgb(2,32,70) 284.6px,rgb(2,32,69) 341.5px,rgb(2,32,69) 398.4px,rgb(2,34,74) 455.3px,rgb(3,36,79) 512.2px,rgb(3,39,84) 569.2px,rgb(3,41,89) 626.1px,rgb(3,44,94) 683.0px,rgb(4,46,99) 739.9px,rgb(4,48,104) 796.8px,rgb(4,50,109) 853.8px,rgb(4,53,114) 910.7px,rgb(4,56,120) 967.6px,rgb(4,58,125) 1024.5px,rgb(5,61,130) 1081.4px,rgb(5,61,129) 1138.3px,rgb(5,60,128) 1195.2px,rgb(4,55,119) 1252.2px,rgb(4,51,109) 1309.1px,rgb(4,51,109) 1366.0px)"></div>
<div style="position:absolute;left:0;top:588px;width:1366px;height:6px;background:linear-gradient(90deg,rgb(1,18,40) 0.0px,rgb(1,18,40) 56.9px,rgb(2,23,50) 113.8px,rgb(2,28,59) 170.8px,rgb(2,30,64) 227.7px,rgb(2,32,69) 284.6px,rgb(2,31,69) 341.5px,rgb(2,31,68) 398.4px,rgb(2,33,73) 455.3px,rgb(3,36,77) 512.2px,rgb(3,38,82) 569.2px,rgb(3,41,87) 626.1px,rgb(3,43,92) 683.0px,rgb(4,46,97) 739.9px,rgb(4,48,102) 796.8px,rgb(4,50,107) 853.8px,rgb(4,53,113) 910.7px,rgb(4,56,119) 967.6px,rgb(4,58,124) 1024.5px,rgb(5,61,129) 1081.4px,rgb(5,60,128) 1138.3px,rgb(5,60,127) 1195.2px,rgb(4,55,117) 1252.2px,rgb(4,50,108) 1309.1px,rgb(4,50,108) 1366.0px)"></div>
<div style="position:absolute;left:0;top:594px;width:1366px;height:6px;background:linear-gradient(90deg,rgb(1,18,40) 0.0px,rgb(1,18,40) 56.9px,rgb(1,23,49) 113.8px,rgb(2,27,59) 170.8px,rgb(2,29,64) 227.7px,rgb(2,31,69) 284.6px,rgb(2,31,68) 341.5px,rgb(2,31,67) 398.4px,rgb(2,33,71) 455.3px,rgb(3,35,76) 512.2px,rgb(3,37,81) 569.2px,rgb(3,40,86) 626.1px,rgb(3,42,91) 683.0px,rgb(4,45,96) 739.9px,rgb(4,47,101) 796.8px,rgb(4,49,106) 853.8px,rgb(4,52,112) 910.7px,rgb(4,55,119) 967.6px,rgb(4,58,124) 1024.5px,rgb(5,60,129) 1081.4px,rgb(5,59,127) 1138.3px,rgb(5,59,125) 1195.2px,rgb(4,54,116) 1252.2px,rgb(4,49,107) 1309.1px,rgb(4,49,107) 1366.0px)"></div>
<div style="position:absolute;left:0;top:600px;width:1366px;height:6px;background:linear-gradient(90deg,rgb(1,18,40) 0.0px,rgb(1,18,40) 56.9px,rgb(2,22,49) 113.8px,rgb(2,27,58) 170.8px,rgb(2,29,63) 227.7px,rgb(2,31,68) 284.6px,rgb(2,31,67) 341.5px,rgb(2,30,66) 398.4px,rgb(2,32,70) 455.3px,rgb(3,34,74) 512.2px,rgb(3,37,79) 569.2px,rgb(3,39,84) 626.1px,rgb(3,41,89) 683.0px,rgb(4,44,94) 739.9px,rgb(4,46,99) 796.8px,rgb(4,48,104) 853.8px,rgb(4,51,111) 910.7px,rgb(4,55,118) 967.6px,rgb(4,57,123) 1024.5px,rgb(5,60,128) 1081.4px,rgb(5,59,125) 1138.3px,rgb(5,57,122) 1195.2px,rgb(4,53,114) 1252.2px,rgb(4,49,105) 1309.1px,rgb(4,49,105) 1366.0px)"></div>
<div style="position:absolute;left:0;top:606px;width:1366px;height:6px;background:linear-gradient(90deg,rgb(1,18,40) 0.0px,rgb(1,18,40) 56.9px,rgb(2,22,49) 113.8px,rgb(2,27,57) 170.8px,rgb(2,29,62) 227.7px,rgb(2,31,67) 284.6px,rgb(2,30,66) 341.5px,rgb(2,29,64) 398.4px,rgb(2,31,68) 455.3px,rgb(3,33,71) 512.2px,rgb(3,35,76) 569.2px,rgb(3,38,81) 626.1px,rgb(3,40,86) 683.0px,rgb(3,43,91) 739.9px,rgb(4,45,96) 796.8px,rgb(4,47,101) 853.8px,rgb(4,51,109) 910.7px,rgb(4,55,117) 967.6px,rgb(4,57,122) 1024.5px,rgb(5,60,127) 1081.4px,rgb(5,58,123) 1138.3px,rgb(4,56,120) 1195.2px,rgb(4,52,112) 1252.2px,rgb(4,48,104) 1309.1px,rgb(4,48,104) 1366.0px)"></div>
<div style="position:absolute;left:0;top:612px;width:1366px;height:6px;background:linear-gradient(90deg,rgb(1,18,40) 0.0px,rgb(1,18,40) 56.9px,rgb(2,22,48) 113.8px,rgb(2,26,56) 170.8px,rgb(2,28,61) 227.7px,rgb(2,31,66) 284.6px,rgb(2,30,64) 341.5px,rgb(2,29,63) 398.4px,rgb(2,30,66) 455.3px,rgb(3,32,69) 512.2px,rgb(3,34,74) 569.2px,rgb(3,37,79) 626.1px,rgb(3,39,84) 683.0px,rgb(3,41,89) 739.9px,rgb(3,44,94) 796.8px,rgb(4,46,99) 853.8px,rgb(4,50,108) 910.7px,rgb(4,54,116) 967.6px,rgb(4,57,121) 1024.5px,rgb(5,59,126) 1081.4px,rgb(4,57,121) 1138.3px,rgb(4,55,117) 1195.2px,rgb(4,51,109) 1252.2px,rgb(4,47,102) 1309.1px,rgb(4,47,102) 1366.0px)"></div>
<div style="position:absolute;left:0;top:618px;width:1366px;height:6px;background:linear-gradient(90deg,rgb(1,18,40) 0.0px,rgb(1,18,40) 56.9px,rgb(2,22,48) 113.8px,rgb(2,26,55) 170.8px,rgb(2,28,60) 227.7px,rgb(2,30,65) 284.6px,rgb(2,29,63) 341.5px,rgb(2,28,61) 398.4px,rgb(2,29,64) 455.3px,rgb(3,31,66) 512.2px,rgb(3,33,71) 569.2px,rgb(3,36,76) 626.1px,rgb(3,38,81) 683.0px,rgb(3,40,86) 739.9px,rgb(3,42,91) 796.8px,rgb(4,45,96) 853.8px,rgb(4,49,106) 910.7px,rgb(4,54,115) 967.6px,rgb(4,56,120) 1024.5px,rgb(5,59,125) 1081.4px,rgb(4,56,119) 1138.3px,rgb(4,53,114) 1195.2px,rgb(4,50,107) 1252.2px,rgb(4,46,100) 1309.1px,rgb(4,46,100) 1366.0px)"></div>
<div style="position:absolute;left:0;top:624px;width:1366px;height:6px;background:linear-gradient(90deg,rgb(1,18,40) 0.0px,rgb(1,18,40) 56.9px,rgb(2,22,47) 113.8px,rgb(2,25,55) 170.8px,rgb(2,28,60) 227.7px,rgb(2,30,65) 284.6px,rgb(2,28,62) 341.5px,rgb(2,27,59) 398.4px,rgb(2,28,61) 455.3px,rgb(2,29,64) 512.2px,rgb(2,32,69) 569.2px,rgb(2,34,74) 626.1px,rgb(3,37,79) 683.0px,rgb(3,39,84) 739.9px,rgb(3,41,89) 796.8px,rgb(3,43,94) 853.8px,rgb(4,48,104) 910.7px,rgb(4,53,115) 967.6px,rgb(4,56,120) 1024.5px,rgb(4,58,125) 1081.4px,rgb(4,55,118) 1138.3px,rgb(4,52,110) 1195.2px,rgb(4,48,104) 1252.2px,rgb(3,45,98) 1309.1px,rgb(3,45,98) 1366.0px)"></div>
<div style="position:absolute;left:0;top:630px;width:1366px;height:6px;background:linear-gradient(90deg,rgb(1,18,40) 0.0px,rgb(1,18,40) 56.9px,rgb(2,21,47) 113.8px,rgb(2,25,54) 170.8px,rgb(2,27,59) 227.7px,rgb(2,29,64) 284.6px,rgb(2,28,61) 341.5px,rgb(2,26,57) 398.4px,rgb(2,27,59) 455.3px,rgb(2,28,61) 512.2px,rgb(2,31,66) 569.2px,rgb(2,33,71) 626.1px,rgb(3,35,76) 683.0px,rgb(3,38,81) 739.9px,rgb(3,40,86) 796.8px,rgb(3,42,91) 853.8px,rgb(4,48,102) 910.7px,rgb(4,53,114) 967.6px,rgb(4,55,119) 1024.5px,rgb(4,58,124) 1081.4px,rgb(4,54,116) 1138.3px,rgb(4,50,107) 1195.2px,rgb(4,47,102) 1252.2px,rgb(3,44,96) 1309.1px,rgb(3,44,96) 1366.0px)"></div>
<div style="position:absolute;left:0;top:636px;width:1366px;height:6px;background:linear-gradient(90deg,rgb(1,18,40) 0.0px,rgb(1,18,40) 56.9px,rgb(2,21,46) 113.8px,rgb(2,24,53) 170.8px,rgb(2,27,58) 227.7px,rgb(2,29,63) 284.6px,rgb(2,27,59) 341.5px,rgb(2,26,56) 398.4px,rgb(2,26,57) 455.3px,rgb(2,27,59) 512.2px,rgb(2,30,64) 569.2px,rgb(2,32,69) 626.1px,rgb(2,34,74) 683.0px,rgb(3,36,79) 739.9px,rgb(3,39,84) 796.8px,rgb(3,41,89) 853.8px,rgb(4,47,101) 910.7px,rgb(4,52,113) 967.6px,rgb(4,55,118) 1024.5px,rgb(4,57,123) 1081.4px,rgb(4,53,114) 1138.3px,rgb(4,49,104) 1195.2px,rgb(3,46,99) 1252.2px,rgb(3,43,94) 1309.1px,rgb(3,43,94) 1366.0px)"></div>
<div style="position:absolute;left:0;top:642px;width:1366px;height:6px;background:linear-gradient(90deg,rgb(1,18,40) 0.0px,rgb(1,18,40) 56.9px,rgb(2,21,46) 113.8px,rgb(2,24,52) 170.8px,rgb(2,26,57) 227.7px,rgb(2,29,62) 284.6px,rgb(2,27,58) 341.5px,rgb(2,25,54) 398.4px,rgb(2,25,55) 455.3px,rgb(2,26,56) 512.2px,rgb(2,28,61) 569.2px,rgb(2,31,66) 626.1px,rgb(2,33,71) 683.0px,rgb(2,35,76) 739.9px,rgb(3,38,81) 796.8px,rgb(3,40,86) 853.8px,rgb(4,46,99) 910.7px,rgb(4,52,112) 967.6px,rgb(4,55,117) 1024.5px,rgb(4,57,122) 1081.4px,rgb(4,52,112) 1138.3px,rgb(3,48,102) 1195.2px,rgb(3,45,97) 1252.2px,rgb(3,42,93) 1309.1px,rgb(3,42,93) 1366.0px)"></div>
<div style="position:absolute;left:0;top:648px;width:1366px;height:6px;background:linear-gradient(90deg,rgb(1,18,40) 0.0px,rgb(1,18,40) 56.9px,rgb(2,21,46) 113.8px,rgb(2,24,51) 170.8px,rgb(2,26,56) 227.7px,rgb(2,29,61) 284.6px,rgb(2,26,57) 341.5px,rgb(2,24,53) 398.4px,rgb(2,25,54) 455.3px,rgb(2,25,54) 512.2px,rgb(2,28,59) 569.2px,rgb(2,30,64) 626.1px,rgb(2,32,69) 683.0px,rgb(2,34,74) 739.9px,rgb(3,37,79) 796.8px,rgb(3,39,84) 853.8px,rgb(4,45,98) 910.7px,rgb(4,52,111) 967.6px,rgb(4,54,116) 1024.5px,rgb(4,57,121) 1081.4px,rgb(4,52,110) 1138.3px,rgb(3,46,99) 1195.2px,rgb(3,44,95) 1252.2px,rgb(3,42,91) 1309.1px,rgb(3,42,91) 1366.0px)"></div>
<div style="position:absolute;left:0;top:654px;width:1366px;height:6px;background:linear-gradient(90deg,rgb(1,18,40) 0.0px,rgb(1,18,40) 56.9px,rgb(2,21,45) 113.8px,rgb(2,23,51) 170.8px,rgb(2,26,56) 227.7px,rgb(2,28,61) 284.6px,rgb(2,26,56) 341.5px,rgb(2,24,52) 398.4px,rgb(2,24,52) 455.3px,rgb(2,24,53) 512.2px,rgb(2,27,58) 569.2px,rgb(2,29,63) 626.1px,rgb(2,31,68) 683.0px,rgb(2,33,73) 739.9px,rgb(3,36,78) 796.8px,rgb(3,38,83) 853.8px,rgb(4,45,97) 910.7px,rgb(4,51,111) 967.6px,rgb(4,54,116) 1024.5px,rgb(4,56,121) 1081.4px,rgb(4,51,109) 1138.3px,rgb(3,45,97) 1195.2px,rgb(3,43,94) 1252.2px,rgb(3,41,90) 1309.1px,rgb(3,41,90) 1366.0px)"></div>
<div style="position:absolute;left:0;top:660px;width:1366px;height:6px;background:linear-gradient(90deg,rgb(1,18,40) 0.0px,rgb(1,18,40) 56.9px,rgb(2,21,45) 113.8px,rgb(2,23,50) 170.8px,rgb(2,26,55) 227.7px,rgb(2,28,60) 284.6px,rgb(2,26,56) 341.5px,rgb(2,23,51) 398.4px,rgb(2,23,51) 455.3px,rgb(2,24,51) 512.2px,rgb(2,26,56) 569.2px,rgb(2,29,61) 626.1px,rgb(2,31,66) 683.0px,rgb(2,33,71) 739.9px,rgb(3,35,76) 796.8px,rgb(3,38,81) 853.8px,rgb(4,44,96) 910.7px,rgb(4,51,110) 967.6px,rgb(4,54,115) 1024.5px,rgb(4,56,120) 1081.4px,rgb(4,50,108) 1138.3px,rgb(3,45,96) 1195.2px,rgb(3,43,92) 1252.2px,rgb(3,40,89) 1309.1px,rgb(3,40,89) 1366.0px)"></div>
<div style="position:absolute;left:0;top:666px;width:1366px;height:6px;background:linear-gradient(90deg,rgb(1,18,40) 0.0px,rgb(1,18,40) 56.9px,rgb(2,21,45) 113.8px,rgb(2,23,50) 170.8px,rgb(2,26,55) 227.7px,rgb(2,28,60) 284.6px,rgb(2,26,55) 341.5px,rgb(2,23,50) 398.4px,rgb(2,23,50) 455.3px,rgb(2,23,50) 512.2px,rgb(2,26,55) 569.2px,rgb(2,28,60) 626.1px,rgb(2,30,65) 683.0px,rgb(2,32,70) 739.9px,rgb(3,35,75) 796.8px,rgb(3,37,80) 853.8px,rgb(4,44,95) 910.7px,rgb(4,51,110) 967.6px,rgb(4,54,115) 1024.5px,rgb(4,56,120) 1081.4px,rgb(4,50,107) 1138.3px,rgb(3,44,94) 1195.2px,rgb(3,42,91) 1252.2px,rgb(3,40,88) 1309.1px,rgb(3,40,88) 1366.0px)"></div>
<div style="position:absolute;left:0;top:672px;width:1366px;height:6px;background:linear-gradient(90deg,rgb(1,18,40) 0.0px,rgb(1,18,40) 56.9px,rgb(2,21,45) 113.8px,rgb(2,23,50) 170.8px,rgb(2,26,55) 227.7px,rgb(2,28,60) 284.6px,rgb(2,26,55) 341.5px,rgb(2,23,50) 398.4px,rgb(2,23,50) 455.3px,rgb(2,23,50) 512.2px,rgb(2,26,55) 569.2px,rgb(2,28,60) 626.1px,rgb(2,30,65) 683.0px,rgb(2,32,70) 739.9px,rgb(3,35,75) 796.8px,rgb(3,37,80) 853.8px,rgb(4,44,95) 910.7px,rgb(4,51,110) 967.6px,rgb(4,54,115) 1024.5px,rgb(4,56,120) 1081.4px,rgb(4,50,107) 1138.3px,rgb(3,44,94) 1195.2px,rgb(3,42,91) 1252.2px,rgb(3,40,88) 1309.1px,rgb(3,40,88) 1366.0px)"></div>
<div style="position:absolute;left:0;top:678px;width:1366px;height:6px;background:linear-gradient(90deg,rgb(1,18,40) 0.0px,rgb(1,18,40) 56.9px,rgb(2,20,45) 113.8px,rgb(2,23,50) 170.8px,rgb(2,26,55) 227.7px,rgb(2,28,60) 284.6px,rgb(2,26,55) 341.5px,rgb(2,23,50) 398.4px,rgb(2,23,50) 455.3px,rgb(2,23,50) 512.2px,rgb(2,26,55) 569.2px,rgb(2,28,60) 626.1px,rgb(2,30,65) 683.0px,rgb(2,32,70) 739.9px,rgb(3,35,75) 796.8px,rgb(3,37,80) 853.8px,rgb(4,44,95) 910.7px,rgb(4,51,110) 967.6px,rgb(4,54,115) 1024.5px,rgb(4,56,120) 1081.4px,rgb(4,50,107) 1138.3px,rgb(3,44,94) 1195.2px,rgb(3,42,91) 1252.2px,rgb(3,40,88) 1309.1px,rgb(3,40,88) 1366.0px)"></div>
<div style="position:absolute;left:0;top:684px;width:1366px;height:6px;background:linear-gradient(90deg,rgb(1,18,40) 0.0px,rgb(1,18,40) 56.9px,rgb(2,20,45) 113.8px,rgb(2,23,50) 170.8px,rgb(2,26,55) 227.7px,rgb(2,28,60) 284.6px,rgb(2,26,55) 341.5px,rgb(2,23,50) 398.4px,rgb(2,23,50) 455.3px,rgb(2,23,50) 512.2px,rgb(2,26,55) 569.2px,rgb(2,28,60) 626.1px,rgb(2,30,65) 683.0px,rgb(2,32,70) 739.9px,rgb(3,35,75) 796.8px,rgb(3,37,80) 853.8px,rgb(4,44,95) 910.7px,rgb(4,51,110) 967.6px,rgb(4,54,115) 1024.5px,rgb(4,56,120) 1081.4px,rgb(4,50,107) 1138.3px,rgb(3,44,94) 1195.2px,rgb(3,42,91) 1252.2px,rgb(3,40,88) 1309.1px,rgb(3,40,88) 1366.0px)"></div>
<div style="position:absolute;left:0;top:690px;width:1366px;height:6px;background:linear-gradient(90deg,rgb(1,18,40) 0.0px,rgb(1,18,40) 56.9px,rgb(2,20,45) 113.8px,rgb(2,23,50) 170.8px,rgb(2,26,55) 227.7px,rgb(2,28,60) 284.6px,rgb(2,26,55) 341.5px,rgb(2,23,50) 398.4px,rgb(2,23,50) 455.3px,rgb(2,23,50) 512.2px,rgb(2,26,55) 569.2px,rgb(2,28,60) 626.1px,rgb(2,30,65) 683.0px,rgb(2,32,70) 739.9px,rgb(3,35,75) 796.8px,rgb(3,37,80) 853.8px,rgb(4,44,95) 910.7px,rgb(4,51,110) 967.6px,rgb(4,54,115) 1024.5px,rgb(4,56,120) 1081.4px,rgb(4,50,107) 1138.3px,rgb(3,44,94) 1195.2px,rgb(3,42,91) 1252.2px,rgb(3,40,88) 1309.1px,rgb(3,40,88) 1366.0px)"></div>
<div style="position:absolute;left:0;top:696px;width:1366px;height:6px;background:linear-gradient(90deg,rgb(1,18,40) 0.0px,rgb(1,18,40) 56.9px,rgb(2,20,45) 113.8px,rgb(2,23,50) 170.8px,rgb(2,26,55) 227.7px,rgb(2,28,60) 284.6px,rgb(2,26,55) 341.5px,rgb(2,23,50) 398.4px,rgb(2,23,50) 455.3px,rgb(2,23,50) 512.2px,rgb(2,26,55) 569.2px,rgb(2,28,60) 626.1px,rgb(2,30,65) 683.0px,rgb(2,32,70) 739.9px,rgb(3,35,75) 796.8px,rgb(3,37,80) 853.8px,rgb(4,44,95) 910.7px,rgb(4,51,110) 967.6px,rgb(4,54,115) 1024.5px,rgb(4,56,120) 1081.4px,rgb(4,50,107) 1138.3px,rgb(3,44,94) 1195.2px,rgb(3,42,91) 1252.2px,rgb(3,40,88) 1309.1px,rgb(3,40,88) 1366.0px)"></div>
<div style="position:absolute;left:0;top:702px;width:1366px;height:6px;background:linear-gradient(90deg,rgb(1,18,40) 0.0px,rgb(1,18,40) 56.9px,rgb(2,20,45) 113.8px,rgb(2,23,50) 170.8px,rgb(2,26,55) 227.7px,rgb(2,28,60) 284.6px,rgb(2,26,55) 341.5px,rgb(2,23,50) 398.4px,rgb(2,23,50) 455.3px,rgb(2,23,50) 512.2px,rgb(2,26,55) 569.2px,rgb(2,28,60) 626.1px,rgb(2,30,65) 683.0px,rgb(2,32,70) 739.9px,rgb(3,35,75) 796.8px,rgb(3,37,80) 853.8px,rgb(4,44,95) 910.7px,rgb(4,51,110) 967.6px,rgb(4,54,115) 1024.5px,rgb(4,56,120) 1081.4px,rgb(4,50,107) 1138.3px,rgb(3,44,94) 1195.2px,rgb(3,42,91) 1252.2px,rgb(3,40,88) 1309.1px,rgb(3,40,88) 1366.0px)"></div>
<div style="position:absolute;left:0;top:708px;width:1366px;height:6px;background:linear-gradient(90deg,rgb(1,18,40) 0.0px,rgb(1,18,40) 56.9px,rgb(2,20,45) 113.8px,rgb(2,23,50) 170.8px,rgb(2,26,55) 227.7px,rgb(2,28,60) 284.6px,rgb(2,26,55) 341.5px,rgb(2,23,50) 398.4px,rgb(2,23,50) 455.3px,rgb(2,23,50) 512.2px,rgb(2,26,55) 569.2px,rgb(2,28,60) 626.1px,rgb(2,30,65) 683.0px,rgb(2,32,70) 739.9px,rgb(3,35,75) 796.8px,rgb(3,37,80) 853.8px,rgb(4,44,95) 910.7px,rgb(4,51,110) 967.6px,rgb(4,54,115) 1024.5px,rgb(4,56,120) 1081.4px,rgb(4,50,107) 1138.3px,rgb(3,44,94) 1195.2px,rgb(3,42,91) 1252.2px,rgb(3,40,88) 1309.1px,rgb(3,40,88) 1366.0px)"></div>
<div style="position:absolute;left:0;top:714px;width:1366px;height:6px;background:linear-gradient(90deg,rgb(1,18,40) 0.0px,rgb(1,18,40) 56.9px,rgb(2,20,45) 113.8px,rgb(2,23,50) 170.8px,rgb(2,26,55) 227.7px,rgb(2,28,60) 284.6px,rgb(2,26,55) 341.5px,rgb(2,23,50) 398.4px,rgb(2,23,50) 455.3px,rgb(2,23,50) 512.2px,rgb(2,26,55) 569.2px,rgb(2,28,60) 626.1px,rgb(2,30,65) 683.0px,rgb(2,32,70) 739.9px,rgb(3,35,75) 796.8px,rgb(3,37,80) 853.8px,rgb(4,44,95) 910.7px,rgb(4,51,110) 967.6px,rgb(4,54,115) 1024.5px,rgb(4,56,120) 1081.4px,rgb(4,50,107) 1138.3px,rgb(3,44,94) 1195.2px,rgb(3,42,91) 1252.2px,rgb(3,40,88) 1309.1px,rgb(3,40,88) 1366.0px)"></div>
<div style="position:absolute;left:0;top:720px;width:1366px;height:6px;background:linear-gradient(90deg,rgb(1,18,40) 0.0px,rgb(1,18,40) 56.9px,rgb(2,20,45) 113.8px,rgb(2,23,50) 170.8px,rgb(2,26,55) 227.7px,rgb(2,28,60) 284.6px,rgb(2,26,55) 341.5px,rgb(2,23,50) 398.4px,rgb(2,23,50) 455.3px,rgb(2,23,50) 512.2px,rgb(2,26,55) 569.2px,rgb(2,28,60) 626.1px,rgb(2,30,65) 683.0px,rgb(2,32,70) 739.9px,rgb(3,35,75) 796.8px,rgb(3,37,80) 853.8px,rgb(4,44,95) 910.7px,rgb(4,51,110) 967.6px,rgb(4,54,115) 1024.5px,rgb(4,56,120) 1081.4px,rgb(4,50,107) 1138.3px,rgb(3,44,94) 1195.2px,rgb(3,42,91) 1252.2px,rgb(3,40,88) 1309.1px,rgb(3,40,88) 1366.0px)"></div>
<div style="position:absolute;left:0;top:726px;width:1366px;height:6px;background:linear-gradient(90deg,rgb(1,18,40) 0.0px,rgb(1,18,40) 56.9px,rgb(2,20,45) 113.8px,rgb(2,23,50) 170.8px,rgb(2,26,55) 227.7px,rgb(2,28,60) 284.6px,rgb(2,26,55) 341.5px,rgb(2,23,50) 398.4px,rgb(2,23,50) 455.3px,rgb(2,23,50) 512.2px,rgb(2,26,55) 569.2px,rgb(2,28,60) 626.1px,rgb(2,30,65) 683.0px,rgb(2,32,70) 739.9px,rgb(3,35,75) 796.8px,rgb(3,37,80) 853.8px,rgb(4,44,95) 910.7px,rgb(4,51,110) 967.6px,rgb(4,54,115) 1024.5px,rgb(4,56,120) 1081.4px,rgb(4,50,107) 1138.3px,rgb(3,44,94) 1195.2px,rgb(3,42,91) 1252.2px,rgb(3,40,88) 1309.1px,rgb(3,40,88) 1366.0px)"></div>
<svg width="1366" height="728" style="position:absolute;left:0;top:0">
<defs>
 <filter id="bl8" x="-50%" y="-50%" width="200%" height="200%"><feGaussianBlur stdDeviation="8"/></filter>
 <filter id="bl20" x="-50%" y="-50%" width="200%" height="200%"><feGaussianBlur stdDeviation="22"/></filter>
 <filter id="blg" x="-10%" y="-10%" width="120%" height="120%"><feGaussianBlur stdDeviation="45"/></filter>
 <filter id="bl1" x="-50%" y="-50%" width="200%" height="200%"><feGaussianBlur stdDeviation="1"/></filter>
 <filter id="bl3" x="-50%" y="-50%" width="200%" height="200%"><feGaussianBlur stdDeviation="2.5"/></filter>
 <radialGradient id="big" cx="1213" cy="400" r="1000" gradientTransform="translate(1213 400) scale(1 .75) translate(-1213 -400)" gradientUnits="userSpaceOnUse">
  <stop offset="0" stop-color="#083e7a"/><stop offset=".25" stop-color="#063672"/><stop offset=".55" stop-color="#042c62"/><stop offset=".85" stop-color="#021f48"/><stop offset="1" stop-color="#011832"/>
 </radialGradient>
 <linearGradient id="topdark" x1="0" y1="0" x2="0" y2="1">
  <stop offset="0" stop-color="#011530" stop-opacity=".85"/><stop offset=".22" stop-color="#011530" stop-opacity=".35"/><stop offset=".45" stop-color="#011530" stop-opacity="0"/>
  <stop offset=".8" stop-color="#011530" stop-opacity="0"/><stop offset="1" stop-color="#010f24" stop-opacity=".7"/>
 </linearGradient>
 <linearGradient id="leftdark" x1="0" y1="0" x2="1" y2="0">
  <stop offset="0" stop-color="#011530" stop-opacity=".6"/><stop offset=".2" stop-color="#011530" stop-opacity=".2"/><stop offset=".4" stop-color="#011530" stop-opacity="0"/>
 </linearGradient>
 <radialGradient id="glow" cx="1213" cy="390" r="160" gradientUnits="userSpaceOnUse">
  <stop offset="0" stop-color="#1e8ae0" stop-opacity=".3"/><stop offset="1" stop-color="#1e8ae0" stop-opacity="0"/>
 </radialGradient>
 <radialGradient id="cg" cx=".5" cy=".5" r=".5">
  <stop offset="0" stop-color="#fff" stop-opacity="1"/><stop offset=".08" stop-color="#bfe8ff" stop-opacity=".9"/><stop offset=".35" stop-color="#2aa0f0" stop-opacity=".35"/><stop offset="1" stop-color="#1a8ae0" stop-opacity="0"/>
 </radialGradient>
 <linearGradient id="pane1" x1="0" y1="233" x2="0" y2="382" gradientUnits="userSpaceOnUse">
  <stop offset="0" stop-color="#0a78d6"/><stop offset=".28" stop-color="#168ae0"/><stop offset=".29" stop-color="#4eaaea"/>
  <stop offset=".5" stop-color="#5db6ee"/><stop offset=".51" stop-color="#d6f2ff"/><stop offset=".54" stop-color="#8ccff5"/><stop offset="1" stop-color="#8dd0f5"/>
 </linearGradient>
 <linearGradient id="pane2" x1="0" y1="391" x2="0" y2="540" gradientUnits="userSpaceOnUse">
  <stop offset="0" stop-color="#8dd0f5"/><stop offset=".47" stop-color="#86ccf4"/><stop offset=".49" stop-color="#d6f2ff"/><stop offset=".51" stop-color="#5db6ee"/>
  <stop offset=".72" stop-color="#4aa8ea"/><stop offset=".73" stop-color="#168ae0"/><stop offset="1" stop-color="#0a78d6"/>
 </linearGradient>
</defs>
<g filter="url(#bl3)" opacity=".35">
 <polygon points="80,166 346,190 346,196 80,173" fill="#2a6cb0"/>
</g>
<g filter="url(#bl3)" opacity=".35">
 <polygon points="346,32 660,92 640,92 346,40" fill="#2a70b8"/>
</g>
<g filter="url(#bl20)" opacity=".45">
 <ellipse cx="1000" cy="85" rx="160" ry="22" fill="#0a4a8c"/>
 <ellipse cx="700" cy="80" rx="200" ry="25" fill="#06386f"/>
</g>
<!-- dark horizontal band (floor shadow) -->
<defs><linearGradient id="bandg" x1="0" x2="1"><stop offset="0" stop-color="#011a38" stop-opacity="0"/><stop offset=".12" stop-color="#011a38" stop-opacity=".85"/><stop offset="1" stop-color="#011a38" stop-opacity=".7"/></linearGradient></defs>
<rect x="40" y="369" width="1173" height="25" fill="url(#bandg)" filter="url(#bl3)"/>
<rect x="1130" y="381" width="83" height="10" fill="#073e76"/>
<g filter="url(#bl20)">
 <ellipse cx="1225" cy="390" rx="40" ry="170" fill="#0a5ab0" opacity=".55"/>
</g>
<polygon points="1130,242 1213,234 1213,286 1130,274" fill="#0b78d6"/>
<polygon points="1130,274 1213,286 1213,315 1130,304" fill="#4aaeee"/>
<polygon points="1130,304 1213,315 1213,381 1130,381" fill="#98d3f6"/>
<polygon points="1130,303 1213,313 1213,317 1130,308" fill="#d8f3ff" filter="url(#bl1)"/>
<polygon points="1130,391 1213,391 1213,461 1130,469" fill="#98d3f6"/>
<polygon points="1130,469 1213,461 1213,486 1130,495" fill="#4aaeee"/>
<polygon points="1130,495 1213,486 1213,539 1130,531" fill="#0b78d6"/>
<polygon points="1130,467 1213,459 1213,463 1130,472" fill="#d8f3ff" filter="url(#bl1)"/>
<rect x="1211.3" y="234" width="2.2" height="305" fill="#e0f6ff"/>
<g filter="url(#bl3)">
 <polygon points="1130,221 1213,233 1213,236 1130,226" fill="#bfe8ff" opacity=".7"/>
 <polygon points="1130,241 1213,233 1213,236 1130,246" fill="#bfe8ff" opacity=".8"/>
 <polygon points="1130,530 1213,537 1213,541 1130,536" fill="#bfe8ff" opacity=".7"/>
 <polygon points="1130,555 1213,539 1213,542 1130,560" fill="#bfe8ff" opacity=".5"/>
</g>
<g filter="url(#bl8)">
 <ellipse cx="1185" cy="222" rx="42" ry="16" fill="#1aa4ff" opacity=".85" transform="rotate(15 1185 222)"/>
 <ellipse cx="1185" cy="548" rx="42" ry="14" fill="#1aa4ff" opacity=".75" transform="rotate(-12 1185 548)"/>
 <circle cx="1213" cy="233" r="3" fill="#fff"/>
 <circle cx="1213" cy="539" r="3" fill="#fff"/>
</g>
<g filter="url(#bl1)">
 <circle cx="1213" cy="233" r="2" fill="#fff"/>
 <circle cx="1213" cy="539" r="2" fill="#fff"/>
</g>
</svg>
</div>

<svg class="i" style="left:39px;top:10px" width="48" height="48"><defs><linearGradient id="rb" x1="0" x2="1"><stop offset="0" stop-color="#bcc4cc"/><stop offset=".55" stop-color="#a4adb6"/><stop offset="1" stop-color="#7f8a95"/></linearGradient></defs><path d="M2.5 5.5L24 0.5L44 6L40 45L28 47.5L7 41Z" fill="url(#rb)"/><path d="M2.5 5.5L24 .5L44 6L23 11.5Z" fill="#6f7a85"/><path d="M2.5 5.5L23 11.5L44 6M23 11.5L28 47.5" stroke="#dfe4e8" stroke-width="1" fill="none"/><path d="M6.5 36L26 41L41.5 35L40 45L28 47.5L7 41Z" fill="#d9dde1"/><circle cx="16" cy="22" r="5.5" fill="none" stroke="#1e8ae6" stroke-width="3.2" stroke-dasharray="6.5 2.5"/></svg>
<div class="dl" style="left:-0.5px;top:64px">Papierkorb</div>
<svg class="i" style="left:36px;top:112px" width="50" height="50"><defs><radialGradient id="ffb" cx=".45" cy=".3" r=".75"><stop offset="0" stop-color="#3aa0e6"/><stop offset=".55" stop-color="#1b5cb0"/><stop offset="1" stop-color="#0c2a66"/></radialGradient><linearGradient id="ffo" x1="0" y1="0" x2="1" y2="1"><stop offset="0" stop-color="#f58220"/><stop offset=".55" stop-color="#e8501e"/><stop offset="1" stop-color="#d9381c"/></linearGradient><linearGradient id="ffy" x1="0" y1="0" x2="0" y2="1"><stop offset="0" stop-color="#f6b622"/><stop offset=".5" stop-color="#fbe04a"/><stop offset="1" stop-color="#f29a1c"/></linearGradient></defs><circle cx="27" cy="20" r="18" fill="url(#ffb)"/><path d="M40 9C45 14 48 20 47.5 27C47 34 43 40 37 44C42 37 43 29 40.5 22C40 17 40 13 40 9Z" fill="url(#ffy)"/><path d="M5 7C4 10 4 13 5 15C1 23 1.5 33 7 41C13 48 24 50.5 33 48C40 46 45 41 47.5 35C44 40 38 43 31 43C22 43.5 15 39 13 32C15 35 20 37 25 36.5C31 36 35 32 36 28C33 31 28 32 23 31C19 30 17 27 18 24C20 22 23 22 25 21C24 19 22 18 21 16C22 14 24 13 26 11.5C23 10.5 19 11 17 13C14 12 11 12.5 9 14C8 11.5 6.5 9 5 7Z" fill="url(#ffo)"/><path d="M21 16C22 17 24 17.5 25.5 17" stroke="#fff" stroke-width="1" fill="none" opacity=".8"/></svg>
<svg class="i" style="left:35px;top:150px" width="14" height="14"><rect x=".5" y=".5" width="13" height="13" fill="#f2f4f6" stroke="#d0d3d7"/><path d="M3 13C2.8 8.5 4.5 6.3 7.5 5.6L6.3 3.2L12 2.5L11.6 8.3L9.6 6.9C7.3 7.8 5.8 9.8 5.9 13Z" fill="#3b6fb6"/></svg>
<div class="dl" style="left:-0.5px;top:168px">Mozilla Firefox</div>
<svg class="i" style="left:37px;top:215px" width="50" height="50"><defs><linearGradient id="tbb" x1="0" y1="0" x2="1" y2="1"><stop offset="0" stop-color="#9ed0f2"/><stop offset=".45" stop-color="#3b86d4"/><stop offset="1" stop-color="#1a3d8a"/></linearGradient><linearGradient id="tbe" x1="0" y1="0" x2="0" y2="1"><stop offset="0" stop-color="#faf7f0"/><stop offset="1" stop-color="#d9cfbd"/></linearGradient></defs><path d="M24 2C37 1 48 11 48 25C48 38 38 48 26 48C36 42 41 33 40 24C39 16 33 11 26 12C29 8 27 4 24 2Z" fill="url(#tbb)"/><path d="M20 3C12 6 5 13 4 23C3.5 30 6 37 10 41C9 33 11 25 17 19C21 15 27 13 33 14C31 10 26 6 20 3Z" fill="#3a7fd0"/><path d="M9 20L30 16L40 33L38 41L16 44L8 36Z" fill="url(#tbe)"/><path d="M9 21L23 32L39 33M8 36L20 30M38 41L30 33" stroke="#b8ae98" stroke-width=".9" fill="none"/><path d="M14 10C18 7 24 6 29 8C33 10 36 14 37 19C33 15 28 14 23 15C20 16 18 18 17 22C16 17 15 13 14 10Z" fill="#4f9be0"/><circle cx="21" cy="17" r="1" fill="#c0392b"/></svg>
<svg class="i" style="left:35px;top:254px" width="14" height="14"><rect x=".5" y=".5" width="13" height="13" fill="#f2f4f6" stroke="#d0d3d7"/><path d="M3 13C2.8 8.5 4.5 6.3 7.5 5.6L6.3 3.2L12 2.5L11.6 8.3L9.6 6.9C7.3 7.8 5.8 9.8 5.9 13Z" fill="#3b6fb6"/></svg>
<div class="dl" style="left:-0.5px;top:272px">Mozilla Thunderbird</div>
<svg class="i" style="left:37px;top:321px" width="48" height="48"><circle cx="13" cy="13" r="10" fill="#1da8e8"/><circle cx="35" cy="35" r="10" fill="#1da8e8"/><circle cx="24" cy="24" r="20" fill="#1da8e8"/><path d="M33 15C30 12 26 11 22 12C17 13 15 17 17 21C19 25 28 25 30 29C31 33 27 36 23 35C19 35 16 33 14 31" stroke="#fff" stroke-width="5.5" fill="none" stroke-linecap="round"/></svg>
<svg class="i" style="left:35px;top:358px" width="14" height="14"><rect x=".5" y=".5" width="13" height="13" fill="#f2f4f6" stroke="#d0d3d7"/><path d="M3 13C2.8 8.5 4.5 6.3 7.5 5.6L6.3 3.2L12 2.5L11.6 8.3L9.6 6.9C7.3 7.8 5.8 9.8 5.9 13Z" fill="#3b6fb6"/></svg>
<div class="dl" style="left:-0.5px;top:376px">Skype</div>
<svg class="i" style="left:37px;top:425px" width="48" height="48"><defs><linearGradient id="vo" x1="0" x2="1"><stop offset="0" stop-color="#f27d00"/><stop offset=".5" stop-color="#fb8f10"/><stop offset="1" stop-color="#e06800"/></linearGradient></defs><path d="M5.5 31H42L47 50H0.5Z" fill="#f6a000"/><path d="M2 44H46L47 50H0.5Z" fill="#f08a00"/><path d="M20 1.5Q24 -.5 28 1.5L37 37Q24 44 11 37Z" fill="url(#vo)"/><path d="M18.2 8.2Q24 10 29.8 8.2L32.2 17Q24 19.5 15.8 17Z" fill="#dfe3e6"/><path d="M13.7 26.2Q24 29.5 34.3 26.2L37 36Q24 40 11 36Z" fill="#dfe3e6"/></svg>
<svg class="i" style="left:35px;top:462px" width="14" height="14"><rect x=".5" y=".5" width="13" height="13" fill="#f2f4f6" stroke="#d0d3d7"/><path d="M3 13C2.8 8.5 4.5 6.3 7.5 5.6L6.3 3.2L12 2.5L11.6 8.3L9.6 6.9C7.3 7.8 5.8 9.8 5.9 13Z" fill="#3b6fb6"/></svg>
<div class="dl" style="left:-0.5px;top:480px">VLC media player</div>
<svg class="i" style="left:35px;top:527px" width="53" height="53"><rect x=".5" y=".5" width="52" height="52" fill="rgba(0,0,0,.25)" stroke="#39465a"/><path d="M15.5 2L49.5 26M2.5 18.5L44 49" stroke="#22e022" stroke-width="2"/><path d="M6 10.5H17V13H13V19H10V13H6Z" fill="#f2ea10"/><path d="M16.5 13.5H23V15H18V17H21.5V18.5H18V23H16.5Z" fill="#f2ea10"/><path d="M21 21.5H34.5V23.5H26V32H23.5V23.5H21Z" fill="#f2ea10"/><path d="M32 28H43Q45 28 45 31V32Q45 35 42 35H35V39H32ZM35 30.5V32.5H41.5V30.5Z" fill="#f2ea10"/></svg>
<svg class="i" style="left:35px;top:566px" width="14" height="14"><rect x=".5" y=".5" width="13" height="13" fill="#f2f4f6" stroke="#d0d3d7"/><path d="M3 13C2.8 8.5 4.5 6.3 7.5 5.6L6.3 3.2L12 2.5L11.6 8.3L9.6 6.9C7.3 7.8 5.8 9.8 5.9 13Z" fill="#3b6fb6"/></svg>
<div class="dl" style="left:-0.5px;top:584px">Tftpd64</div>
<svg class="i" style="left:37px;top:633px" width="48" height="48"><path d="M7 1H30L41 12V47H7Z" fill="#f7f7f7" stroke="#dcdcdc" stroke-width=".8"/><path d="M30 1V12H41Z" fill="#e2e2e2"/><circle cx="24" cy="26" r="11" fill="#c9c9c9"/><circle cx="24" cy="26" r="11" fill="none" stroke="#b8b8b8"/><path d="M24 15A11 11 0 0 1 35 26H24Z" fill="#dedede"/><circle cx="24" cy="26" r="3" fill="#f4f4f4"/><circle cx="24" cy="26" r="1.4" fill="#bbb"/></svg>
<div class="dl" style="left:-0.5px;top:688px">bananian-1604.img</div>
<svg class="i" style="left:161px;top:9px" width="48" height="48"><path d="M7 1H30L41 12V47H7Z" fill="#f7f7f7" stroke="#dcdcdc" stroke-width=".8"/><path d="M30 1V12H41Z" fill="#e2e2e2"/><rect x="10" y="6.0" width="17" height=".9" fill="#cfcfcf"/><rect x="10" y="8.5" width="17" height=".9" fill="#cfcfcf"/><rect x="10" y="11.0" width="17" height=".9" fill="#cfcfcf"/><rect x="10" y="13.5" width="28" height=".9" fill="#cfcfcf"/><rect x="10" y="16.0" width="28" height=".9" fill="#cfcfcf"/><rect x="10" y="18.5" width="28" height=".9" fill="#cfcfcf"/><rect x="10" y="21.0" width="28" height=".9" fill="#cfcfcf"/><rect x="10" y="23.5" width="28" height=".9" fill="#cfcfcf"/><rect x="10" y="26.0" width="28" height=".9" fill="#cfcfcf"/><rect x="10" y="28.5" width="28" height=".9" fill="#cfcfcf"/><rect x="10" y="31.0" width="28" height=".9" fill="#cfcfcf"/><rect x="10" y="33.5" width="28" height=".9" fill="#cfcfcf"/><rect x="10" y="36.0" width="28" height=".9" fill="#cfcfcf"/><rect x="10" y="38.5" width="28" height=".9" fill="#cfcfcf"/><rect x="10" y="41.0" width="28" height=".9" fill="#cfcfcf"/><rect x="10" y="43.5" width="28" height=".9" fill="#cfcfcf"/></svg>
<div class="dl" style="left:123.5px;top:64px">Neues<br>Textdokument.txt</div>
<svg class="i" style="left:159px;top:111px" width="53" height="53"><rect x=".5" y=".5" width="52" height="52" fill="none" stroke="#34465e"/><path d="M25 4H42L45 2.6V17L42 19H25Z" fill="#000"/><rect x="25.5" y="3" width="16.5" height="15.5" fill="#e4e4e4"/><path d="M42 3L45 2V17L42 18.5Z" fill="#8c8c8c"/><rect x="27" y="6.9" width="13" height="9.4" fill="#0000e8"/><path d="M27 19H49L46 26H27Z" fill="#000"/><path d="M28 19.5H48L45.5 25H28Z" fill="#e8e8e8"/><rect x="36" y="22.5" width="6" height="1" fill="#222"/><path d="M7 27.5H24L27 26V42L24 43H7Z" fill="#000"/><rect x="7.5" y="27" width="16.5" height="15.5" fill="#e4e4e4"/><path d="M24 27L27 26V41L24 42.5Z" fill="#8c8c8c"/><rect x="9" y="30.7" width="13.2" height="9" fill="#0000e8"/><path d="M3 43H31L28 50H3Z" fill="#000"/><path d="M3.5 43.5H30L27.5 49H3.5Z" fill="#e8e8e8"/><rect x="18" y="46.5" width="6" height="1" fill="#222"/><path d="M37 10L25 21.5L33 21.5L18.5 31L21 25L14.5 35L26 26L20 26L30 21Z" fill="#f8f000" stroke="#000" stroke-width=".5"/><path d="M37 10.5L15 34.5" stroke="#f8f000" stroke-width="2"/></svg>
<div class="dl" style="left:123.5px;top:168px">putty.exe</div>
<svg class="i" style="left:161px;top:217px" width="48" height="48"><path d="M7 1H30L41 12V47H7Z" fill="#f7f7f7" stroke="#dcdcdc" stroke-width=".8"/><path d="M30 1V12H41Z" fill="#e2e2e2"/><circle cx="24" cy="26" r="11" fill="#c9c9c9"/><circle cx="24" cy="26" r="11" fill="none" stroke="#b8b8b8"/><path d="M24 15A11 11 0 0 1 35 26H24Z" fill="#dedede"/><circle cx="24" cy="26" r="3" fill="#f4f4f4"/><circle cx="24" cy="26" r="1.4" fill="#bbb"/></svg>
<div class="dl" style="left:123.5px;top:272px">BPI-R1_Debian_8_Do...</div>
<svg class="i" style="left:161px;top:341px" width="47" height="27"><rect width="47" height="27" fill="#072553"/><ellipse cx="30" cy="13" rx="15" ry="7" fill="#1580d8" opacity=".8" filter="url(#bl3)"/><rect x="35" y="7.5" width="7" height="5" fill="#7fd0fa" filter="url(#bl1)"/><rect x="35" y="13.5" width="7" height="5" fill="#7fd0fa" filter="url(#bl1)"/><rect x="1.5" y="1.5" width="2" height="2" fill="#8a9ab0"/><rect x="1.5" y="5" width="2" height="2" fill="#d06030"/><rect x="1.5" y="8.5" width="2" height="2" fill="#c8ccd8"/><rect x="1.5" y="12" width="2" height="2" fill="#38a8e0"/><rect x="1.5" y="15.5" width="2" height="2" fill="#e08a20"/><rect x="1.5" y="19" width="2" height="2" fill="#2a8a2a"/><rect x="1.5" y="22" width="2" height="1.6" fill="#c0c4c8"/><rect x="5.5" y="1.5" width="2" height="2" fill="#e8e8e8"/><rect x="5.5" y="5" width="2" height="2" fill="#3a4aa0"/><rect x="5.5" y="8.5" width="2" height="2" fill="#e8e8e8"/><rect x="0" y="24.5" width="47" height="2.5" fill="#0b0d12"/><rect x="1" y="25" width="12" height="1.5" fill="#3a3a3a"/><rect x="17" y="25" width="4" height="1.5" fill="#6a7a5a"/><ellipse cx="28" cy="13" rx="12" ry="4" fill="#2aa0f0" opacity=".7" filter="url(#bl3)"/></svg>
<div class="dl" style="left:123.5px;top:376px">domainjoin-1.png</div>
<svg class="i" style="left:161px;top:446px" width="47" height="27"><rect width="47" height="27" fill="#072553"/><ellipse cx="30" cy="13" rx="15" ry="7" fill="#1580d8" opacity=".8" filter="url(#bl3)"/><rect x="35" y="7.5" width="7" height="5" fill="#7fd0fa" filter="url(#bl1)"/><rect x="35" y="13.5" width="7" height="5" fill="#7fd0fa" filter="url(#bl1)"/><rect x="1.5" y="1.5" width="2" height="2" fill="#8a9ab0"/><rect x="1.5" y="5" width="2" height="2" fill="#d06030"/><rect x="1.5" y="8.5" width="2" height="2" fill="#c8ccd8"/><rect x="1.5" y="12" width="2" height="2" fill="#38a8e0"/><rect x="1.5" y="15.5" width="2" height="2" fill="#e08a20"/><rect x="1.5" y="19" width="2" height="2" fill="#2a8a2a"/><rect x="1.5" y="22" width="2" height="1.6" fill="#c0c4c8"/><rect x="5.5" y="1.5" width="2" height="2" fill="#e8e8e8"/><rect x="5.5" y="5" width="2" height="2" fill="#3a4aa0"/><rect x="5.5" y="8.5" width="2" height="2" fill="#e8e8e8"/><rect x="0" y="24.5" width="47" height="2.5" fill="#0b0d12"/><rect x="1" y="25" width="12" height="1.5" fill="#3a3a3a"/><rect x="17" y="25" width="4" height="1.5" fill="#6a7a5a"/><rect x="12" y="1.8" width="27" height="19" fill="#fdfdfd"/><rect x="12" y="1.8" width="27" height="1.2" fill="#e6e6e6"/><rect x="19" y="7" width="6" height="1" fill="#999"/><rect x="19" y="9.5" width="10" height=".8" fill="#9ab"/></svg>
<div class="dl" style="left:123.5px;top:480px">domainjoin-2.png</div>
<svg class="i" style="left:161px;top:549px" width="47" height="27"><rect width="47" height="27" fill="#072553"/><ellipse cx="30" cy="13" rx="15" ry="7" fill="#1580d8" opacity=".8" filter="url(#bl3)"/><rect x="35" y="7.5" width="7" height="5" fill="#7fd0fa" filter="url(#bl1)"/><rect x="35" y="13.5" width="7" height="5" fill="#7fd0fa" filter="url(#bl1)"/><rect x="1.5" y="1.5" width="2" height="2" fill="#8a9ab0"/><rect x="1.5" y="5" width="2" height="2" fill="#d06030"/><rect x="1.5" y="8.5" width="2" height="2" fill="#c8ccd8"/><rect x="1.5" y="12" width="2" height="2" fill="#38a8e0"/><rect x="1.5" y="15.5" width="2" height="2" fill="#e08a20"/><rect x="1.5" y="19" width="2" height="2" fill="#2a8a2a"/><rect x="1.5" y="22" width="2" height="1.6" fill="#c0c4c8"/><rect x="5.5" y="1.5" width="2" height="2" fill="#e8e8e8"/><rect x="5.5" y="5" width="2" height="2" fill="#3a4aa0"/><rect x="5.5" y="8.5" width="2" height="2" fill="#e8e8e8"/><rect x="0" y="24.5" width="47" height="2.5" fill="#0b0d12"/><rect x="1" y="25" width="12" height="1.5" fill="#3a3a3a"/><rect x="17" y="25" width="4" height="1.5" fill="#6a7a5a"/><rect x="11.4" y="2" width="27.6" height="21.6" fill="#fdfdfd"/><rect x="12" y="6" width="26" height=".8" fill="#ccc"/><rect x="32" y="9" width="8.3" height="6.8" fill="#eeeae6"/></svg>
<div class="dl" style="left:123.5px;top:584px">domainjoin-3.png</div>
<svg class="i" style="left:161px;top:654px" width="47" height="27"><rect width="47" height="27" fill="#072553"/><ellipse cx="30" cy="13" rx="15" ry="7" fill="#1580d8" opacity=".8" filter="url(#bl3)"/><rect x="35" y="7.5" width="7" height="5" fill="#7fd0fa" filter="url(#bl1)"/><rect x="35" y="13.5" width="7" height="5" fill="#7fd0fa" filter="url(#bl1)"/><rect x="1.5" y="1.5" width="2" height="2" fill="#8a9ab0"/><rect x="1.5" y="5" width="2" height="2" fill="#d06030"/><rect x="1.5" y="8.5" width="2" height="2" fill="#c8ccd8"/><rect x="1.5" y="12" width="2" height="2" fill="#38a8e0"/><rect x="1.5" y="15.5" width="2" height="2" fill="#e08a20"/><rect x="1.5" y="19" width="2" height="2" fill="#2a8a2a"/><rect x="1.5" y="22" width="2" height="1.6" fill="#c0c4c8"/><rect x="5.5" y="1.5" width="2" height="2" fill="#e8e8e8"/><rect x="5.5" y="5" width="2" height="2" fill="#3a4aa0"/><rect x="5.5" y="8.5" width="2" height="2" fill="#e8e8e8"/><rect x="0" y="24.5" width="47" height="2.5" fill="#0b0d12"/><rect x="1" y="25" width="12" height="1.5" fill="#3a3a3a"/><rect x="17" y="25" width="4" height="1.5" fill="#6a7a5a"/><rect x="7" y="1.5" width="37" height="20.5" fill="#fdfdfd"/><rect x="39" y="3" width="4.5" height="19" fill="#dde4ee"/><rect x="12.75" y="5.5" width="13" height="17" fill="#f4f4f4" stroke="#c8d0dc" stroke-width=".5"/><rect x="14.5" y="12" width="8" height="1" fill="#58a0e8"/></svg>
<div class="dl" style="left:123.5px;top:688px">domainjoin-4.png</div>
<svg class="i" style="left:285px;top:29px" width="47" height="27"><rect width="47" height="27" fill="#072553"/><ellipse cx="30" cy="13" rx="15" ry="7" fill="#1580d8" opacity=".8" filter="url(#bl3)"/><rect x="35" y="7.5" width="7" height="5" fill="#7fd0fa" filter="url(#bl1)"/><rect x="35" y="13.5" width="7" height="5" fill="#7fd0fa" filter="url(#bl1)"/><rect x="1.5" y="1.5" width="2" height="2" fill="#8a9ab0"/><rect x="1.5" y="5" width="2" height="2" fill="#d06030"/><rect x="1.5" y="8.5" width="2" height="2" fill="#c8ccd8"/><rect x="1.5" y="12" width="2" height="2" fill="#38a8e0"/><rect x="1.5" y="15.5" width="2" height="2" fill="#e08a20"/><rect x="1.5" y="19" width="2" height="2" fill="#2a8a2a"/><rect x="1.5" y="22" width="2" height="1.6" fill="#c0c4c8"/><rect x="5.5" y="1.5" width="2" height="2" fill="#e8e8e8"/><rect x="5.5" y="5" width="2" height="2" fill="#3a4aa0"/><rect x="5.5" y="8.5" width="2" height="2" fill="#e8e8e8"/><rect x="0" y="24.5" width="47" height="2.5" fill="#0b0d12"/><rect x="1" y="25" width="12" height="1.5" fill="#3a3a3a"/><rect x="17" y="25" width="4" height="1.5" fill="#6a7a5a"/><rect x="11.4" y="1.2" width="27.6" height="21.4" fill="#fdfdfd"/><rect x="13.5" y="8.2" width="13.8" height="16.4" fill="#f6f6f6" stroke="#c8d0dc" stroke-width=".5"/><rect x="36" y="5" width="3" height="2" fill="#3a7ae0"/></svg>
<div class="dl" style="left:247.5px;top:64px">domainjoin-5.png</div>
<div class="a" style="left:345px;top:92px;width:798px;height:558px;background:#fff;border:1px solid #1883d7;box-shadow:0 0 14px rgba(0,0,0,.45)"></div>
<svg class="i" style="left:354px;top:101px" width="16" height="12"><rect x=".5" y=".5" width="15" height="11" fill="#8ccdf5" stroke="#1a5fa8"/><circle cx="5" cy="5" r="3" fill="#2a86d8"/><path d="M5 5V2A3 3 0 0 1 8 5Z" fill="#f5a623"/><rect x="9" y="3" width="4" height="1.5" fill="#fff"/><rect x="9" y="6" width="4" height="1.5" fill="#fff"/><rect x="2" y="9" width="6" height="1" fill="#f5a623"/><rect x="9" y="9" width="5" height="1" fill="#2a86d8"/></svg>
<div class="t" style="left:375px;top:97px;font-size:11.7px;color:#000">Alle Systemsteuerungselemente</div>
<div class="a" style="left:1023px;top:107px;width:10px;height:1px;background:#000"></div>
<div class="a" style="left:1068px;top:102px;width:10px;height:10px;border:1px solid #000"></div>
<svg class="i" style="left:1114px;top:102px" width="10" height="10"><path d="M0 0L10 10M10 0L0 10" stroke="#000" stroke-width="1.1"/></svg>

<svg class="i" style="left:359px;top:134px" width="12" height="11"><path d="M6 1L1.3 5.5L6 10M1.5 5.5H12" stroke="#6d6d6d" stroke-width="1.6" fill="none"/></svg>
<svg class="i" style="left:389px;top:134px" width="12" height="11"><path d="M6 1L10.7 5.5L6 10M10.5 5.5H0" stroke="#cfcfcf" stroke-width="1.6" fill="none"/></svg>
<svg class="i" style="left:415px;top:137px" width="7" height="5"><path d="M0.7 0.7L3.5 3.5L6.3 0.7" stroke="#6d6d6d" stroke-width="1.3" fill="none"/></svg>
<svg class="i" style="left:433px;top:134px" width="12" height="12"><path d="M1 6L6 1L11 6M6 1.5V12" stroke="#6d6d6d" stroke-width="1.6" fill="none"/></svg>

<div class="a" style="left:452px;top:129px;width:464px;height:22px;border:1px solid #d9d9d9"></div>
<div class="a" style="left:895px;top:130px;width:1px;height:20px;background:#d9d9d9"></div>
<svg class="i" style="left:455px;top:133px" width="16" height="12"><rect x=".5" y=".5" width="15" height="11" fill="#8ccdf5" stroke="#1a5fa8"/><circle cx="5" cy="5" r="3" fill="#2a86d8"/><path d="M5 5V2A3 3 0 0 1 8 5Z" fill="#f5a623"/><rect x="9" y="3" width="4" height="1.5" fill="#fff"/><rect x="9" y="6" width="4" height="1.5" fill="#fff"/><rect x="2" y="9" width="6" height="1" fill="#f5a623"/><rect x="9" y="9" width="5" height="1" fill="#2a86d8"/></svg>
<svg class="i" style="left:478px;top:136px" width="6" height="8"><path d="M1 1L4 4L1 7" stroke="#808080" stroke-width="1.3" fill="none"/></svg>
<div class="t" style="left:492px;top:127px;font-size:11.7px;color:#000">Systemsteuerung</div>
<svg class="i" style="left:592px;top:136px" width="6" height="8"><path d="M1 1L4 4L1 7" stroke="#808080" stroke-width="1.3" fill="none"/></svg>
<div class="t" style="left:606px;top:127px;font-size:11.7px;color:#000">Alle Systemsteuerungselemente</div>
<svg class="i" style="left:783px;top:136px" width="6" height="8"><path d="M1 1L4 4L1 7" stroke="#808080" stroke-width="1.3" fill="none"/></svg>
<svg class="i" style="left:881px;top:138px" width="10" height="7"><path d="M1 1L5 5L9 1" stroke="#6d6d6d" stroke-width="1.6" fill="none"/></svg>
<svg class="i" style="left:900px;top:134px" width="12" height="12"><path d="M9.2 4.2A4.3 4.3 0 1 1 5.5 2" stroke="#6d6d6d" stroke-width="1.5" fill="none"/><path d="M4.5 0L7.5 2L4.5 4.2Z" fill="#6d6d6d"/></svg>
<div class="a" style="left:928px;top:129px;width:202px;height:22px;border:1px solid #d9d9d9"></div>
<div class="t" style="left:937px;top:127.5px;font-size:11.95px;color:#6d6d6d">Systemsteuerung durchsuchen</div>
<svg class="i" style="left:1109px;top:135px" width="12" height="12"><circle cx="7.3" cy="4.7" r="3.4" stroke="#6d6d6d" stroke-width="1.5" fill="none"/><path d="M5 7L1 11" stroke="#6d6d6d" stroke-width="1.7"/></svg>
<div class="t" style="left:363px;top:178px;font-size:15.3px;color:#003399">Einstellungen des Computers anpassen</div>
<div class="t" style="left:905px;top:179px;font-size:11.6px;color:#4a4a4a">Anzeige:</div>
<div class="t" style="left:963px;top:179px;font-size:11.75px;color:#0066cc">Große Symbole</div>
<svg class="i" style="left:1050px;top:187px" width="7" height="4"><path d="M0 0H7L3.5 4Z" fill="#0066cc"/></svg>
<div class="a" style="left:346px;top:218px;width:795px;height:1px;background:#dde8f3"></div>
<div class="a" style="left:1126px;top:219px;width:16px;height:430px;background:#f0f0f0"></div>
<div class="a" style="left:1126px;top:412px;width:15px;height:220px;background:#cdcdcd"></div>
<svg class="i" style="left:1129px;top:224px" width="9" height="7"><path d="M1 5.5L4.5 2L8 5.5" stroke="#505050" stroke-width="1.8" fill="none"/></svg>
<svg class="i" style="left:1129px;top:637px" width="9" height="7"><path d="M1 1.5L4.5 5L8 1.5" stroke="#505050" stroke-width="1.8" fill="none"/></svg>
<div class="a" style="left:346px;top:219px;width:780px;height:430px;overflow:hidden">
<div class="a" style="left:265px;top:230px;width:243px;height:50px;background:#e5f3ff"></div>
<svg class="i" style="left:19px;top:-10px" width="32" height="32" viewBox="0 0 32 32"><circle cx="12.5" cy="16.5" r="12.5" fill="url(#globe)"/><path d="M5 8C7 10 9 12 8 15C6 17 3 16 1 18" stroke="#3bbd3b" stroke-width="3" fill="none"/><path d="M9 19C12 18 14 20 13 24C12 27 10 28 9 26Z" fill="#2fb33a"/><rect x="9.5" y="12.5" width="21" height="18" fill="#f6f6f6" stroke="#7b7b7b"/><rect x="10" y="13" width="20" height="2" fill="#d8dce2"/><rect x="25" y="13.3" width="1.2" height="1.4" fill="#4a6a9a"/><rect x="27" y="13.3" width="1.2" height="1.4" fill="#4a6a9a"/><path d="M12 20L14 22.5L18 17" stroke="#1e78c8" stroke-width="1.8" fill="none"/><path d="M12 25L14 27.5L18 22" stroke="#1e78c8" stroke-width="1.8" fill="none"/><rect x="19" y="19" width="8" height="1.3" fill="#6a6290"/><rect x="19" y="24" width="8" height="1.3" fill="#6a6290"/></svg>
<div class="it" style="left:62px;top:-5px;">Internetoptionen</div>
<svg class="i" style="left:269px;top:-10px" width="32" height="32" viewBox="0 0 32 32"><path d="M3 20C3 15 14 12 22 12.5C28 13 31 16 30 21C29 25 24 27.5 16 27.5C8 27.5 3 24.5 3 20Z" fill="#3b4550"/><path d="M3 19C4 15 13 12.5 21 12.5C27 13 29.5 15.5 28 18.5C25 22 14 24.5 8 23.5C4.5 23 2.5 21 3 19Z" fill="#a4b4c6"/><path d="M3 21C6 24 18 24 28 18" stroke="#d8dde2" stroke-width="1" fill="none"/><path d="M11 18.5C13 16 19 14 24 13.5" stroke="#222" stroke-width="2.4" fill="none" stroke-linecap="round"/><circle cx="24" cy="13.4" r=".9" fill="#41d041"/></svg>
<div class="it" style="left:312px;top:-5px;">Maus</div>
<svg class="i" style="left:519px;top:-10px" width="32" height="32" viewBox="0 0 32 32"><path d="M4 6L15 7.5L15 21.5L4 20Z" fill="url(#scr)" stroke="#e0d8b8" stroke-width=".7"/><path d="M16 8L29 9.5L29 24.5L16 23Z" fill="url(#scr)" stroke="#e0d8b8" stroke-width=".7"/><path d="M1 23.5L11 25L25 28L26 31L14 29L1 26.5Z" fill="#c8ccd2"/><path d="M6 23L13 22L16 24L22 23.5L23 27L12 26.5Z" fill="#21c44a"/></svg>
<div class="it" style="left:562px;top:-15px;">Netzwerk- und<br>Freigabecenter</div>
<svg class="i" style="left:19px;top:40px" width="32" height="32" viewBox="0 0 32 32"><rect x="0.5" y="3.5" width="29" height="24" fill="#f6f6f6" stroke="#7b7b7b"/><rect x="1" y="4" width="28" height="2" fill="#d8dce2"/><rect x="24" y="4.3" width="1.2" height="1.4" fill="#4a6a9a"/><rect x="26" y="4.3" width="1.2" height="1.4" fill="#4a6a9a"/><path d="M14 8L29 10V24L14 21Z" fill="url(#scr)" stroke="#d6d0b8" stroke-width=".7"/><path d="M10 17H14V22L20 24L12 27H10Z" fill="#d0d2d6"/><rect x="7" y="14.5" width="3" height="12.5" fill="#c6c8cf" stroke="#888" stroke-width=".5"/><circle cx="8.5" cy="17" r="1" fill="#35d535"/></svg>
<div class="it" style="left:62px;top:45px;">Problembehandlung</div>
<svg class="i" style="left:269px;top:40px" width="32" height="32" viewBox="0 0 32 32"><path d="M8 4L12 2.5L28 8.5L27 12L9 8Z" fill="#bdbdbd"/><path d="M9 8L27 12L27 28.5L9 25Z" fill="#ececec"/><path d="M27 12L28 10V28L27 28.5Z" fill="#9a9a9a"/><path d="M11 10.5L19 12.5L18 20L11 17Z" fill="#a8cfb0"/><path d="M21 12A5 6 0 0 1 21 24Z" fill="#f3a640"/><path d="M5 11.5L19 15L19 30L5 26.5Z" fill="#2f3d50"/><circle cx="12" cy="21" r="5.8" fill="#dcdfe4"/><circle cx="12" cy="21" r="1.6" fill="#7c8a98"/></svg>
<div class="it" style="left:312px;top:45px;">Programme und Features</div>
<svg class="i" style="left:519px;top:40px" width="32" height="32" viewBox="0 0 32 32"><circle cx="18.4" cy="11.6" r="11.3" fill="url(#globe)"/><path d="M9 6C12 7 13 10 11 13M28 9C27 12 27 15 28.5 17" stroke="#3bc23b" stroke-width="2.6" fill="none"/><circle cx="10.1" cy="21.5" r="9.3" fill="#eceef2" stroke="#a6a8ae" stroke-width="1"/><path d="M10.1 15V22H15" stroke="#36404a" stroke-width="1.1" fill="none"/></svg>
<div class="it" style="left:562px;top:45px;">Region</div>
<svg class="i" style="left:19px;top:90px" width="32" height="32" viewBox="0 0 32 32"><rect x=".5" y="7.5" width="14" height="18" fill="#f3f3f3" stroke="#8a8e96"/><rect x="1" y="8" width="13" height="3" fill="#cdd3db"/><path d="M7 2L30 4L29 19L6 17Z" fill="url(#scr)" stroke="#ddd6b8" stroke-width=".8"/><path d="M14 18L20 19L22 25L12 25Z" fill="#c9cbd0"/><circle cx="24" cy="24" r="7.3" fill="#f2f2f2" stroke="#8a8a8a" stroke-width="1"/><path d="M20.5 22.5L23 24.5L20.5 26.5M27.5 21.5L25 23.5L27.5 25.5" stroke="#1f9a2a" stroke-width="1.4" fill="none"/></svg>
<div class="it" style="left:62px;top:85px;">RemoteApp- und<br>Desktopverbindungen</div>
<svg class="i" style="left:269px;top:90px" width="32" height="32" viewBox="0 0 32 32"><path d="M5 4H21V27H5Z" fill="url(#fold)"/><path d="M5 4L10 7.5V30.5L5 27Z" fill="#fbe8a6"/><text x="13" y="29" font-family="Liberation Serif" font-size="19" font-weight="bold" fill="#1775d8">A</text></svg>
<div class="it" style="left:312px;top:95px;">Schriftarten</div>
<svg class="i" style="left:519px;top:90px" width="32" height="32" viewBox="0 0 32 32"><path d="M2 3.5L12 31" stroke="#8e8e8e" stroke-width="2.4"/><path d="M2 3.5L12 31" stroke="#e0e0e0" stroke-width=".8" stroke-dasharray="1 1"/><circle cx="2.3" cy="3.6" r="2" fill="#8a8a8a"/><path d="M3 7C10 8 14 4 20 3C23 3 25 7 27 9C29 11 31 11 32 10.5C31 14 30 18 27 19C25 19.5 23 16 21 15.5C16 15 13 20 8 20.5Z" fill="url(#flag)"/></svg>
<div class="it" style="left:562px;top:95px;">Sicherheit und Wartung</div>
<svg class="i" style="left:19px;top:140px" width="32" height="32" viewBox="0 0 32 32"><path d="M1 24L13 19L24 22L24 28L12 31.5L1 28Z" fill="url(#metal)" stroke="#8b8e96" stroke-width=".6"/><path d="M2 24.5L12 27.5L12 31L2 28Z" fill="#d8d8e4"/><circle cx="19" cy="29" r="1.1" fill="#35d535"/><circle cx="23.5" cy="15.5" r="8.5" fill="#dcdde2" stroke="#9a9aa2" stroke-width=".6"/><path d="M23.5 15.5L31 17A8.5 8.5 0 0 1 28 22Z" fill="#e6c9e6"/><circle cx="23.5" cy="15.5" r="2" fill="#fff" stroke="#999" stroke-width=".5"/><path d="M3 1C8 2 11 6 10 12L13 11L8 18L3 12L6 12C7 8 6 4 3 1Z" fill="#3fd12a" stroke="#2a9a1a" stroke-width=".5"/><path d="M17 20C14 14 14 9 16 5L13 6L18 1L21 7L18.5 6C17 10 17.5 15 21 19Z" fill="#3fd12a" stroke="#2a9a1a" stroke-width=".5"/></svg>
<div class="a" style="left:62px;top:130px;width:230px;height:50px;overflow:hidden"><div class="it" style="left:0;top:0">Sichern und<br>Wiederherstellen<br>(Windows 7)</div></div>
<svg class="i" style="left:269px;top:140px" width="32" height="32" viewBox="0 0 32 32"><ellipse cx="19" cy="15.5" rx="8" ry="10.5" fill="#3d3d3d"/><ellipse cx="12.5" cy="15.8" rx="8.8" ry="13.5" fill="#f5f5f5" stroke="#6a6a6a" stroke-width="1"/><ellipse cx="13" cy="16" rx="6.8" ry="11.2" fill="#bcc9d3"/><ellipse cx="15.5" cy="14.5" rx="2.6" ry="3.6" fill="#cfe6f5" stroke="#8a9aa6" stroke-width=".6"/></svg>
<div class="it" style="left:312px;top:145px;">Sound</div>
<svg class="i" style="left:519px;top:140px" width="32" height="32" viewBox="0 0 32 32"><path d="M1 21L14 17L31 20L31 26L19 29.5L1 26Z" fill="#cfd0d4" stroke="#8c8e94" stroke-width=".6"/><path d="M1.5 21.5L19 24.5L19 29L1.5 26Z" fill="#e4e2ee"/><path d="M19 24.5L31 21V26L19 29.5Z" fill="#b4b6bc"/><rect x="19.5" y="25" width="2" height="3.5" fill="#33cc33"/><path d="M1 13L14 9L31 12L31 18L19 21.5L1 18Z" fill="#cfd0d4" stroke="#8c8e94" stroke-width=".6"/><path d="M1.5 13.5L19 16.5L19 21L1.5 18Z" fill="#e4e2ee"/><path d="M19 16.5L31 13V18L19 21.5Z" fill="#b4b6bc"/><rect x="19.5" y="17" width="2" height="3.5" fill="#33cc33"/><path d="M1 5L14 1L31 4L31 10L19 13.5L1 10Z" fill="#cfd0d4" stroke="#8c8e94" stroke-width=".6"/><path d="M1.5 5.5L19 8.5L19 13L1.5 10Z" fill="#e4e2ee"/><path d="M19 8.5L31 5V10L19 13.5Z" fill="#b4b6bc"/><rect x="19.5" y="9" width="2" height="3.5" fill="#33cc33"/></svg>
<div class="it" style="left:562px;top:145px;">Speicherplätze</div>
<svg class="i" style="left:19px;top:190px" width="32" height="32" viewBox="0 0 32 32"><circle cx="10" cy="11" r="10" fill="url(#globe)"/><path d="M2 6C5 8 6 11 4 14M8 2C10 4 13 5 12 8M5 17C8 16 10 18 9 20" stroke="#3bc23b" stroke-width="2.2" fill="none"/><text x="1.5" y="30.5" font-family="Liberation Sans" font-size="19" fill="#0b4fd8">A</text><path d="M19 4.5H30.5V7M19 4.5V7M24 2L25 4M20.5 8.5H27L23.5 12V20H20.5M19 13H30" stroke="#0b4fd8" stroke-width="1.5" fill="none"/></svg>
<div class="it" style="left:62px;top:195px;">Sprache</div>
<svg class="i" style="left:269px;top:190px" width="32" height="32" viewBox="0 0 32 32"><rect x="11" y=".5" width="11" height="23.5" rx="5.5" fill="#e4e5ef" stroke="#8d8f9c" stroke-width=".8"/><path d="M11.5 9H21.5M11.5 11H21.5M11.5 13H21.5M11.5 15H21.5" stroke="#7d7f8c" stroke-width=".8"/><path d="M8 12.5V22L15 27.5H18L25 22V12.5" stroke="#6d6f7a" stroke-width="1.3" fill="none"/><path d="M15 27.5V30.5H18V27.5" fill="#d0d2da" stroke="#777" stroke-width=".6"/></svg>
<div class="it" style="left:312px;top:195px;">Spracherkennung</div>
<svg class="i" style="left:519px;top:190px" width="32" height="32" viewBox="0 0 32 32"><rect x="2.5" y="5.5" width="27" height="20.5" fill="#f4f4f4" stroke="#7e7e7e"/><rect x="3" y="6" width="26" height="1.5" fill="#808080"/><path d="M4 10H7M4 13H7M4 16H7M4 19H7" stroke="#8a8a8a" stroke-width="1"/><path d="M20.5 10H27M20.5 12H27" stroke="#8a8a8a" stroke-width="1"/><rect x="9" y="9" width="11" height="14" fill="#1a7be0"/><circle cx="22.9" cy="22.8" r="8.3" fill="#fff"/><circle cx="22.9" cy="22.8" r="7.6" fill="#129b12" stroke="#0b6e0b" stroke-width=".6"/><path d="M18.8 23L21.8 26L27 20" stroke="#fff" stroke-width="1.7" fill="none"/></svg>
<div class="it" style="left:562px;top:195px;">Standardprogramme</div>
<svg class="i" style="left:19px;top:240px" width="32" height="32" viewBox="0 0 32 32"><circle cx="16" cy="16" r="15" fill="#4cb84c"/><circle cx="16" cy="16" r="14" fill="#5cc25a"/><path d="M8.5 17A7.5 7.5 0 0 0 22 21" stroke="#f3e88a" stroke-width="3" fill="none"/><path d="M23.5 14A7.5 7.5 0 0 0 11 10" stroke="#eef3a0" stroke-width="3" fill="none"/><path d="M3 16L8 10L13 16Z" fill="#fbe06a"/><path d="M19 16L29 16L24 22Z" fill="#fbe06a"/></svg>
<div class="it" style="left:62px;top:245px;">Synchronisierungscenter</div>
<svg class="i" style="left:269px;top:240px" width="32" height="32" viewBox="0 0 32 32"><path d="M10 3L30 9.2V22.5L10 16Z" fill="url(#lblue)" stroke="#3a4048" stroke-width=".9"/><path d="M16.5 11.5L19 14L23.5 9.5" stroke="#fff" stroke-width="1.3" fill="none"/><path d="M19 21L26 23L27 26.5L18 25Z" fill="#c8ccd2"/><path d="M.5 25L8 22.5L24 26.5L16 29.5Z" fill="#d4d7dc"/><path d="M3.5 24.8L10 23M7 26L13.5 24.2M10.5 27.2L17 25.4M14 28.3L20 26.6" stroke="#a8acb2" stroke-width=".7" stroke-dasharray="1.3 .7"/></svg>
<div class="it" style="left:312px;top:245px;color:#17a317;text-decoration:underline;text-underline-offset:2px">System</div>
<svg class="i" style="left:519px;top:240px" width="32" height="32" viewBox="0 0 32 32"><rect x=".5" y=".5" width="13.5" height="20" fill="#f5f5f5" stroke="#7a7a7a"/><rect x="11.5" y="1" width="2" height="1" fill="#e44"/><path d="M2.5 5L4 6.5L7.5 3M2.5 10L4 11.5L7.5 8" stroke="#1f88d8" stroke-width="1.4" fill="none"/><rect x="2.5" y="14.5" width="3" height="3" fill="none" stroke="#aaa" stroke-width=".7"/><path d="M9 6H11.5M9 11H11.5M9 16H11.5" stroke="#aaa" stroke-width=".7"/><rect x="0" y="22.5" width="32" height="8.5" fill="url(#tbar)"/><rect x="18" y="25.5" width="2.2" height="2.2" fill="#b0b8c8"/><rect x="22.5" y="25.5" width="2.2" height="2.2" fill="#b0b8c8"/><rect x="27" y="25.5" width="2.2" height="2.2" fill="#b0b8c8"/></svg>
<div class="it" style="left:562px;top:245px;">Taskleiste und Navigation</div>
<svg class="i" style="left:19px;top:290px" width="32" height="32" viewBox="0 0 32 32"><path d="M1.5 19.5L12 16L31.5 22.5L21 26.5Z" fill="#c4cad2"/><path d="M1.5 19.5L21 26.5L21 27.5L1.5 20.5Z" fill="#30373f"/><path d="M21 26.5L31.5 22.5V23.5L21 27.5Z" fill="#505860"/><path d="M6 19L15 17M9 21L19 18.5M13 22.5L23 20M17 24L27 21.5" stroke="#9aa2ac" stroke-width=".7" stroke-dasharray="1.5 .8"/></svg>
<div class="it" style="left:62px;top:295px;">Tastatur</div>
<svg class="i" style="left:269px;top:290px" width="32" height="32" viewBox="0 0 32 32"><path d="M1 21L15 17L30 20.5L30 24L17.5 28.5L1.5 25Z" fill="#9ea2a8"/><path d="M1.3 21.3L17.4 25V28.3L1.5 24.8Z" fill="#d8dadd"/><path d="M17.4 25L29.8 20.7V23.8L17.4 28.3Z" fill="#8a8e94"/><path d="M4.4 23.3L13.7 25.4V26.9L4.4 24.8Z" fill="#3aa0e0"/><path d="M5.9 20L13.2 7.5L26.3 9L20 22.6Z" fill="#d6d9de" stroke="#8d9096" stroke-width=".6"/><path d="M13.8 8.2L24.2 9L23.1 11.6L13 11.1Z" fill="#4a9ee8"/><path d="M12 14l1.5 .2M15.5 14.5l1.5 .2M19 15l1.5 .2M11 16.5l1.5 .2M14.5 17l1.5 .2M18 17.5l1.5 .2M10 19l1.5 .2M13.5 19.5l1.5 .2M17 20l1.5 .2" stroke="#6a7888" stroke-width="1.1"/><path d="M2 18.5C3 13 7 8 12.5 5.5L15.3 6C11 9 7.5 14 6 19.5Z" fill="#e6e8ea" stroke="#7d8086" stroke-width=".7"/><path d="M6.5 18L11.5 9" stroke="#2a2e34" stroke-width="1"/></svg>
<div class="it" style="left:312px;top:295px;">Telefon und Modem</div>
<svg class="i" style="left:519px;top:290px" width="32" height="32" viewBox="0 0 32 32"><rect x="10.5" y="6.5" width="21" height="24" fill="#f2f2f2" stroke="#8a8a8a"/><rect x="11" y="7" width="20" height="2" fill="#c8ccd2"/><path d="M14 12H28M14 16H28M14 20H28" stroke="#c0c0c0" stroke-width="1"/></svg>
<div class="it" style="left:562px;top:295px;">Verwaltung</div>
<svg class="i" style="left:19px;top:340px" width="32" height="32" viewBox="0 0 32 32"><path d="M10 3L31 8.5V23L10 15Z" fill="url(#lblue)" stroke="#6a6a70" stroke-width=".6"/><path d="M20 19L27 21L28 24L22 25L19 24Z" fill="#d6dde4"/><circle cx="12.6" cy="21.9" r="6.5" fill="#e8e9ec" stroke="#9a9ca2" stroke-width="1"/><path d="M12.6 17.5V22L16 23" stroke="#333" stroke-width="1" fill="none"/><path d="M13 14C8 14 5 17 4.5 20L1.5 20L6 26L10 20L7.5 20C8 18 10 16 13 16Z" fill="#25c225"/></svg>
<div class="it" style="left:62px;top:345px;">Wiederherstellung</div>
<svg class="i" style="left:269px;top:340px" width="32" height="32" viewBox="0 0 32 32"><g stroke="#2e3034" stroke-width=".7"><rect x="1" y="4" width="8" height="6" fill="#c4c6cc"/><rect x="11" y="5" width="8" height="6" fill="#c8cad0"/><rect x="21" y="6.5" width="8" height="6" fill="#c4c6cc"/><rect x="1" y="10" width="4" height="5" fill="#a9ae94"/><rect x="5" y="10" width="8" height="5" fill="#c2c4ca"/><rect x="13" y="11" width="10" height="5" fill="#c6c8ce"/><rect x="23" y="12.5" width="6" height="5" fill="#a9ae94"/><rect x="1" y="15" width="6" height="5" fill="#c0c2c8"/><rect x="7" y="15.5" width="6" height="5" fill="#c6c8ce"/><rect x="13" y="16" width="8" height="5" fill="#a4a88e"/><rect x="21" y="17.5" width="8" height="5" fill="#c8cad0"/><rect x="1" y="20" width="8" height="5" fill="#a9ae94"/><rect x="9" y="20.5" width="5" height="5" fill="#c2c4ca"/><rect x="14" y="21" width="8" height="5" fill="#b0b2b8"/><rect x="22" y="22.5" width="7" height="5" fill="#c6c8ce"/></g></svg>
<div class="it" style="left:312px;top:345px;">Windows To Go</div>
<svg class="i" style="left:519px;top:340px" width="32" height="32" viewBox="0 0 32 32"><circle cx="22" cy="14" r="9" fill="url(#globe)"/><path d="M27 9C29 11 29 14 28 17" stroke="#3bc23b" stroke-width="2.5" fill="none"/><path d="M1 22L22 25.5L22 31L1 27.5Z" fill="#7a2e22"/><path d="M22 25.5L25 23V29L22 31Z" fill="#5a1f18"/><path d="M4 24V28M9 25V29M14 26V30M19 26V30M1 25L22 28.5" stroke="#a8503c" stroke-width=".6"/></svg>
<div class="it" style="left:562px;top:345px;">Windows-Firewall</div>
<svg class="i" style="left:19px;top:390px" width="32" height="32" viewBox="0 0 32 32"><rect x="1.5" y="1.5" width="23" height="19" fill="#f6f6f6" stroke="#7b7b7b"/><rect x="2" y="2" width="22" height="2" fill="#d8dce2"/><rect x="19" y="2.3" width="1.2" height="1.4" fill="#4a6a9a"/><rect x="21" y="2.3" width="1.2" height="1.4" fill="#4a6a9a"/><path d="M5 9L7 11.5L11 6" stroke="#1e78c8" stroke-width="1.8" fill="none"/><path d="M5 13L7 15.5L11 10" stroke="#1e78c8" stroke-width="1.8" fill="none"/><path d="M5 17L7 19.5L11 14" stroke="#1e78c8" stroke-width="1.8" fill="none"/><rect x="12.5" y="7.5" width="8" height="1.3" fill="#6a6290"/><rect x="12.5" y="11.5" width="3" height="1.3" fill="#6a6290"/><rect x="12.5" y="15.5" width="2" height="1.3" fill="#6a6290"/><path d="M14 9.5L31 10.5L30 23L13 21.5Z" fill="url(#scr)" stroke="#8a8a8a" stroke-width=".7"/><path d="M13 22L30 23.5L27 31.5L5 27Z" fill="#b9bcc4"/><path d="M12 23.5L27 25L25 29L8 26.5Z" fill="#4a4e58"/></svg>
<div class="it" style="left:62px;top:395px;">Windows-Mobilitätscenter</div>
</div>
<div class="a" style="left:681px;top:503px;width:207px;height:80px;background:#fff;border:1px solid #767676;box-shadow:3px 3px 3px rgba(0,0,0,.35)"></div>
<div class="a" style="left:687px;top:506px;font-size:11.8px;line-height:14.85px;color:#3a3a3a;white-space:nowrap">System<br>Zeigt Informationen über den<br>Computer an und ändert<br>Einstellungen für Hardware, Leistung<br>und Remoteverbindungen.</div>
<div class="a" style="left:0;top:728px;width:1366px;height:40px;background:#020408"></div>
<svg class="i" style="left:16px;top:740px" width="17" height="17"><path d="M0 2.3L7 1.3V7.6H0Z M8 1.15L16.5 0V7.6H8Z M0 8.6H7V14.9L0 13.9Z M8 8.6H16.5V16.2L8 15.05Z" fill="#fff"/></svg>
<div class="a" style="left:48px;top:728px;width:344px;height:40px;background:#363636"></div>
<div class="t" style="left:59.5px;top:739px;font-size:14.75px;color:#a8a8a8">Web und Windows durchsuchen</div>
<svg class="i" style="left:406px;top:741px" width="21" height="15"><path d="M3.5 2.5H1V12.5H3.5M17.5 2.5H20V12.5H17.5" stroke="#fff" stroke-width="1" fill="none"/><rect x="5.5" y=".5" width="10" height="14" stroke="#fff" stroke-width="1.1" fill="none"/></svg>
<svg class="i" style="left:456px;top:737px" width="21" height="22"><path d="M20.5 12.5H6.2C6.5 16.5 9.5 18.8 13 18.8C15.8 18.8 18 17.8 20 16.5V20.2C17.8 21.4 15.2 22 12.5 22C5.5 22 1.2 17.5 1.2 11.5C1.2 5 6 0 12 0C17.5 0 21 4 21 10V12.5ZM6.3 9H15.8C15.6 5.8 13.8 4 11.2 4C8.5 4 6.8 6 6.3 9Z" fill="#1e7fd8"/><path d="M1.2 11.5C1.8 5.5 6 2 10.5 2.3C6 3.5 3.5 7 3 11Z" fill="#1e7fd8"/></svg>
<svg class="i" style="left:503px;top:738px" width="23" height="19"><path d="M0 1H8L10 3H23V19H0Z" fill="#e8c45c"/><path d="M0 5H23V19H0Z" fill="#f5d97a"/><rect x="1" y="2" width="6" height="1.5" fill="#fff" opacity=".8"/><path d="M5 11H18V19H14.5V14.5H8.5V19H5Z" fill="#1e9be8"/></svg>
<svg class="i" style="left:552px;top:736px" width="23" height="24"><path d="M7 7V4A4.5 4.5 0 0 1 16 4V7" stroke="#fff" stroke-width="1.6" fill="none"/><path d="M1.5 6.5H21.5V23.5L1.5 21.5Z" fill="#fff"/><path d="M6 10.5H11V15H6ZM12 10.5H17V15H12ZM6 16H11V20H6ZM12 16H17V20.5H12Z" fill="#000"/></svg>
<svg class="i" style="left:601px;top:736px" width="25" height="24"><path d="M12 5C5 5 0 9 0 14C0 19 4 21 8 20C10 19.5 10 18 12 18C15 18 16 20 19 19C23 17.5 23 13 22 10C20.5 6.5 17 5 12 5Z" fill="#bfd9ee" stroke="#7aa3c4" stroke-width=".6"/><circle cx="6" cy="11" r="1.8" fill="#e84a3c"/><circle cx="11" cy="8.5" r="1.8" fill="#f0b23c"/><circle cx="4.5" cy="15" r="1.8" fill="#4caf50"/><circle cx="10" cy="14.5" r="2.2" fill="#4a6f8f"/><path d="M24 0L15 15L13.5 20L17 16.5L25 1.5Z" fill="#e88a2c"/><path d="M22.5 1L25 2.5L23 6L20.5 4.5Z" fill="#c0c0c0"/></svg>
<div class="a" style="left:638px;top:728px;width:48px;height:40px;background:#323437"></div>
<div class="a" style="left:593px;top:766px;width:40px;height:2px;background:#76b9ed"></div>
<div class="a" style="left:638px;top:766px;width:48px;height:2px;background:#76b9ed"></div>
<svg class="i" style="left:651px;top:740px" width="22" height="17"><rect x=".5" y=".5" width="21" height="16" fill="#8fd0f7" stroke="#2b7fc4"/><circle cx="6.5" cy="7" r="4" fill="#2a86d8"/><path d="M6.5 7V3A4 4 0 0 1 10.5 7Z" fill="#f5a623"/><circle cx="6.5" cy="7" r="1.6" fill="#8fd0f7"/><rect x="13" y="3" width="6" height="2" fill="#fff"/><rect x="13" y="6.5" width="6" height="2" fill="#fff"/><rect x="13" y="10" width="6" height="1.5" fill="#2a86d8"/><rect x="2.5" y="13" width="8" height="1.5" fill="#f5a623"/><rect x="11" y="13" width="8" height="1.5" fill="#2a86d8"/></svg>
<svg class="i" style="left:1196px;top:744px" width="13" height="8"><path d="M.7 7.3L6.5 1.3L12.3 7.3" stroke="#fff" stroke-width="1.2" fill="none"/></svg>
<svg class="i" style="left:1218px;top:741px" width="17" height="15"><rect x="3.5" y=".5" width="13" height="10" stroke="#fff" fill="none"/><rect x=".5" y="1.5" width="4" height="4" stroke="#fff" fill="#020408"/><path d="M2.5 5.5V14.5M2.5 13H7" stroke="#fff" fill="none"/><path d="M11 6.5L16.5 15H5.5Z" fill="#f2c418"/><rect x="10.5" y="9" width="1" height="3" fill="#000"/><rect x="10.5" y="13" width="1" height="1" fill="#000"/></svg>
<svg class="i" style="left:1242px;top:742px" width="17" height="12"><path d="M2 0V3M5 0V3M.5 3H6.5V6A3 3 0 0 1 .5 6Z M3.5 8V11" stroke="#fff" fill="none"/><rect x="6.5" y="3.5" width="9" height="7" stroke="#fff" fill="none"/><rect x="8" y="5" width="6" height="4" fill="#fff"/><rect x="15.5" y="5.5" width="1.5" height="3" fill="#fff"/></svg>
<svg class="i" style="left:1266px;top:740px" width="17" height="17"><path d="M0 0H16V12H10L8 14.5L6 12H0Z" fill="#fff"/><path d="M3 3H13M3 6H13M3 9H10" stroke="#000" stroke-width="1.1"/></svg>
<div class="a" style="left:1295.4px;top:729px;width:56px;text-align:center;font-size:11.6px;line-height:17px;color:#fff;transform:scaleX(.95);transform-origin:50% 0">15:08</div>
<div class="a" style="left:1295.4px;top:746.5px;width:56px;text-align:center;font-size:11.6px;line-height:17px;color:#fff;transform:scaleX(.95);transform-origin:50% 0">15.12.2016</div>
<div class="a" style="left:1361px;top:728px;width:1px;height:40px;background:#6a6a6a"></div>
</body></html>
